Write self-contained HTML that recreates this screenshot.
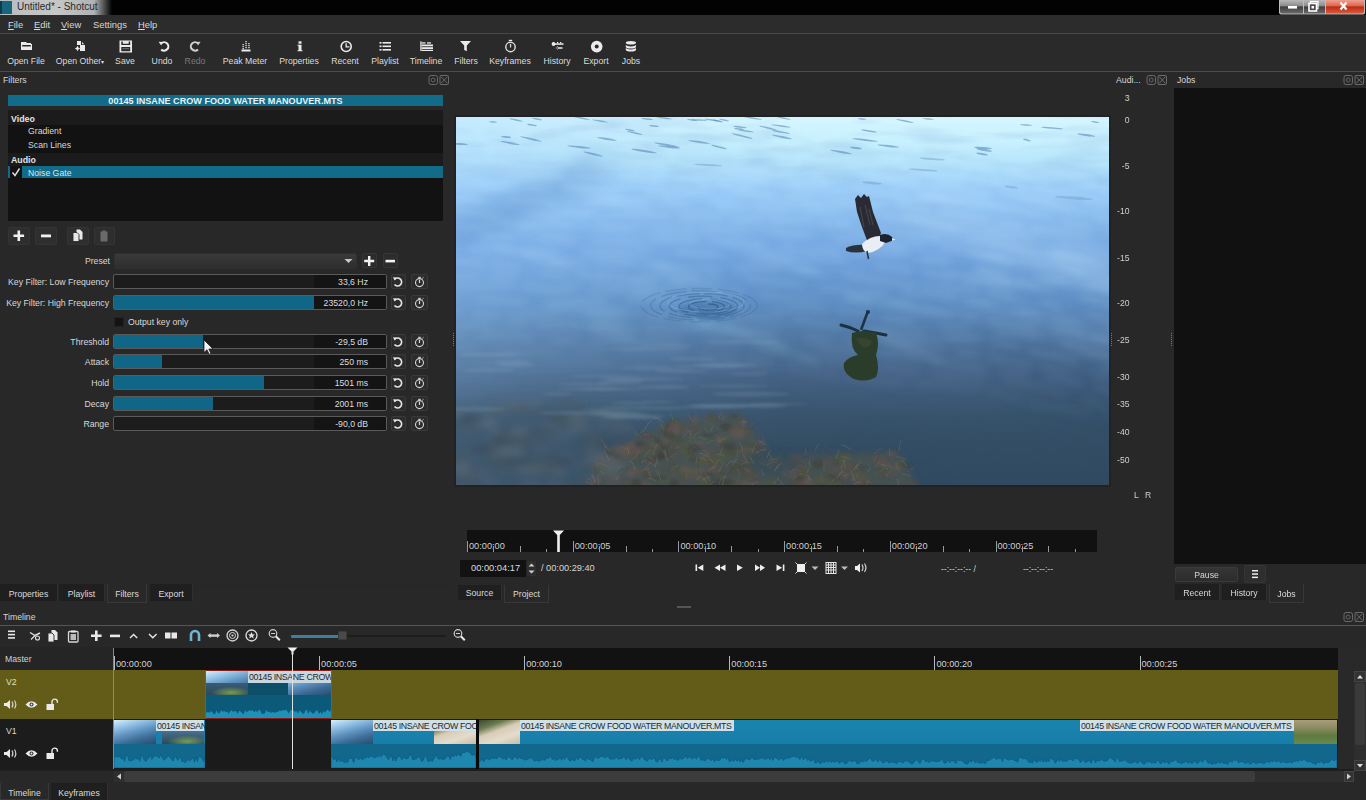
<!DOCTYPE html>
<html><head><meta charset="utf-8">
<style>
*{margin:0;padding:0;box-sizing:border-box}
html,body{width:1366px;height:800px;overflow:hidden;background:#282828;font-family:"Liberation Sans",sans-serif;color:#d8d8d8}
.a{position:absolute}
.t{position:absolute;white-space:nowrap;font-size:8.7px;line-height:10px}
.lbl{position:absolute;white-space:nowrap;font-size:8.7px;line-height:10px;color:#dcdcdc;text-align:center}
.r{text-align:right}
.sl{position:absolute;left:113px;width:274px;height:15px;border:1px solid #5a5a5a;border-radius:2px;background:#1c1c1c;overflow:hidden}
.sl .f{position:absolute;left:0;top:0;bottom:0;background:#0f6686}
.sl .v{position:absolute;left:200px;top:0;bottom:0;right:0;background:#141414}
.sl .n{position:absolute;right:18px;top:2px;font-size:8.7px;line-height:10px;color:#dedede;white-space:nowrap}
.btn{position:absolute;width:15px;height:15px;border:1px solid #3a3a3a;border-radius:2px;background:#2c2c2c}
.tab{position:absolute;height:17px;background:#1f1f1f;border-right:1px solid #303030}
.tab span{position:absolute;top:5px;left:0;right:0;text-align:center;font-size:8.7px;line-height:10px;color:#dadada;white-space:nowrap}
.tabsel{background:#282828;border:1px solid #383838;border-top:none}
</style></head><body>
<!-- title bar -->
<div class="a" style="left:0;top:0;width:1366px;height:15px;background:#020202"></div>
<div class="a" style="left:0;top:0;width:112px;height:15px;background:linear-gradient(90deg,#b9bcbd 0,#c6c8c8 50%,#b0b2b2 84%,rgba(0,0,0,0) 100%)"></div>
<div class="a" style="left:0;top:1px;width:12px;height:13px;background:#17667e;border-left:2px solid #0c3c4c"></div>
<div class="t" style="left:17px;top:2px;font-size:10px;color:#2a2a2a">Untitled* - Shotcut</div>
<div class="a" style="left:1150px;top:0;width:216px;height:15px;background:radial-gradient(ellipse 90px 20px at 100% 0,rgba(120,120,120,0.35),rgba(0,0,0,0))"></div>
<svg class="a" style="left:1278px;top:0" width="88" height="16">
<defs>
<linearGradient id="wg" x1="0" y1="0" x2="0" y2="1"><stop offset="0" stop-color="#b8b8b8"/><stop offset="0.45" stop-color="#8a8a8a"/><stop offset="0.5" stop-color="#3e3e3e"/><stop offset="1" stop-color="#6a6a6a"/></linearGradient>
<linearGradient id="rg" x1="0" y1="0" x2="0" y2="1"><stop offset="0" stop-color="#eea090"/><stop offset="0.45" stop-color="#d86650"/><stop offset="0.5" stop-color="#c02a10"/><stop offset="1" stop-color="#d85a40"/></linearGradient>
</defs>
<path d="M1 0h86v12.5q0 2-2 2h-82q-2 0-2-2z" fill="#bdbdbd"/>
<path d="M2 0h23v13.5h-21q-2 0-2-2z" fill="url(#wg)"/>
<rect x="26" y="0" width="21" height="13.5" fill="url(#wg)"/>
<path d="M48 0h38v11.5q0 2-2 2h-36z" fill="url(#rg)"/>
<rect x="10" y="6" width="9" height="2.6" fill="#fff"/>
<rect x="32.5" y="1.5" width="7.5" height="7" fill="none" stroke="#fff" stroke-width="1.2"/>
<rect x="31" y="3.5" width="7.5" height="7.5" fill="#4a4a4a" stroke="#fff" stroke-width="1.6"/>
<rect x="33.5" y="6" width="2.5" height="2.5" fill="#fff"/>
<path d="M62.5 2.5l6 7M68.5 2.5l-6 7" stroke="#fff" stroke-width="2.2"/>
</svg>
<!-- menu -->
<div class="a" style="left:0;top:15px;width:1366px;height:18px;background:#2c2c2c"></div>
<div class="t" style="left:8px;top:20px;font-size:9.4px"><span style="text-decoration:underline;text-underline-offset:1px">F</span>ile</div>
<div class="t" style="left:34px;top:20px;font-size:9.4px"><span style="text-decoration:underline;text-underline-offset:1px">E</span>dit</div>
<div class="t" style="left:61px;top:20px;font-size:9.4px"><span style="text-decoration:underline;text-underline-offset:1px">V</span>iew</div>
<div class="t" style="left:93px;top:20px;font-size:9.4px">Settings</div>
<div class="t" style="left:138px;top:20px;font-size:9.4px"><span style="text-decoration:underline;text-underline-offset:1px">H</span>elp</div>

<div class="a" style="left:0;top:33px;width:1366px;height:38px;background:#2a2a2a;border-top:1px solid #484848"></div>
<div class="a" style="left:0;top:71px;width:1366px;height:1px;background:#4c4c4c"></div>
<svg class="a" style="left:0;top:0" width="700" height="72" viewBox="0 0 700 72">
<g fill="#ebebeb" stroke="none">
<!-- open file -->
<path d="M21 42h5l1 1h4v1h-10z"/>
<path d="M21 44h11v6h-11z M22.2 45v1.6h8.6v-1.6z" fill-rule="evenodd"/>
<!-- open other -->
<rect x="77" y="41" width="4" height="4"/>
<path d="M82 42l2.2 2.2h-2.2z"/>
<path d="M80 45h5v6h-5z"/>
<path d="M77.5 45.8l0.9 1.8 1.8 0.9-1.8 0.9-0.9 1.8-0.9-1.8-1.8-0.9 1.8-0.9z"/>
<!-- save -->
<path d="M119.5 40.5h12.5v12h-12.5z M121.3 41.5v3.6h8.9v-3.6h-1.5v2.3h-5.9v-2.3z M121.3 47v4.3h8.9v-4.3z" fill-rule="evenodd"/>
<rect x="122.5" y="48.2" width="6.5" height="1" fill="#777"/>
<!-- undo -->
<path d="M161.2 43.4 A4.2 4.2 0 1 1 161.2 49.4" fill="none" stroke="#ebebeb" stroke-width="2.1"/>
<path d="M158.6 41.8l4.2 0.2-1.6 3.6z"/>
<!-- redo -->
<path d="M198 43.4 A4.2 4.2 0 1 0 198 49.4" fill="none" stroke="#d0d0d0" stroke-width="2.1"/>
<path d="M200.6 41.8l-4.2 0.2 1.6 3.6z" fill="#d0d0d0"/>
<!-- peak meter -->
<rect x="241.5" y="49.5" width="9" height="2"/>
<rect x="242.5" y="44" width="1.3" height="1.2"/><rect x="242.5" y="46" width="1.3" height="1.2"/><rect x="242.5" y="48" width="1.3" height="1.2"/>
<rect x="245.4" y="41" width="1.3" height="1.2"/><rect x="245.4" y="43" width="1.3" height="1.2"/><rect x="245.4" y="45" width="1.3" height="1.2"/><rect x="245.4" y="47" width="1.3" height="1.2"/>
<rect x="248.3" y="43" width="1.3" height="1.2"/><rect x="248.3" y="45" width="1.3" height="1.2"/><rect x="248.3" y="47" width="1.3" height="1.2"/>
<!-- info -->
<rect x="298.5" y="41.3" width="3" height="2.4"/>
<path d="M297.5 44.8h4v5.4h1v1h-5v-1h1v-4.4h-1z"/>
<!-- recent clock -->
<circle cx="346.2" cy="46.5" r="5" fill="none" stroke="#ebebeb" stroke-width="1.6"/>
<path d="M345.5 43.3h1.3v3h2.6v1.2h-3.9z"/>
<!-- playlist -->
<rect x="379.5" y="42" width="2" height="1.6"/><rect x="382.5" y="42" width="8.5" height="1.6"/>
<rect x="379.5" y="45.5" width="2" height="1.6"/><rect x="382.5" y="45.5" width="8.5" height="1.6"/>
<rect x="379.5" y="49" width="2" height="1.6"/><rect x="382.5" y="49" width="8.5" height="1.6"/>
<!-- timeline -->
<rect x="420.3" y="41.3" width="1.2" height="9.7"/>
<rect x="421.5" y="42.3" width="4" height="1.3"/><rect x="427" y="42.3" width="4" height="1.3"/>
<rect x="421.5" y="44.5" width="11.5" height="1.8"/>
<rect x="421.5" y="47.2" width="11.5" height="1.8"/>
<rect x="421.5" y="49.8" width="11.5" height="1.2"/>
<!-- filters funnel -->
<path d="M460 41h11l-4.2 4.6v5.6l-2.6-1.2v-4.4z"/>
<!-- keyframes stopwatch -->
<rect x="508.8" y="39.8" width="3.4" height="1.3"/>
<circle cx="510.5" cy="47" r="4.7" fill="none" stroke="#d8d8d8" stroke-width="1.5"/>
<rect x="509.9" y="44" width="1.3" height="3.5" fill="#d8d8d8"/>
<!-- history -->
<circle cx="553.5" cy="44" r="1.9"/>
<rect x="555" y="43.3" width="8.5" height="1.5"/>
<rect x="557" y="42" width="1.3" height="1.3"/><rect x="560" y="42" width="1.3" height="1.3"/>
<path d="M556.5 47.3h6v1.4h-6z M558 46l-2.5 1.9 2.5 1.9z"/>
<!-- export -->
<circle cx="596.7" cy="46.6" r="5.8"/>
<circle cx="596.7" cy="46.6" r="2" fill="#2a2a2a"/>
<!-- jobs -->
<ellipse cx="630.9" cy="42.8" rx="5.1" ry="1.8"/>
<path d="M625.8 44.6a5.1 1.8 0 0 0 10.2 0v2.1a5.1 1.8 0 0 1 -10.2 0z"/>
<path d="M625.8 47.6a5.1 1.8 0 0 0 10.2 0v2.1a5.1 1.8 0 0 1 -10.2 0z"/>
</g>
</svg>
<div class="lbl" style="left:6px;top:56px;width:40px">Open File</div>
<div class="lbl" style="left:55px;top:56px;width:50px">Open Other<span style="font-size:6px">▾</span></div>
<div class="lbl" style="left:110px;top:56px;width:30px">Save</div>
<div class="lbl" style="left:147px;top:56px;width:30px">Undo</div>
<div class="lbl" style="left:180px;top:56px;width:30px;color:#7a7a7a">Redo</div>
<div class="lbl" style="left:220px;top:56px;width:50px">Peak Meter</div>
<div class="lbl" style="left:274px;top:56px;width:50px">Properties</div>
<div class="lbl" style="left:325px;top:56px;width:40px">Recent</div>
<div class="lbl" style="left:365px;top:56px;width:40px">Playlist</div>
<div class="lbl" style="left:406px;top:56px;width:40px">Timeline</div>
<div class="lbl" style="left:446px;top:56px;width:40px">Filters</div>
<div class="lbl" style="left:485px;top:56px;width:50px">Keyframes</div>
<div class="lbl" style="left:537px;top:56px;width:40px">History</div>
<div class="lbl" style="left:576px;top:56px;width:40px">Export</div>
<div class="lbl" style="left:611px;top:56px;width:40px">Jobs</div>


<!-- FILTERS DOCK -->
<div class="t" style="left:3px;top:75px;color:#d6d6d6">Filters</div>
<svg class="a" style="left:428px;top:74px" width="24" height="12">
<rect x="1" y="1.5" width="8.5" height="9" rx="2" fill="none" stroke="#6a6a6a" stroke-width="1"/>
<circle cx="5.2" cy="6" r="2" fill="none" stroke="#6a6a6a" stroke-width="0.9"/>
<rect x="12" y="1.5" width="8.5" height="9" rx="1" fill="none" stroke="#6a6a6a" stroke-width="1"/>
<path d="M13 2.5l6.5 7M19.5 2.5l-6.5 7" stroke="#6a6a6a" stroke-width="1"/>
</svg>
<div class="a" style="left:8px;top:95px;width:435px;height:11px;background:#136b8a"></div>
<div class="t" style="left:8px;top:96px;width:435px;text-align:center;font-weight:bold;font-size:9.1px;color:#e8f4f8">00145 INSANE CROW FOOD WATER MANOUVER.MTS</div>
<div class="a" style="left:8px;top:110px;width:435px;height:111px;background:#121212"></div>
<div class="a" style="left:8px;top:110px;width:435px;height:15px;background:#1b1b1b"></div>
<div class="a" style="left:8px;top:153px;width:435px;height:13px;background:#1b1b1b"></div>
<div class="a" style="left:22px;top:166px;width:421px;height:12px;background:#136b8a"></div>
<div class="a" style="left:8px;top:166px;width:2px;height:12px;background:#136b8a"></div>
<div class="t" style="left:11px;top:114px;font-weight:bold;font-size:8.8px;color:#e2e2e2">Video</div>
<div class="t" style="left:28px;top:126px;color:#d8d8d8">Gradient</div>
<div class="t" style="left:28px;top:140px;color:#d8d8d8">Scan Lines</div>
<div class="t" style="left:11px;top:155px;font-weight:bold;font-size:8.8px;color:#e2e2e2">Audio</div>
<div class="t" style="left:28px;top:168px;color:#cfe8f0">Noise Gate</div>
<svg class="a" style="left:11px;top:166px" width="11" height="12"><path d="M1.5 6.5l2.5 3 4.5-7" fill="none" stroke="#e0e0e0" stroke-width="1.4"/></svg>
<!-- list buttons -->
<div class="a" style="left:8px;top:227px;width:22px;height:18px;border:1px solid #343434;border-radius:2px;background:#2e2e2e"></div>
<div class="a" style="left:35px;top:227px;width:22px;height:18px;border:1px solid #343434;border-radius:2px;background:#2e2e2e"></div>
<div class="a" style="left:67px;top:227px;width:22px;height:18px;border:1px solid #343434;border-radius:2px;background:#2e2e2e"></div>
<div class="a" style="left:94px;top:227px;width:21px;height:18px;border:1px solid #343434;border-radius:2px;background:#2e2e2e"></div>
<svg class="a" style="left:0;top:220px" width="130" height="30">
<path d="M17.5 10.5h2.6v4h4v2.6h-4v4h-2.6v-4h-4v-2.6h4z" fill="#f0f0f0"/>
<rect x="41" y="14.5" width="10" height="2.8" fill="#f0f0f0"/>
<path d="M76.5 9.5h3.5l2.5 2.5v7.5h-6z" fill="#e8e8e8"/>
<path d="M73 12.5h4l2 2v7h-6z" fill="#e8e8e8" stroke="#2e2e2e" stroke-width="0.9"/>
<path d="M100.5 11.5h2v-1h3v1h2v10h-7z" fill="#6a6a6a"/>
</svg>
<!-- preset -->
<div class="t r" style="left:40px;top:256px;width:70px">Preset</div>
<div class="a" style="left:114px;top:253px;width:243px;height:16px;border:1px solid #303030;border-radius:2px;background:linear-gradient(#3a3a3a,#2e2e2e)"></div>
<svg class="a" style="left:344px;top:258px" width="10" height="6"><path d="M0.5 1h8l-4 4z" fill="#c8c8c8"/></svg>
<div class="a" style="left:362px;top:253px;width:15px;height:15px;border:1px solid #363636;border-radius:2px;background:#2c2c2c"></div>
<div class="a" style="left:383px;top:253px;width:15px;height:15px;border:1px solid #363636;border-radius:2px;background:#2c2c2c"></div>
<svg class="a" style="left:360px;top:251px" width="40" height="20">
<path d="M8 5h2.4v3.8h3.8v2.4h-3.8v3.8h-2.4v-3.8h-3.8v-2.4h3.8z" fill="#f2f2f2"/>
<rect x="25.5" y="8.8" width="9.5" height="2.6" fill="#f2f2f2"/>
</svg>
<div class="t r" style="left:0;top:277px;width:109px">Key Filter: Low Frequency</div>
<div class="sl" style="top:274px"><div class="v"></div><div class="f" style="width:0px"></div><div class="n">33,6 Hz</div></div>
<div class="btn" style="left:391px;top:274px"></div><div class="btn" style="left:411px;top:274px;width:17px"></div>
<svg class="a" style="left:390px;top:274px" width="40" height="16"><path d="M4.5 5.5A4 4 0 1 1 4.5 10.5" fill="none" stroke="#e6e6e6" stroke-width="1.6"/><path d="M3 3.2l3.6 0.4-2 3z" fill="#e6e6e6"/><circle cx="29.5" cy="8.6" r="4" fill="none" stroke="#d6d6d6" stroke-width="1.1"/><rect x="28.9" y="5.8" width="1.2" height="3.2" fill="#d6d6d6"/><rect x="28.2" y="2.8" width="2.6" height="1.1" fill="#d6d6d6"/><path d="M32.3 4.3l1.2-1" stroke="#d6d6d6" stroke-width="0.9"/></svg>
<div class="t r" style="left:0;top:298px;width:109px">Key Filter: High Frequency</div>
<div class="sl" style="top:295px"><div class="v"></div><div class="f" style="width:200px"></div><div class="n">23520,0 Hz</div></div>
<div class="btn" style="left:391px;top:295px"></div><div class="btn" style="left:411px;top:295px;width:17px"></div>
<svg class="a" style="left:390px;top:295px" width="40" height="16"><path d="M4.5 5.5A4 4 0 1 1 4.5 10.5" fill="none" stroke="#e6e6e6" stroke-width="1.6"/><path d="M3 3.2l3.6 0.4-2 3z" fill="#e6e6e6"/><circle cx="29.5" cy="8.6" r="4" fill="none" stroke="#d6d6d6" stroke-width="1.1"/><rect x="28.9" y="5.8" width="1.2" height="3.2" fill="#d6d6d6"/><rect x="28.2" y="2.8" width="2.6" height="1.1" fill="#d6d6d6"/><path d="M32.3 4.3l1.2-1" stroke="#d6d6d6" stroke-width="0.9"/></svg>
<div class="t r" style="left:0;top:337px;width:109px">Threshold</div>
<div class="sl" style="top:334px"><div class="v"></div><div class="f" style="width:89px"></div><div class="n">-29,5 dB</div></div>
<div class="btn" style="left:391px;top:334px"></div><div class="btn" style="left:411px;top:334px;width:17px"></div>
<svg class="a" style="left:390px;top:334px" width="40" height="16"><path d="M4.5 5.5A4 4 0 1 1 4.5 10.5" fill="none" stroke="#e6e6e6" stroke-width="1.6"/><path d="M3 3.2l3.6 0.4-2 3z" fill="#e6e6e6"/><circle cx="29.5" cy="8.6" r="4" fill="none" stroke="#d6d6d6" stroke-width="1.1"/><rect x="28.9" y="5.8" width="1.2" height="3.2" fill="#d6d6d6"/><rect x="28.2" y="2.8" width="2.6" height="1.1" fill="#d6d6d6"/><path d="M32.3 4.3l1.2-1" stroke="#d6d6d6" stroke-width="0.9"/></svg>
<div class="t r" style="left:0;top:357px;width:109px">Attack</div>
<div class="sl" style="top:354px"><div class="v"></div><div class="f" style="width:48px"></div><div class="n">250 ms</div></div>
<div class="btn" style="left:391px;top:354px"></div><div class="btn" style="left:411px;top:354px;width:17px"></div>
<svg class="a" style="left:390px;top:354px" width="40" height="16"><path d="M4.5 5.5A4 4 0 1 1 4.5 10.5" fill="none" stroke="#e6e6e6" stroke-width="1.6"/><path d="M3 3.2l3.6 0.4-2 3z" fill="#e6e6e6"/><circle cx="29.5" cy="8.6" r="4" fill="none" stroke="#d6d6d6" stroke-width="1.1"/><rect x="28.9" y="5.8" width="1.2" height="3.2" fill="#d6d6d6"/><rect x="28.2" y="2.8" width="2.6" height="1.1" fill="#d6d6d6"/><path d="M32.3 4.3l1.2-1" stroke="#d6d6d6" stroke-width="0.9"/></svg>
<div class="t r" style="left:0;top:378px;width:109px">Hold</div>
<div class="sl" style="top:375px"><div class="v"></div><div class="f" style="width:150px"></div><div class="n">1501 ms</div></div>
<div class="btn" style="left:391px;top:375px"></div><div class="btn" style="left:411px;top:375px;width:17px"></div>
<svg class="a" style="left:390px;top:375px" width="40" height="16"><path d="M4.5 5.5A4 4 0 1 1 4.5 10.5" fill="none" stroke="#e6e6e6" stroke-width="1.6"/><path d="M3 3.2l3.6 0.4-2 3z" fill="#e6e6e6"/><circle cx="29.5" cy="8.6" r="4" fill="none" stroke="#d6d6d6" stroke-width="1.1"/><rect x="28.9" y="5.8" width="1.2" height="3.2" fill="#d6d6d6"/><rect x="28.2" y="2.8" width="2.6" height="1.1" fill="#d6d6d6"/><path d="M32.3 4.3l1.2-1" stroke="#d6d6d6" stroke-width="0.9"/></svg>
<div class="t r" style="left:0;top:399px;width:109px">Decay</div>
<div class="sl" style="top:396px"><div class="v"></div><div class="f" style="width:99px"></div><div class="n">2001 ms</div></div>
<div class="btn" style="left:391px;top:396px"></div><div class="btn" style="left:411px;top:396px;width:17px"></div>
<svg class="a" style="left:390px;top:396px" width="40" height="16"><path d="M4.5 5.5A4 4 0 1 1 4.5 10.5" fill="none" stroke="#e6e6e6" stroke-width="1.6"/><path d="M3 3.2l3.6 0.4-2 3z" fill="#e6e6e6"/><circle cx="29.5" cy="8.6" r="4" fill="none" stroke="#d6d6d6" stroke-width="1.1"/><rect x="28.9" y="5.8" width="1.2" height="3.2" fill="#d6d6d6"/><rect x="28.2" y="2.8" width="2.6" height="1.1" fill="#d6d6d6"/><path d="M32.3 4.3l1.2-1" stroke="#d6d6d6" stroke-width="0.9"/></svg>
<div class="t r" style="left:0;top:419px;width:109px">Range</div>
<div class="sl" style="top:416px"><div class="v"></div><div class="f" style="width:0px"></div><div class="n">-90,0 dB</div></div>
<div class="btn" style="left:391px;top:416px"></div><div class="btn" style="left:411px;top:416px;width:17px"></div>
<svg class="a" style="left:390px;top:416px" width="40" height="16"><path d="M4.5 5.5A4 4 0 1 1 4.5 10.5" fill="none" stroke="#e6e6e6" stroke-width="1.6"/><path d="M3 3.2l3.6 0.4-2 3z" fill="#e6e6e6"/><circle cx="29.5" cy="8.6" r="4" fill="none" stroke="#d6d6d6" stroke-width="1.1"/><rect x="28.9" y="5.8" width="1.2" height="3.2" fill="#d6d6d6"/><rect x="28.2" y="2.8" width="2.6" height="1.1" fill="#d6d6d6"/><path d="M32.3 4.3l1.2-1" stroke="#d6d6d6" stroke-width="0.9"/></svg>
<div class="a" style="left:114px;top:317px;width:10px;height:10px;background:#141414;border:1px solid #222"></div>
<div class="t" style="left:128px;top:317px">Output key only</div>
<svg class="a" style="left:203px;top:339px" width="12" height="18"><path d="M1 1v12.5l3-2.8 2.2 4.6 1.8-0.8-2.2-4.5h4.2z" fill="#f4f4f4" stroke="#222" stroke-width="0.8"/></svg>
<div class="a" style="left:0;top:584px;width:450px;height:1px;background:#262626"></div>
<div class="tab" style="left:0;top:584px;width:58px"><span>Properties</span></div>
<div class="tab" style="left:59px;top:584px;width:46px"><span>Playlist</span></div>
<div class="tab tabsel" style="left:107px;top:584px;width:40px;height:19px"><span style="top:5px">Filters</span></div>
<div class="tab" style="left:150px;top:584px;width:43px"><span>Export</span></div>
<!-- PLAYER -->
<div class="a" style="left:454px;top:115px;width:657px;height:372px;background:#222222"></div>
<div id="video" class="a" style="left:456px;top:117px;width:653px;height:368px;overflow:hidden"><svg width="653" height="368" viewBox="0 0 653 368">
<defs>
<linearGradient id="gv" x1="0" y1="0" x2="0" y2="1">
<stop offset="0" stop-color="#d6f6ff"/>
<stop offset="0.06" stop-color="#caf2fe"/>
<stop offset="0.12" stop-color="#b8e6fc"/>
<stop offset="0.2" stop-color="#9ccefa"/>
<stop offset="0.36" stop-color="#76a8e2"/>
<stop offset="0.5" stop-color="#5e8ec4"/>
<stop offset="0.71" stop-color="#4c6a8e"/>
<stop offset="0.82" stop-color="#405c74"/>
<stop offset="1" stop-color="#385060"/>
</linearGradient>
<linearGradient id="gh" x1="0" y1="0.6" x2="1" y2="0.35">
<stop offset="0" stop-color="#1a3a60" stop-opacity="0.35"/>
<stop offset="0.45" stop-color="#1a3a60" stop-opacity="0"/>
<stop offset="0.7" stop-color="#c0e4ff" stop-opacity="0.05"/>
<stop offset="1" stop-color="#c0e4ff" stop-opacity="0.3"/>
</linearGradient>
<filter id="b12" x="-30%" y="-30%" width="160%" height="160%"><feGaussianBlur stdDeviation="12"/></filter>
<filter id="b20" x="-30%" y="-30%" width="160%" height="160%"><feGaussianBlur stdDeviation="20"/></filter>
<filter id="b6" x="-20%" y="-20%" width="140%" height="140%"><feGaussianBlur stdDeviation="5"/></filter>
<filter id="b2" x="-20%" y="-50%" width="140%" height="200%"><feGaussianBlur stdDeviation="1.5"/></filter>
<filter id="b4" x="-20%" y="-80%" width="140%" height="260%"><feGaussianBlur stdDeviation="3.5"/></filter>
<filter id="b1" x="-20%" y="-50%" width="140%" height="200%"><feGaussianBlur stdDeviation="0.7"/></filter>
<filter id="tex" x="0" y="0" width="100%" height="100%">
<feTurbulence type="fractalNoise" baseFrequency="0.012 0.07" numOctaves="3" seed="4" result="n"/>
<feColorMatrix in="n" type="matrix" values="0 0 0 0 0.25  0 0 0 0 0.45  0 0 0 0 0.75  0 0 0 2.5 -1.15" result="d"/>
<feComposite in="d" in2="SourceGraphic" operator="in"/>
</filter>
<filter id="tex3" x="0" y="0" width="100%" height="100%">
<feTurbulence type="fractalNoise" baseFrequency="0.014 0.08" numOctaves="3" seed="11" result="n"/>
<feColorMatrix in="n" type="matrix" values="0 0 0 0 0.85  0 0 0 0 0.95  0 0 0 0 1  0 0 0 2.5 -1.2" result="d"/>
<feComposite in="d" in2="SourceGraphic" operator="in"/>
</filter>
<filter id="tex2" x="0" y="0" width="100%" height="100%">
<feTurbulence type="fractalNoise" baseFrequency="0.12" numOctaves="2" seed="9" result="n"/>
<feColorMatrix in="n" type="matrix" values="0 0 0 0 0.5  0 0 0 0 0.42  0 0 0 0 0.38  0 0 0 2.2 -0.9" result="d"/>
<feComposite in="d" in2="SourceGraphic" operator="in" result="c"/>
<feGaussianBlur in="c" stdDeviation="1.5"/>
</filter>
<linearGradient id="mkg" x1="0" y1="0" x2="0" y2="1"><stop offset="0" stop-color="#fff"/><stop offset="0.3" stop-color="#fff" stop-opacity="0.8"/><stop offset="0.6" stop-color="#fff" stop-opacity="0.25"/><stop offset="0.8" stop-color="#fff" stop-opacity="0"/></linearGradient>
<mask id="mk" maskUnits="userSpaceOnUse" x="0" y="0" width="653" height="368"><rect width="653" height="368" fill="url(#mkg)"/></mask>
<linearGradient id="gh2" x1="0" y1="0" x2="1" y2="0">
<stop offset="0" stop-color="#a0d0ff" stop-opacity="0.3"/>
<stop offset="0.5" stop-color="#90c4f4" stop-opacity="0"/>
<stop offset="1" stop-color="#203850" stop-opacity="0.0"/>
</linearGradient>
<linearGradient id="gb" x1="0" y1="0" x2="0" y2="1">
<stop offset="0" stop-color="#1a3048" stop-opacity="0"/>
<stop offset="0.5" stop-color="#1a3048" stop-opacity="0"/>
<stop offset="0.8" stop-color="#1a3048" stop-opacity="0.22"/>
<stop offset="1" stop-color="#1a3048" stop-opacity="0.3"/>
</linearGradient>
</defs>
<rect width="653" height="368" fill="url(#gv)"/>
<rect width="653" height="368" fill="url(#gh2)"/>
<path d="M-10 105 L60 75 L140 40 L160 52 L70 98 L-10 135z" fill="#4a7cbc" opacity="0.4" filter="url(#b12)"/>
<path d="M430 80 L700 150 L700 190 L470 115z" fill="#b8dcf6" opacity="0.3" filter="url(#b12)"/>
<path d="M480 170 L700 230 L700 250 L520 195z" fill="#9cc8ec" opacity="0.25" filter="url(#b12)"/>
<path d="M520 215 L700 265 L700 330 L540 250z" fill="#2a4a70" opacity="0.25" filter="url(#b20)"/>
<rect width="653" height="368" fill="url(#gb)"/>
<g mask="url(#mk)"><rect width="653" height="368" fill="#000" filter="url(#tex)" opacity="0.3"/></g>
<ellipse cx="70" cy="345" rx="160" ry="55" fill="#34485a" opacity="0.55" filter="url(#b20)"/>
<ellipse cx="560" cy="360" rx="160" ry="40" fill="#30506a" opacity="0.45" filter="url(#b20)"/>
<polygon points="130,372 144,338 184,318 224,303 284,296 298,313 314,338 354,338 444,336 462,372" fill="#4c5250" opacity="0.8" filter="url(#b4)"/>
<g filter="url(#b2)"><ellipse cx="238" cy="303" rx="4" ry="4" fill="#625652" opacity="0.6"/><ellipse cx="162" cy="340" rx="5" ry="2" fill="#3a403c" opacity="0.6"/><ellipse cx="270" cy="310" rx="6" ry="4" fill="#3a403c" opacity="0.6"/><ellipse cx="340" cy="371" rx="7" ry="2" fill="#3a403c" opacity="0.6"/><ellipse cx="204" cy="337" rx="5" ry="2" fill="#5a504c" opacity="0.6"/><ellipse cx="325" cy="344" rx="4" ry="4" fill="#444c40" opacity="0.6"/><ellipse cx="319" cy="343" rx="7" ry="3" fill="#505640" opacity="0.6"/><ellipse cx="235" cy="340" rx="6" ry="3" fill="#505640" opacity="0.6"/><ellipse cx="190" cy="356" rx="7" ry="4" fill="#524c4a" opacity="0.6"/><ellipse cx="423" cy="352" rx="7" ry="2" fill="#444c40" opacity="0.6"/><ellipse cx="245" cy="369" rx="4" ry="4" fill="#505640" opacity="0.6"/><ellipse cx="386" cy="339" rx="6" ry="3" fill="#444c40" opacity="0.6"/><ellipse cx="296" cy="358" rx="8" ry="5" fill="#524c4a" opacity="0.6"/><ellipse cx="289" cy="346" rx="8" ry="3" fill="#524c4a" opacity="0.6"/><ellipse cx="324" cy="348" rx="5" ry="3" fill="#505640" opacity="0.6"/><ellipse cx="285" cy="304" rx="6" ry="3" fill="#524c4a" opacity="0.6"/><ellipse cx="226" cy="353" rx="6" ry="5" fill="#505640" opacity="0.6"/><ellipse cx="314" cy="365" rx="8" ry="3" fill="#505640" opacity="0.6"/><ellipse cx="269" cy="320" rx="9" ry="2" fill="#505640" opacity="0.6"/><ellipse cx="208" cy="331" rx="5" ry="3" fill="#3a403c" opacity="0.6"/><ellipse cx="179" cy="335" rx="7" ry="5" fill="#3a403c" opacity="0.6"/><ellipse cx="337" cy="347" rx="6" ry="5" fill="#524c4a" opacity="0.6"/><ellipse cx="449" cy="348" rx="6" ry="3" fill="#3a403c" opacity="0.6"/><ellipse cx="165" cy="344" rx="5" ry="5" fill="#524c4a" opacity="0.6"/><ellipse cx="278" cy="299" rx="4" ry="2" fill="#3a403c" opacity="0.6"/><ellipse cx="423" cy="342" rx="7" ry="5" fill="#5a504c" opacity="0.6"/><ellipse cx="169" cy="331" rx="6" ry="3" fill="#505640" opacity="0.6"/><ellipse cx="178" cy="354" rx="5" ry="4" fill="#625652" opacity="0.6"/><ellipse cx="179" cy="336" rx="8" ry="3" fill="#524c4a" opacity="0.6"/><ellipse cx="205" cy="336" rx="6" ry="3" fill="#3a403c" opacity="0.6"/><ellipse cx="402" cy="374" rx="8" ry="4" fill="#5a504c" opacity="0.6"/><ellipse cx="224" cy="312" rx="7" ry="3" fill="#625652" opacity="0.6"/><ellipse cx="401" cy="351" rx="9" ry="3" fill="#444c40" opacity="0.6"/><ellipse cx="339" cy="367" rx="6" ry="4" fill="#524c4a" opacity="0.6"/><ellipse cx="351" cy="367" rx="8" ry="3" fill="#625652" opacity="0.6"/><ellipse cx="190" cy="357" rx="4" ry="5" fill="#444c40" opacity="0.6"/><ellipse cx="183" cy="374" rx="5" ry="5" fill="#524c4a" opacity="0.6"/><ellipse cx="407" cy="373" rx="9" ry="2" fill="#625652" opacity="0.6"/><ellipse cx="398" cy="352" rx="7" ry="5" fill="#524c4a" opacity="0.6"/><ellipse cx="275" cy="364" rx="4" ry="3" fill="#5a504c" opacity="0.6"/><ellipse cx="298" cy="355" rx="5" ry="3" fill="#444c40" opacity="0.6"/><ellipse cx="174" cy="367" rx="8" ry="4" fill="#444c40" opacity="0.6"/><ellipse cx="407" cy="365" rx="7" ry="4" fill="#5a504c" opacity="0.6"/><ellipse cx="289" cy="352" rx="4" ry="4" fill="#3a403c" opacity="0.6"/><ellipse cx="308" cy="331" rx="8" ry="2" fill="#524c4a" opacity="0.6"/><ellipse cx="139" cy="366" rx="6" ry="4" fill="#524c4a" opacity="0.6"/><ellipse cx="299" cy="334" rx="5" ry="4" fill="#625652" opacity="0.6"/><ellipse cx="213" cy="334" rx="9" ry="5" fill="#444c40" opacity="0.6"/><ellipse cx="198" cy="328" rx="5" ry="3" fill="#505640" opacity="0.6"/><ellipse cx="154" cy="347" rx="8" ry="2" fill="#524c4a" opacity="0.6"/><ellipse cx="370" cy="346" rx="5" ry="2" fill="#5a504c" opacity="0.6"/><ellipse cx="287" cy="353" rx="6" ry="3" fill="#524c4a" opacity="0.6"/><ellipse cx="184" cy="327" rx="6" ry="3" fill="#3a403c" opacity="0.6"/><ellipse cx="253" cy="319" rx="6" ry="2" fill="#505640" opacity="0.6"/><ellipse cx="241" cy="343" rx="9" ry="2" fill="#3a403c" opacity="0.6"/><ellipse cx="221" cy="367" rx="5" ry="2" fill="#5a504c" opacity="0.6"/><ellipse cx="271" cy="367" rx="6" ry="4" fill="#444c40" opacity="0.6"/><ellipse cx="302" cy="332" rx="4" ry="2" fill="#444c40" opacity="0.6"/><ellipse cx="154" cy="370" rx="4" ry="3" fill="#625652" opacity="0.6"/><ellipse cx="134" cy="375" rx="9" ry="3" fill="#505640" opacity="0.6"/><ellipse cx="173" cy="335" rx="9" ry="5" fill="#5a504c" opacity="0.6"/><ellipse cx="218" cy="305" rx="7" ry="4" fill="#444c40" opacity="0.6"/><ellipse cx="199" cy="328" rx="5" ry="3" fill="#625652" opacity="0.6"/><ellipse cx="289" cy="369" rx="7" ry="4" fill="#524c4a" opacity="0.6"/><ellipse cx="428" cy="372" rx="7" ry="5" fill="#444c40" opacity="0.6"/><ellipse cx="245" cy="361" rx="8" ry="2" fill="#625652" opacity="0.6"/><ellipse cx="461" cy="373" rx="4" ry="4" fill="#5a504c" opacity="0.6"/><ellipse cx="149" cy="347" rx="8" ry="4" fill="#505640" opacity="0.6"/><ellipse cx="224" cy="311" rx="4" ry="3" fill="#444c40" opacity="0.6"/><ellipse cx="252" cy="318" rx="6" ry="2" fill="#3a403c" opacity="0.6"/><ellipse cx="191" cy="319" rx="6" ry="4" fill="#524c4a" opacity="0.6"/><ellipse cx="197" cy="333" rx="4" ry="4" fill="#524c4a" opacity="0.6"/><ellipse cx="178" cy="340" rx="4" ry="3" fill="#505640" opacity="0.6"/><ellipse cx="208" cy="340" rx="8" ry="2" fill="#3a403c" opacity="0.6"/><ellipse cx="429" cy="357" rx="6" ry="3" fill="#3a403c" opacity="0.6"/><ellipse cx="373" cy="345" rx="8" ry="4" fill="#524c4a" opacity="0.6"/><ellipse cx="302" cy="326" rx="8" ry="2" fill="#625652" opacity="0.6"/><ellipse cx="305" cy="333" rx="8" ry="4" fill="#524c4a" opacity="0.6"/><ellipse cx="429" cy="348" rx="7" ry="2" fill="#625652" opacity="0.6"/><ellipse cx="144" cy="344" rx="6" ry="3" fill="#524c4a" opacity="0.6"/><ellipse cx="218" cy="329" rx="8" ry="4" fill="#524c4a" opacity="0.6"/><ellipse cx="309" cy="346" rx="8" ry="3" fill="#524c4a" opacity="0.6"/><ellipse cx="401" cy="362" rx="8" ry="3" fill="#5a504c" opacity="0.6"/><ellipse cx="378" cy="373" rx="8" ry="2" fill="#505640" opacity="0.6"/><ellipse cx="146" cy="344" rx="4" ry="2" fill="#5a504c" opacity="0.6"/><ellipse cx="215" cy="353" rx="7" ry="2" fill="#444c40" opacity="0.6"/><ellipse cx="292" cy="331" rx="4" ry="3" fill="#625652" opacity="0.6"/><ellipse cx="294" cy="350" rx="6" ry="3" fill="#444c40" opacity="0.6"/><ellipse cx="170" cy="366" rx="6" ry="2" fill="#5a504c" opacity="0.6"/><ellipse cx="288" cy="315" rx="8" ry="5" fill="#524c4a" opacity="0.6"/><ellipse cx="281" cy="313" rx="9" ry="5" fill="#5a504c" opacity="0.6"/><ellipse cx="250" cy="341" rx="7" ry="5" fill="#625652" opacity="0.6"/><ellipse cx="295" cy="328" rx="8" ry="3" fill="#444c40" opacity="0.6"/><ellipse cx="256" cy="300" rx="4" ry="4" fill="#444c40" opacity="0.6"/><ellipse cx="440" cy="351" rx="5" ry="3" fill="#625652" opacity="0.6"/><ellipse cx="262" cy="375" rx="4" ry="5" fill="#3a403c" opacity="0.6"/><ellipse cx="383" cy="363" rx="5" ry="5" fill="#444c40" opacity="0.6"/><ellipse cx="226" cy="370" rx="9" ry="3" fill="#5a504c" opacity="0.6"/><ellipse cx="236" cy="356" rx="8" ry="4" fill="#505640" opacity="0.6"/><ellipse cx="341" cy="368" rx="7" ry="4" fill="#3a403c" opacity="0.6"/><ellipse cx="147" cy="352" rx="7" ry="2" fill="#505640" opacity="0.6"/><ellipse cx="435" cy="337" rx="6" ry="3" fill="#5a504c" opacity="0.6"/><ellipse cx="230" cy="353" rx="5" ry="4" fill="#625652" opacity="0.6"/><ellipse cx="231" cy="337" rx="5" ry="4" fill="#505640" opacity="0.6"/><ellipse cx="155" cy="333" rx="7" ry="3" fill="#505640" opacity="0.6"/><ellipse cx="241" cy="355" rx="5" ry="3" fill="#505640" opacity="0.6"/><ellipse cx="217" cy="338" rx="8" ry="3" fill="#524c4a" opacity="0.6"/><ellipse cx="269" cy="335" rx="5" ry="4" fill="#505640" opacity="0.6"/><ellipse cx="297" cy="339" rx="5" ry="4" fill="#444c40" opacity="0.6"/><ellipse cx="341" cy="363" rx="4" ry="5" fill="#5a504c" opacity="0.6"/><ellipse cx="259" cy="345" rx="9" ry="5" fill="#505640" opacity="0.6"/><ellipse cx="141" cy="350" rx="9" ry="3" fill="#505640" opacity="0.6"/><ellipse cx="155" cy="369" rx="8" ry="5" fill="#3a403c" opacity="0.6"/><ellipse cx="182" cy="334" rx="5" ry="4" fill="#625652" opacity="0.6"/><ellipse cx="365" cy="362" rx="4" ry="4" fill="#505640" opacity="0.6"/><ellipse cx="370" cy="372" rx="5" ry="4" fill="#625652" opacity="0.6"/><ellipse cx="154" cy="335" rx="5" ry="3" fill="#3a403c" opacity="0.6"/><ellipse cx="310" cy="375" rx="9" ry="4" fill="#444c40" opacity="0.6"/><ellipse cx="209" cy="311" rx="8" ry="3" fill="#505640" opacity="0.6"/><ellipse cx="216" cy="347" rx="5" ry="2" fill="#444c40" opacity="0.6"/><ellipse cx="243" cy="326" rx="6" ry="2" fill="#625652" opacity="0.6"/><ellipse cx="228" cy="362" rx="5" ry="5" fill="#524c4a" opacity="0.6"/><ellipse cx="234" cy="360" rx="6" ry="3" fill="#5a504c" opacity="0.6"/><ellipse cx="339" cy="342" rx="6" ry="5" fill="#5a504c" opacity="0.6"/><ellipse cx="149" cy="341" rx="4" ry="2" fill="#505640" opacity="0.6"/><ellipse cx="281" cy="351" rx="8" ry="5" fill="#444c40" opacity="0.6"/><ellipse cx="192" cy="370" rx="6" ry="3" fill="#625652" opacity="0.6"/><ellipse cx="373" cy="361" rx="6" ry="2" fill="#444c40" opacity="0.6"/><ellipse cx="271" cy="365" rx="9" ry="3" fill="#3a403c" opacity="0.6"/><ellipse cx="249" cy="360" rx="4" ry="4" fill="#505640" opacity="0.6"/><ellipse cx="196" cy="336" rx="5" ry="3" fill="#505640" opacity="0.6"/><ellipse cx="268" cy="359" rx="4" ry="2" fill="#505640" opacity="0.6"/><ellipse cx="151" cy="368" rx="5" ry="2" fill="#444c40" opacity="0.6"/><ellipse cx="242" cy="371" rx="5" ry="4" fill="#524c4a" opacity="0.6"/><ellipse cx="236" cy="313" rx="8" ry="4" fill="#524c4a" opacity="0.6"/><ellipse cx="400" cy="370" rx="4" ry="3" fill="#524c4a" opacity="0.6"/><ellipse cx="289" cy="371" rx="8" ry="5" fill="#505640" opacity="0.6"/><ellipse cx="209" cy="363" rx="6" ry="4" fill="#505640" opacity="0.6"/><ellipse cx="458" cy="365" rx="5" ry="2" fill="#524c4a" opacity="0.6"/><ellipse cx="162" cy="332" rx="9" ry="3" fill="#625652" opacity="0.6"/><ellipse cx="175" cy="329" rx="5" ry="4" fill="#625652" opacity="0.6"/><ellipse cx="389" cy="355" rx="5" ry="4" fill="#444c40" opacity="0.6"/><ellipse cx="255" cy="353" rx="6" ry="3" fill="#5a504c" opacity="0.6"/><ellipse cx="209" cy="314" rx="5" ry="2" fill="#3a403c" opacity="0.6"/><ellipse cx="214" cy="311" rx="5" ry="4" fill="#3a403c" opacity="0.6"/><ellipse cx="349" cy="374" rx="4" ry="5" fill="#524c4a" opacity="0.6"/><ellipse cx="207" cy="328" rx="4" ry="3" fill="#444c40" opacity="0.6"/><ellipse cx="217" cy="356" rx="5" ry="4" fill="#524c4a" opacity="0.6"/><ellipse cx="254" cy="302" rx="9" ry="2" fill="#5a504c" opacity="0.6"/><ellipse cx="375" cy="368" rx="8" ry="3" fill="#524c4a" opacity="0.6"/><ellipse cx="255" cy="343" rx="5" ry="4" fill="#524c4a" opacity="0.6"/><ellipse cx="314" cy="344" rx="7" ry="3" fill="#524c4a" opacity="0.6"/><ellipse cx="221" cy="374" rx="6" ry="5" fill="#625652" opacity="0.6"/><ellipse cx="235" cy="338" rx="6" ry="2" fill="#444c40" opacity="0.6"/><ellipse cx="387" cy="358" rx="5" ry="4" fill="#625652" opacity="0.6"/><ellipse cx="315" cy="344" rx="4" ry="4" fill="#505640" opacity="0.6"/><ellipse cx="254" cy="333" rx="6" ry="2" fill="#5a504c" opacity="0.6"/><ellipse cx="259" cy="354" rx="6" ry="5" fill="#5a504c" opacity="0.6"/><ellipse cx="145" cy="368" rx="4" ry="5" fill="#444c40" opacity="0.6"/><ellipse cx="260" cy="367" rx="7" ry="5" fill="#3a403c" opacity="0.6"/><ellipse cx="345" cy="363" rx="6" ry="5" fill="#3a403c" opacity="0.6"/><ellipse cx="203" cy="324" rx="5" ry="3" fill="#3a403c" opacity="0.6"/><ellipse cx="180" cy="373" rx="4" ry="4" fill="#5a504c" opacity="0.6"/><ellipse cx="271" cy="340" rx="6" ry="3" fill="#505640" opacity="0.6"/><ellipse cx="131" cy="374" rx="5" ry="4" fill="#505640" opacity="0.6"/><ellipse cx="190" cy="330" rx="4" ry="3" fill="#524c4a" opacity="0.6"/><ellipse cx="252" cy="358" rx="7" ry="2" fill="#3a403c" opacity="0.6"/><ellipse cx="376" cy="356" rx="4" ry="4" fill="#3a403c" opacity="0.6"/><ellipse cx="430" cy="345" rx="4" ry="2" fill="#5a504c" opacity="0.6"/><ellipse cx="336" cy="349" rx="5" ry="5" fill="#524c4a" opacity="0.6"/><ellipse cx="295" cy="371" rx="7" ry="4" fill="#5a504c" opacity="0.6"/><ellipse cx="204" cy="361" rx="8" ry="2" fill="#3a403c" opacity="0.6"/><ellipse cx="298" cy="368" rx="7" ry="4" fill="#5a504c" opacity="0.6"/><ellipse cx="210" cy="322" rx="5" ry="2" fill="#5a504c" opacity="0.6"/><ellipse cx="444" cy="348" rx="5" ry="4" fill="#505640" opacity="0.6"/><ellipse cx="169" cy="335" rx="8" ry="5" fill="#625652" opacity="0.6"/><ellipse cx="282" cy="334" rx="8" ry="2" fill="#625652" opacity="0.6"/><ellipse cx="262" cy="358" rx="6" ry="3" fill="#444c40" opacity="0.6"/><ellipse cx="336" cy="371" rx="8" ry="3" fill="#444c40" opacity="0.6"/><ellipse cx="344" cy="374" rx="9" ry="5" fill="#3a403c" opacity="0.6"/><ellipse cx="376" cy="354" rx="5" ry="4" fill="#5a504c" opacity="0.6"/><ellipse cx="275" cy="334" rx="5" ry="3" fill="#524c4a" opacity="0.6"/><ellipse cx="205" cy="340" rx="5" ry="3" fill="#3a403c" opacity="0.6"/><ellipse cx="402" cy="372" rx="7" ry="4" fill="#524c4a" opacity="0.6"/><ellipse cx="247" cy="345" rx="7" ry="4" fill="#505640" opacity="0.6"/><ellipse cx="183" cy="367" rx="4" ry="4" fill="#524c4a" opacity="0.6"/><ellipse cx="197" cy="342" rx="7" ry="3" fill="#3a403c" opacity="0.6"/><ellipse cx="151" cy="343" rx="8" ry="4" fill="#625652" opacity="0.6"/><ellipse cx="242" cy="354" rx="9" ry="3" fill="#625652" opacity="0.6"/><ellipse cx="148" cy="344" rx="6" ry="4" fill="#625652" opacity="0.6"/><ellipse cx="345" cy="372" rx="4" ry="4" fill="#5a504c" opacity="0.6"/><ellipse cx="187" cy="367" rx="5" ry="2" fill="#625652" opacity="0.6"/><ellipse cx="260" cy="341" rx="9" ry="4" fill="#505640" opacity="0.6"/><ellipse cx="362" cy="347" rx="6" ry="5" fill="#3a403c" opacity="0.6"/><ellipse cx="364" cy="363" rx="9" ry="3" fill="#505640" opacity="0.6"/><ellipse cx="426" cy="357" rx="7" ry="2" fill="#505640" opacity="0.6"/><ellipse cx="144" cy="349" rx="4" ry="2" fill="#625652" opacity="0.6"/><ellipse cx="146" cy="363" rx="5" ry="5" fill="#444c40" opacity="0.6"/><ellipse cx="309" cy="346" rx="9" ry="2" fill="#625652" opacity="0.6"/><ellipse cx="142" cy="362" rx="4" ry="4" fill="#625652" opacity="0.6"/><ellipse cx="174" cy="357" rx="5" ry="3" fill="#625652" opacity="0.6"/><ellipse cx="216" cy="314" rx="8" ry="5" fill="#625652" opacity="0.6"/><ellipse cx="388" cy="341" rx="8" ry="4" fill="#505640" opacity="0.6"/><ellipse cx="276" cy="356" rx="6" ry="2" fill="#444c40" opacity="0.6"/><ellipse cx="320" cy="351" rx="7" ry="3" fill="#524c4a" opacity="0.6"/><ellipse cx="276" cy="335" rx="8" ry="5" fill="#444c40" opacity="0.6"/><ellipse cx="295" cy="358" rx="9" ry="4" fill="#5a504c" opacity="0.6"/><ellipse cx="403" cy="370" rx="6" ry="2" fill="#5a504c" opacity="0.6"/><ellipse cx="394" cy="349" rx="7" ry="3" fill="#524c4a" opacity="0.6"/><ellipse cx="264" cy="324" rx="4" ry="5" fill="#625652" opacity="0.6"/><ellipse cx="218" cy="367" rx="5" ry="5" fill="#3a403c" opacity="0.6"/><ellipse cx="341" cy="370" rx="7" ry="4" fill="#5a504c" opacity="0.6"/><ellipse cx="382" cy="345" rx="7" ry="4" fill="#444c40" opacity="0.6"/><ellipse cx="285" cy="349" rx="7" ry="2" fill="#444c40" opacity="0.6"/><ellipse cx="285" cy="365" rx="7" ry="3" fill="#5a504c" opacity="0.6"/><ellipse cx="383" cy="360" rx="5" ry="2" fill="#3a403c" opacity="0.6"/><ellipse cx="213" cy="318" rx="6" ry="3" fill="#3a403c" opacity="0.6"/><ellipse cx="450" cy="375" rx="9" ry="2" fill="#5a504c" opacity="0.6"/><ellipse cx="259" cy="374" rx="8" ry="3" fill="#444c40" opacity="0.6"/><ellipse cx="196" cy="344" rx="5" ry="5" fill="#524c4a" opacity="0.6"/><ellipse cx="205" cy="373" rx="6" ry="2" fill="#444c40" opacity="0.6"/><ellipse cx="378" cy="367" rx="8" ry="4" fill="#505640" opacity="0.6"/><ellipse cx="347" cy="362" rx="8" ry="5" fill="#625652" opacity="0.6"/><ellipse cx="389" cy="350" rx="7" ry="4" fill="#5a504c" opacity="0.6"/><ellipse cx="282" cy="317" rx="8" ry="5" fill="#625652" opacity="0.6"/><ellipse cx="211" cy="324" rx="7" ry="3" fill="#625652" opacity="0.6"/><ellipse cx="272" cy="329" rx="8" ry="4" fill="#3a403c" opacity="0.6"/><ellipse cx="351" cy="364" rx="6" ry="2" fill="#625652" opacity="0.6"/><ellipse cx="409" cy="367" rx="4" ry="4" fill="#524c4a" opacity="0.6"/><ellipse cx="184" cy="356" rx="7" ry="2" fill="#5a504c" opacity="0.6"/><ellipse cx="344" cy="360" rx="6" ry="4" fill="#3a403c" opacity="0.6"/><ellipse cx="283" cy="374" rx="6" ry="4" fill="#5a504c" opacity="0.6"/><ellipse cx="171" cy="374" rx="7" ry="3" fill="#444c40" opacity="0.6"/><ellipse cx="155" cy="368" rx="7" ry="3" fill="#625652" opacity="0.6"/><ellipse cx="219" cy="309" rx="6" ry="5" fill="#625652" opacity="0.6"/><ellipse cx="455" cy="375" rx="6" ry="2" fill="#505640" opacity="0.6"/><ellipse cx="345" cy="351" rx="6" ry="4" fill="#5a504c" opacity="0.6"/><ellipse cx="404" cy="359" rx="9" ry="4" fill="#505640" opacity="0.6"/><ellipse cx="348" cy="356" rx="6" ry="5" fill="#505640" opacity="0.6"/><ellipse cx="220" cy="322" rx="9" ry="4" fill="#444c40" opacity="0.6"/><ellipse cx="291" cy="358" rx="6" ry="4" fill="#444c40" opacity="0.6"/><ellipse cx="237" cy="331" rx="7" ry="4" fill="#3a403c" opacity="0.6"/><ellipse cx="251" cy="369" rx="4" ry="4" fill="#505640" opacity="0.6"/><ellipse cx="433" cy="357" rx="7" ry="3" fill="#5a504c" opacity="0.6"/><ellipse cx="325" cy="346" rx="9" ry="4" fill="#5a504c" opacity="0.6"/><ellipse cx="181" cy="367" rx="5" ry="5" fill="#3a403c" opacity="0.6"/><ellipse cx="334" cy="356" rx="9" ry="4" fill="#625652" opacity="0.6"/><ellipse cx="156" cy="361" rx="8" ry="4" fill="#625652" opacity="0.6"/><ellipse cx="219" cy="310" rx="6" ry="4" fill="#5a504c" opacity="0.6"/><ellipse cx="292" cy="367" rx="6" ry="3" fill="#625652" opacity="0.6"/><ellipse cx="311" cy="363" rx="5" ry="3" fill="#524c4a" opacity="0.6"/><ellipse cx="229" cy="330" rx="6" ry="5" fill="#505640" opacity="0.6"/><ellipse cx="155" cy="344" rx="7" ry="2" fill="#625652" opacity="0.6"/><ellipse cx="145" cy="353" rx="8" ry="2" fill="#444c40" opacity="0.6"/><ellipse cx="292" cy="354" rx="4" ry="4" fill="#5a504c" opacity="0.6"/><ellipse cx="289" cy="335" rx="5" ry="3" fill="#5a504c" opacity="0.6"/></g>
<ellipse cx="318" cy="345" rx="25" ry="14" fill="#2c4a60" opacity="0.5" filter="url(#b6)"/>
<ellipse cx="50" cy="345" rx="90" ry="35" fill="#46627a" opacity="0.3" filter="url(#b12)"/>
<g filter="url(#b4)"><ellipse cx="42" cy="316" rx="10" ry="4" fill="#627280" opacity="0.4"/><ellipse cx="39" cy="329" rx="13" ry="4" fill="#4a5a68" opacity="0.4"/><ellipse cx="50" cy="313" rx="7" ry="5" fill="#3e4e5c" opacity="0.4"/><ellipse cx="6" cy="372" rx="13" ry="5" fill="#627280" opacity="0.4"/><ellipse cx="88" cy="289" rx="7" ry="2" fill="#3e4e5c" opacity="0.4"/><ellipse cx="138" cy="326" rx="7" ry="4" fill="#4c5a5a" opacity="0.4"/><ellipse cx="88" cy="318" rx="12" ry="4" fill="#4a5a68" opacity="0.4"/><ellipse cx="97" cy="344" rx="6" ry="4" fill="#4a5a68" opacity="0.4"/><ellipse cx="103" cy="300" rx="8" ry="2" fill="#4c5a5a" opacity="0.4"/><ellipse cx="129" cy="365" rx="6" ry="5" fill="#4c5a5a" opacity="0.4"/><ellipse cx="15" cy="312" rx="9" ry="3" fill="#4c5a5a" opacity="0.4"/><ellipse cx="66" cy="313" rx="12" ry="4" fill="#627280" opacity="0.4"/><ellipse cx="154" cy="328" rx="6" ry="2" fill="#364450" opacity="0.4"/><ellipse cx="136" cy="335" rx="10" ry="2" fill="#627280" opacity="0.4"/><ellipse cx="60" cy="337" rx="16" ry="3" fill="#4c5a5a" opacity="0.4"/><ellipse cx="64" cy="294" rx="11" ry="5" fill="#4c5a5a" opacity="0.4"/><ellipse cx="103" cy="322" rx="13" ry="2" fill="#5a6a78" opacity="0.4"/><ellipse cx="164" cy="293" rx="7" ry="2" fill="#5a6a78" opacity="0.4"/><ellipse cx="119" cy="306" rx="13" ry="5" fill="#4c5a5a" opacity="0.4"/><ellipse cx="56" cy="350" rx="15" ry="4" fill="#4c5a5a" opacity="0.4"/><ellipse cx="5" cy="340" rx="11" ry="4" fill="#4c5a5a" opacity="0.4"/><ellipse cx="150" cy="364" rx="13" ry="2" fill="#5a6a78" opacity="0.4"/><ellipse cx="-7" cy="342" rx="7" ry="3" fill="#364450" opacity="0.4"/><ellipse cx="121" cy="299" rx="12" ry="3" fill="#627280" opacity="0.4"/><ellipse cx="161" cy="348" rx="13" ry="2" fill="#627280" opacity="0.4"/><ellipse cx="134" cy="317" rx="8" ry="4" fill="#4c5a5a" opacity="0.4"/><ellipse cx="76" cy="353" rx="15" ry="4" fill="#627280" opacity="0.4"/><ellipse cx="92" cy="310" rx="12" ry="4" fill="#5a6a78" opacity="0.4"/><ellipse cx="134" cy="337" rx="13" ry="2" fill="#364450" opacity="0.4"/><ellipse cx="17" cy="357" rx="10" ry="5" fill="#364450" opacity="0.4"/><ellipse cx="58" cy="345" rx="14" ry="3" fill="#364450" opacity="0.4"/><ellipse cx="71" cy="345" rx="9" ry="3" fill="#3e4e5c" opacity="0.4"/><ellipse cx="96" cy="356" rx="9" ry="2" fill="#5a6a78" opacity="0.4"/><ellipse cx="150" cy="371" rx="9" ry="5" fill="#4a5a68" opacity="0.4"/><ellipse cx="135" cy="345" rx="9" ry="2" fill="#627280" opacity="0.4"/><ellipse cx="90" cy="354" rx="14" ry="4" fill="#4a5a68" opacity="0.4"/><ellipse cx="167" cy="312" rx="13" ry="3" fill="#5a6a78" opacity="0.4"/><ellipse cx="27" cy="307" rx="14" ry="3" fill="#5a6a78" opacity="0.4"/><ellipse cx="6" cy="355" rx="8" ry="4" fill="#5a6a78" opacity="0.4"/><ellipse cx="151" cy="362" rx="9" ry="4" fill="#364450" opacity="0.4"/><ellipse cx="26" cy="304" rx="8" ry="4" fill="#5a6a78" opacity="0.4"/><ellipse cx="55" cy="334" rx="14" ry="5" fill="#627280" opacity="0.4"/><ellipse cx="34" cy="365" rx="10" ry="2" fill="#627280" opacity="0.4"/><ellipse cx="104" cy="353" rx="9" ry="2" fill="#4a5a68" opacity="0.4"/><ellipse cx="40" cy="338" rx="6" ry="5" fill="#5a6a78" opacity="0.4"/><ellipse cx="146" cy="327" rx="8" ry="5" fill="#364450" opacity="0.4"/><ellipse cx="40" cy="293" rx="14" ry="4" fill="#627280" opacity="0.4"/><ellipse cx="163" cy="307" rx="9" ry="5" fill="#5a6a78" opacity="0.4"/><ellipse cx="58" cy="287" rx="12" ry="5" fill="#5a6a78" opacity="0.4"/><ellipse cx="72" cy="367" rx="15" ry="4" fill="#5a6a78" opacity="0.4"/><ellipse cx="156" cy="346" rx="9" ry="4" fill="#5a6a78" opacity="0.4"/><ellipse cx="105" cy="368" rx="11" ry="3" fill="#4c5a5a" opacity="0.4"/><ellipse cx="143" cy="317" rx="16" ry="3" fill="#4a5a68" opacity="0.4"/><ellipse cx="-3" cy="307" rx="7" ry="4" fill="#3e4e5c" opacity="0.4"/><ellipse cx="-5" cy="365" rx="14" ry="4" fill="#3e4e5c" opacity="0.4"/><ellipse cx="106" cy="371" rx="7" ry="3" fill="#5a6a78" opacity="0.4"/><ellipse cx="-9" cy="302" rx="9" ry="4" fill="#4c5a5a" opacity="0.4"/><ellipse cx="126" cy="294" rx="10" ry="3" fill="#3e4e5c" opacity="0.4"/><ellipse cx="57" cy="318" rx="8" ry="2" fill="#627280" opacity="0.4"/><ellipse cx="112" cy="286" rx="15" ry="4" fill="#4c5a5a" opacity="0.4"/><ellipse cx="18" cy="357" rx="15" ry="5" fill="#5a6a78" opacity="0.4"/><ellipse cx="150" cy="297" rx="16" ry="5" fill="#627280" opacity="0.4"/><ellipse cx="59" cy="287" rx="11" ry="3" fill="#5a6a78" opacity="0.4"/><ellipse cx="138" cy="327" rx="10" ry="3" fill="#4c5a5a" opacity="0.4"/><ellipse cx="122" cy="301" rx="12" ry="2" fill="#627280" opacity="0.4"/><ellipse cx="147" cy="308" rx="8" ry="2" fill="#627280" opacity="0.4"/><ellipse cx="93" cy="311" rx="9" ry="2" fill="#4a5a68" opacity="0.4"/><ellipse cx="72" cy="327" rx="16" ry="2" fill="#4a5a68" opacity="0.4"/><ellipse cx="151" cy="343" rx="12" ry="5" fill="#4a5a68" opacity="0.4"/><ellipse cx="11" cy="351" rx="10" ry="3" fill="#3e4e5c" opacity="0.4"/><ellipse cx="33" cy="306" rx="9" ry="5" fill="#627280" opacity="0.4"/><ellipse cx="0" cy="348" rx="7" ry="4" fill="#3e4e5c" opacity="0.4"/><ellipse cx="70" cy="329" rx="7" ry="2" fill="#364450" opacity="0.4"/><ellipse cx="140" cy="331" rx="10" ry="2" fill="#4a5a68" opacity="0.4"/><ellipse cx="64" cy="309" rx="7" ry="3" fill="#4a5a68" opacity="0.4"/><ellipse cx="129" cy="347" rx="12" ry="4" fill="#4a5a68" opacity="0.4"/><ellipse cx="150" cy="349" rx="8" ry="2" fill="#3e4e5c" opacity="0.4"/><ellipse cx="111" cy="340" rx="12" ry="3" fill="#4a5a68" opacity="0.4"/><ellipse cx="2" cy="349" rx="14" ry="5" fill="#627280" opacity="0.4"/><ellipse cx="83" cy="315" rx="14" ry="5" fill="#3e4e5c" opacity="0.4"/><ellipse cx="79" cy="286" rx="7" ry="4" fill="#627280" opacity="0.4"/><ellipse cx="35" cy="334" rx="6" ry="4" fill="#3e4e5c" opacity="0.4"/><ellipse cx="93" cy="360" rx="11" ry="3" fill="#3e4e5c" opacity="0.4"/><ellipse cx="83" cy="296" rx="8" ry="4" fill="#4c5a5a" opacity="0.4"/><ellipse cx="154" cy="353" rx="12" ry="5" fill="#627280" opacity="0.4"/><ellipse cx="42" cy="294" rx="11" ry="4" fill="#4c5a5a" opacity="0.4"/><ellipse cx="85" cy="332" rx="8" ry="2" fill="#5a6a78" opacity="0.4"/><ellipse cx="101" cy="300" rx="9" ry="4" fill="#3e4e5c" opacity="0.4"/><ellipse cx="-5" cy="293" rx="13" ry="3" fill="#4c5a5a" opacity="0.4"/><ellipse cx="141" cy="340" rx="11" ry="4" fill="#627280" opacity="0.4"/><ellipse cx="9" cy="361" rx="8" ry="3" fill="#4c5a5a" opacity="0.4"/><ellipse cx="74" cy="336" rx="7" ry="2" fill="#3e4e5c" opacity="0.4"/><ellipse cx="149" cy="332" rx="15" ry="2" fill="#4a5a68" opacity="0.4"/><ellipse cx="93" cy="350" rx="15" ry="2" fill="#4a5a68" opacity="0.4"/><ellipse cx="104" cy="345" rx="14" ry="4" fill="#364450" opacity="0.4"/><ellipse cx="61" cy="367" rx="9" ry="3" fill="#3e4e5c" opacity="0.4"/><ellipse cx="50" cy="323" rx="14" ry="5" fill="#364450" opacity="0.4"/><ellipse cx="137" cy="359" rx="9" ry="2" fill="#5a6a78" opacity="0.4"/><ellipse cx="112" cy="316" rx="13" ry="2" fill="#627280" opacity="0.4"/><ellipse cx="10" cy="301" rx="10" ry="4" fill="#3e4e5c" opacity="0.4"/><ellipse cx="-6" cy="297" rx="14" ry="5" fill="#627280" opacity="0.4"/><ellipse cx="104" cy="355" rx="6" ry="4" fill="#5a6a78" opacity="0.4"/><ellipse cx="38" cy="344" rx="12" ry="4" fill="#3e4e5c" opacity="0.4"/><ellipse cx="-4" cy="294" rx="11" ry="3" fill="#5a6a78" opacity="0.4"/><ellipse cx="161" cy="310" rx="9" ry="3" fill="#3e4e5c" opacity="0.4"/><ellipse cx="1" cy="368" rx="15" ry="2" fill="#364450" opacity="0.4"/><ellipse cx="96" cy="366" rx="7" ry="2" fill="#627280" opacity="0.4"/><ellipse cx="43" cy="320" rx="9" ry="4" fill="#3e4e5c" opacity="0.4"/><ellipse cx="123" cy="310" rx="12" ry="4" fill="#627280" opacity="0.4"/><ellipse cx="107" cy="303" rx="10" ry="5" fill="#4c5a5a" opacity="0.4"/><ellipse cx="45" cy="327" rx="6" ry="3" fill="#3e4e5c" opacity="0.4"/><ellipse cx="24" cy="332" rx="10" ry="5" fill="#364450" opacity="0.4"/><ellipse cx="19" cy="368" rx="12" ry="3" fill="#3e4e5c" opacity="0.4"/><ellipse cx="41" cy="371" rx="7" ry="2" fill="#3e4e5c" opacity="0.4"/><ellipse cx="89" cy="338" rx="10" ry="2" fill="#3e4e5c" opacity="0.4"/><ellipse cx="60" cy="323" rx="14" ry="4" fill="#4c5a5a" opacity="0.4"/><ellipse cx="168" cy="344" rx="10" ry="4" fill="#4a5a68" opacity="0.4"/><ellipse cx="15" cy="303" rx="14" ry="4" fill="#364450" opacity="0.4"/><ellipse cx="83" cy="349" rx="15" ry="5" fill="#4c5a5a" opacity="0.4"/><ellipse cx="38" cy="340" rx="15" ry="2" fill="#4c5a5a" opacity="0.4"/></g>
<g filter="url(#b2)"><ellipse cx="287" cy="225" rx="38" ry="1.7" fill="#90a8c0" opacity="0.2"/><ellipse cx="164" cy="297" rx="32" ry="1.5" fill="#90a8c0" opacity="0.2"/><ellipse cx="259" cy="290" rx="33" ry="1.5" fill="#90a8c0" opacity="0.2"/><ellipse cx="149" cy="259" rx="37" ry="1.4" fill="#90a8c0" opacity="0.2"/><ellipse cx="129" cy="267" rx="27" ry="1.4" fill="#90a8c0" opacity="0.2"/><ellipse cx="260" cy="289" rx="30" ry="1.5" fill="#90a8c0" opacity="0.2"/><ellipse cx="61" cy="248" rx="19" ry="1.7" fill="#90a8c0" opacity="0.2"/><ellipse cx="192" cy="232" rx="43" ry="1.4" fill="#90a8c0" opacity="0.2"/><ellipse cx="278" cy="288" rx="44" ry="1.2" fill="#90a8c0" opacity="0.2"/><ellipse cx="141" cy="293" rx="15" ry="1.1" fill="#90a8c0" opacity="0.2"/><ellipse cx="186" cy="262" rx="43" ry="1.9" fill="#90a8c0" opacity="0.2"/><ellipse cx="178" cy="300" rx="31" ry="1.6" fill="#90a8c0" opacity="0.2"/><ellipse cx="226" cy="254" rx="26" ry="1.7" fill="#90a8c0" opacity="0.2"/><ellipse cx="116" cy="296" rx="35" ry="1.6" fill="#90a8c0" opacity="0.2"/><ellipse cx="33" cy="253" rx="27" ry="1.7" fill="#90a8c0" opacity="0.2"/><ellipse cx="189" cy="291" rx="44" ry="1.6" fill="#90a8c0" opacity="0.2"/><ellipse cx="145" cy="272" rx="45" ry="1.4" fill="#90a8c0" opacity="0.2"/><ellipse cx="175" cy="286" rx="20" ry="1.4" fill="#90a8c0" opacity="0.2"/><ellipse cx="323" cy="287" rx="30" ry="1.1" fill="#90a8c0" opacity="0.2"/><ellipse cx="295" cy="277" rx="40" ry="2.2" fill="#90a8c0" opacity="0.2"/><ellipse cx="293" cy="257" rx="20" ry="1.3" fill="#90a8c0" opacity="0.2"/><ellipse cx="169" cy="263" rx="21" ry="1.2" fill="#90a8c0" opacity="0.2"/><ellipse cx="208" cy="270" rx="26" ry="2.2" fill="#90a8c0" opacity="0.2"/><ellipse cx="210" cy="228" rx="27" ry="1.9" fill="#90a8c0" opacity="0.2"/><ellipse cx="101" cy="277" rx="15" ry="1.4" fill="#90a8c0" opacity="0.2"/><ellipse cx="278" cy="269" rx="35" ry="1.2" fill="#90a8c0" opacity="0.2"/><ellipse cx="164" cy="266" rx="23" ry="1.8" fill="#90a8c0" opacity="0.2"/><ellipse cx="175" cy="300" rx="32" ry="1.5" fill="#90a8c0" opacity="0.2"/><ellipse cx="40" cy="237" rx="38" ry="1.1" fill="#90a8c0" opacity="0.2"/><ellipse cx="33" cy="238" rx="31" ry="2.0" fill="#90a8c0" opacity="0.2"/><ellipse cx="202" cy="285" rx="17" ry="1.0" fill="#90a8c0" opacity="0.2"/><ellipse cx="254" cy="249" rx="36" ry="1.4" fill="#90a8c0" opacity="0.2"/><ellipse cx="56" cy="245" rx="18" ry="2.1" fill="#90a8c0" opacity="0.2"/><ellipse cx="192" cy="251" rx="28" ry="1.5" fill="#90a8c0" opacity="0.2"/><ellipse cx="18" cy="292" rx="32" ry="2.2" fill="#90a8c0" opacity="0.2"/><ellipse cx="145" cy="272" rx="22" ry="1.1" fill="#90a8c0" opacity="0.2"/><ellipse cx="307" cy="289" rx="24" ry="2.1" fill="#90a8c0" opacity="0.2"/><ellipse cx="269" cy="248" rx="33" ry="2.2" fill="#90a8c0" opacity="0.2"/><ellipse cx="164" cy="296" rx="22" ry="1.5" fill="#90a8c0" opacity="0.2"/><ellipse cx="237" cy="242" rx="24" ry="2.1" fill="#90a8c0" opacity="0.2"/></g>
<g opacity="0.33" filter="url(#b1)"><path d="M293 355 q-2.7 -4.0 -5.4 -3.9" stroke="#8a7a68" stroke-width="1" fill="none"/><path d="M259 301 q-1.8 -7.3 -3.5 -10.6" stroke="#8a7a68" stroke-width="1" fill="none"/><path d="M173 337 q-1.1 -5.7 -2.3 -7.4" stroke="#9a8478" stroke-width="1" fill="none"/><path d="M434 339 q-0.5 -5.8 -0.9 -7.7" stroke="#8a7a68" stroke-width="1" fill="none"/><path d="M186 349 q-1.8 -4.2 -3.5 -4.4" stroke="#3a4440" stroke-width="1" fill="none"/><path d="M255 315 q1.3 -5.7 2.6 -7.4" stroke="#7a8458" stroke-width="1" fill="none"/><path d="M232 333 q2.7 -3.8 5.3 -3.6" stroke="#3a4440" stroke-width="1" fill="none"/><path d="M443 370 q-0.9 -6.5 -1.8 -9.0" stroke="#8a7a68" stroke-width="1" fill="none"/><path d="M310 328 q-3.8 -4.0 -7.6 -4.1" stroke="#9a8478" stroke-width="1" fill="none"/><path d="M414 352 q-5.0 -3.1 -10.1 -2.3" stroke="#3a4440" stroke-width="1" fill="none"/><path d="M237 327 q-2.3 -3.7 -4.5 -3.3" stroke="#7a8458" stroke-width="1" fill="none"/><path d="M240 346 q0.4 -4.9 0.8 -5.7" stroke="#8a7a68" stroke-width="1" fill="none"/><path d="M398 353 q1.7 -4.7 3.5 -5.3" stroke="#9a8478" stroke-width="1" fill="none"/><path d="M209 309 q-3.0 -6.0 -6.0 -8.0" stroke="#5a6a48" stroke-width="1" fill="none"/><path d="M340 344 q5.1 -4.0 10.3 -4.1" stroke="#3a4440" stroke-width="1" fill="none"/><path d="M145 348 q-2.1 -6.4 -4.2 -8.7" stroke="#5a6a48" stroke-width="1" fill="none"/><path d="M143 349 q4.0 -2.8 8.1 -1.6" stroke="#5a6a48" stroke-width="1" fill="none"/><path d="M250 344 q-2.8 -3.4 -5.6 -2.8" stroke="#7a8458" stroke-width="1" fill="none"/><path d="M200 321 q-3.7 -3.0 -7.4 -1.9" stroke="#4a4038" stroke-width="1" fill="none"/><path d="M341 366 q-3.2 -5.1 -6.4 -6.3" stroke="#6a5a58" stroke-width="1" fill="none"/><path d="M277 348 q-3.7 -2.5 -7.4 -1.1" stroke="#4a4038" stroke-width="1" fill="none"/><path d="M430 361 q2.3 -5.9 4.5 -7.9" stroke="#7a8458" stroke-width="1" fill="none"/><path d="M239 354 q3.4 -3.6 6.7 -3.2" stroke="#5a6a48" stroke-width="1" fill="none"/><path d="M379 358 q-3.2 -3.3 -6.4 -2.7" stroke="#5a6a48" stroke-width="1" fill="none"/><path d="M280 324 q2.0 -5.7 4.1 -7.5" stroke="#6a5a58" stroke-width="1" fill="none"/><path d="M301 347 q1.4 -4.9 2.8 -5.8" stroke="#3a4440" stroke-width="1" fill="none"/><path d="M295 313 q4.5 -5.7 9.0 -7.4" stroke="#4a4038" stroke-width="1" fill="none"/><path d="M192 311 q-3.6 -5.8 -7.3 -7.5" stroke="#4a4038" stroke-width="1" fill="none"/><path d="M217 304 q-1.0 -5.6 -2.0 -7.2" stroke="#7a8458" stroke-width="1" fill="none"/><path d="M359 334 q2.2 -5.6 4.4 -7.2" stroke="#8a7670" stroke-width="1" fill="none"/><path d="M304 331 q-2.5 -7.2 -5.0 -10.4" stroke="#4a4038" stroke-width="1" fill="none"/><path d="M179 350 q-3.1 -5.3 -6.2 -6.6" stroke="#9a8478" stroke-width="1" fill="none"/><path d="M314 353 q1.3 -4.8 2.6 -5.6" stroke="#6a5a58" stroke-width="1" fill="none"/><path d="M202 348 q-0.2 -4.5 -0.3 -5.1" stroke="#8a7670" stroke-width="1" fill="none"/><path d="M199 349 q-3.6 -3.8 -7.3 -3.6" stroke="#8a7a68" stroke-width="1" fill="none"/><path d="M281 340 q0.5 -5.5 0.9 -7.0" stroke="#8a7670" stroke-width="1" fill="none"/><path d="M139 369 q-4.8 -3.9 -9.5 -3.8" stroke="#8a7a68" stroke-width="1" fill="none"/><path d="M171 334 q-3.1 -4.5 -6.3 -5.0" stroke="#8a7a68" stroke-width="1" fill="none"/><path d="M138 364 q1.5 -6.5 3.1 -9.0" stroke="#4a4038" stroke-width="1" fill="none"/><path d="M264 310 q3.6 -3.1 7.2 -2.3" stroke="#3a4440" stroke-width="1" fill="none"/><path d="M168 350 q1.1 -5.4 2.1 -6.9" stroke="#5a6a48" stroke-width="1" fill="none"/><path d="M195 358 q-1.4 -5.3 -2.8 -6.7" stroke="#8a7a68" stroke-width="1" fill="none"/><path d="M398 364 q-1.8 -7.7 -3.5 -11.5" stroke="#8a7670" stroke-width="1" fill="none"/><path d="M444 335 q-3.5 -4.3 -7.1 -4.7" stroke="#4a4038" stroke-width="1" fill="none"/><path d="M332 344 q-2.1 -4.1 -4.3 -4.2" stroke="#3a4440" stroke-width="1" fill="none"/><path d="M280 368 q-2.7 -2.7 -5.4 -1.4" stroke="#6a5a58" stroke-width="1" fill="none"/><path d="M292 315 q-3.7 -2.9 -7.4 -1.7" stroke="#5a6a48" stroke-width="1" fill="none"/><path d="M153 350 q-5.3 -3.8 -10.7 -3.5" stroke="#8a7670" stroke-width="1" fill="none"/><path d="M353 358 q-4.7 -5.2 -9.3 -6.4" stroke="#4a4038" stroke-width="1" fill="none"/><path d="M136 356 q0.8 -6.8 1.5 -9.6" stroke="#6a5a58" stroke-width="1" fill="none"/><path d="M286 368 q4.8 -5.1 9.5 -6.2" stroke="#5a6a48" stroke-width="1" fill="none"/><path d="M450 343 q-5.1 -3.6 -10.2 -3.3" stroke="#8a7a68" stroke-width="1" fill="none"/><path d="M322 367 q1.6 -5.9 3.1 -7.8" stroke="#4a4038" stroke-width="1" fill="none"/><path d="M418 337 q3.8 -4.8 7.7 -5.5" stroke="#7a8458" stroke-width="1" fill="none"/><path d="M163 346 q0.7 -5.7 1.5 -7.5" stroke="#5a6a48" stroke-width="1" fill="none"/><path d="M253 317 q-2.6 -5.1 -5.2 -6.2" stroke="#7a8458" stroke-width="1" fill="none"/><path d="M194 362 q-4.0 -3.9 -7.9 -3.9" stroke="#4a4038" stroke-width="1" fill="none"/><path d="M354 350 q-0.5 -5.3 -1.0 -6.5" stroke="#9a8478" stroke-width="1" fill="none"/><path d="M376 364 q3.7 -4.6 7.3 -5.2" stroke="#9a8478" stroke-width="1" fill="none"/><path d="M300 336 q5.1 -3.8 10.2 -3.7" stroke="#9a8478" stroke-width="1" fill="none"/><path d="M285 348 q4.2 -3.3 8.4 -2.5" stroke="#7a8458" stroke-width="1" fill="none"/><path d="M319 354 q2.0 -4.2 4.0 -4.4" stroke="#8a7670" stroke-width="1" fill="none"/><path d="M267 303 q1.4 -4.3 2.7 -4.5" stroke="#7a8458" stroke-width="1" fill="none"/><path d="M285 308 q2.7 -3.3 5.3 -2.6" stroke="#9a8478" stroke-width="1" fill="none"/><path d="M338 361 q4.1 -3.9 8.1 -3.7" stroke="#8a7a68" stroke-width="1" fill="none"/><path d="M190 352 q2.4 -4.8 4.8 -5.6" stroke="#8a7670" stroke-width="1" fill="none"/><path d="M257 352 q3.2 -6.8 6.5 -9.7" stroke="#8a7670" stroke-width="1" fill="none"/><path d="M251 323 q-4.5 -3.1 -9.0 -2.2" stroke="#7a8458" stroke-width="1" fill="none"/><path d="M218 314 q3.2 -4.5 6.5 -4.9" stroke="#6a5a58" stroke-width="1" fill="none"/><path d="M171 356 q0.4 -5.1 0.8 -6.2" stroke="#4a4038" stroke-width="1" fill="none"/><path d="M421 347 q1.2 -7.3 2.3 -10.6" stroke="#4a4038" stroke-width="1" fill="none"/><path d="M311 348 q5.0 -3.8 10.0 -3.6" stroke="#8a7670" stroke-width="1" fill="none"/><path d="M143 370 q-0.3 -6.2 -0.6 -8.4" stroke="#8a7670" stroke-width="1" fill="none"/><path d="M195 357 q-1.6 -6.6 -3.2 -9.2" stroke="#6a5a58" stroke-width="1" fill="none"/><path d="M451 349 q-2.9 -4.9 -5.8 -5.7" stroke="#9a8478" stroke-width="1" fill="none"/><path d="M253 337 q-3.1 -3.7 -6.3 -3.5" stroke="#8a7670" stroke-width="1" fill="none"/><path d="M204 357 q-2.4 -6.4 -4.8 -8.8" stroke="#6a5a58" stroke-width="1" fill="none"/><path d="M262 325 q0.5 -4.5 1.0 -4.9" stroke="#8a7a68" stroke-width="1" fill="none"/><path d="M209 317 q1.5 -7.4 3.0 -10.7" stroke="#3a4440" stroke-width="1" fill="none"/><path d="M261 304 q-2.5 -7.4 -5.0 -10.9" stroke="#3a4440" stroke-width="1" fill="none"/><path d="M318 354 q3.7 -6.1 7.5 -8.2" stroke="#9a8478" stroke-width="1" fill="none"/><path d="M254 320 q4.5 -4.8 9.0 -5.6" stroke="#3a4440" stroke-width="1" fill="none"/><path d="M385 352 q1.5 -6.0 2.9 -8.0" stroke="#8a7a68" stroke-width="1" fill="none"/><path d="M420 350 q1.9 -5.1 3.8 -6.3" stroke="#8a7a68" stroke-width="1" fill="none"/><path d="M424 355 q3.7 -4.0 7.5 -4.1" stroke="#7a8458" stroke-width="1" fill="none"/><path d="M202 362 q-1.4 -6.6 -2.8 -9.3" stroke="#5a6a48" stroke-width="1" fill="none"/><path d="M234 322 q0.6 -7.0 1.2 -10.0" stroke="#8a7a68" stroke-width="1" fill="none"/><path d="M437 341 q-1.5 -5.2 -3.0 -6.5" stroke="#6a5a58" stroke-width="1" fill="none"/><path d="M252 354 q3.4 -4.2 6.7 -4.3" stroke="#9a8478" stroke-width="1" fill="none"/><path d="M192 363 q2.8 -5.4 5.6 -6.8" stroke="#4a4038" stroke-width="1" fill="none"/><path d="M151 331 q-3.3 -6.5 -6.7 -9.0" stroke="#9a8478" stroke-width="1" fill="none"/><path d="M199 351 q1.5 -7.7 2.9 -11.4" stroke="#9a8478" stroke-width="1" fill="none"/><path d="M159 357 q2.5 -5.8 5.0 -7.5" stroke="#8a7670" stroke-width="1" fill="none"/><path d="M197 338 q2.0 -7.2 3.9 -10.4" stroke="#8a7670" stroke-width="1" fill="none"/><path d="M204 323 q1.9 -6.7 3.9 -9.5" stroke="#5a6a48" stroke-width="1" fill="none"/><path d="M334 356 q2.6 -3.7 5.2 -3.4" stroke="#8a7670" stroke-width="1" fill="none"/><path d="M164 343 q5.1 -3.2 10.1 -2.4" stroke="#5a6a48" stroke-width="1" fill="none"/><path d="M219 332 q2.3 -3.0 4.7 -2.0" stroke="#8a7a68" stroke-width="1" fill="none"/><path d="M153 343 q-2.4 -6.4 -4.9 -8.8" stroke="#9a8478" stroke-width="1" fill="none"/><path d="M308 359 q-1.5 -5.4 -3.0 -6.9" stroke="#8a7a68" stroke-width="1" fill="none"/><path d="M311 341 q1.8 -6.1 3.6 -8.1" stroke="#8a7a68" stroke-width="1" fill="none"/><path d="M210 343 q-0.5 -7.3 -1.0 -10.6" stroke="#8a7670" stroke-width="1" fill="none"/><path d="M388 368 q-2.5 -5.3 -4.9 -6.5" stroke="#4a4038" stroke-width="1" fill="none"/><path d="M291 346 q-2.1 -6.8 -4.2 -9.5" stroke="#7a8458" stroke-width="1" fill="none"/><path d="M266 369 q1.8 -7.5 3.6 -11.0" stroke="#9a8478" stroke-width="1" fill="none"/><path d="M155 335 q-3.5 -4.7 -7.1 -5.4" stroke="#8a7a68" stroke-width="1" fill="none"/><path d="M376 363 q4.6 -5.2 9.1 -6.3" stroke="#3a4440" stroke-width="1" fill="none"/><path d="M308 325 q-1.0 -6.9 -1.9 -9.8" stroke="#6a5a58" stroke-width="1" fill="none"/><path d="M205 364 q-1.9 -7.3 -3.8 -10.7" stroke="#7a8458" stroke-width="1" fill="none"/><path d="M241 363 q1.7 -4.3 3.4 -4.7" stroke="#9a8478" stroke-width="1" fill="none"/><path d="M399 364 q-2.1 -6.4 -4.2 -8.8" stroke="#7a8458" stroke-width="1" fill="none"/><path d="M436 366 q-3.4 -5.3 -6.7 -6.5" stroke="#4a4038" stroke-width="1" fill="none"/><path d="M142 350 q-1.4 -5.0 -2.8 -6.1" stroke="#8a7a68" stroke-width="1" fill="none"/><path d="M383 345 q3.5 -2.8 6.9 -1.5" stroke="#7a8458" stroke-width="1" fill="none"/><path d="M291 365 q4.9 -3.7 9.8 -3.3" stroke="#3a4440" stroke-width="1" fill="none"/><path d="M243 334 q-4.7 -5.1 -9.3 -6.3" stroke="#6a5a58" stroke-width="1" fill="none"/><path d="M391 360 q-4.9 -3.4 -9.8 -2.7" stroke="#6a5a58" stroke-width="1" fill="none"/><path d="M195 360 q-3.4 -7.0 -6.7 -9.9" stroke="#8a7670" stroke-width="1" fill="none"/><path d="M234 335 q2.3 -4.9 4.7 -5.8" stroke="#6a5a58" stroke-width="1" fill="none"/><path d="M246 364 q4.3 -4.5 8.6 -5.1" stroke="#8a7670" stroke-width="1" fill="none"/><path d="M179 342 q2.3 -5.9 4.5 -7.8" stroke="#8a7670" stroke-width="1" fill="none"/><path d="M151 363 q-2.5 -3.2 -4.9 -2.4" stroke="#6a5a58" stroke-width="1" fill="none"/><path d="M312 344 q4.3 -3.0 8.6 -1.9" stroke="#8a7a68" stroke-width="1" fill="none"/><path d="M410 367 q2.7 -2.8 5.3 -1.5" stroke="#7a8458" stroke-width="1" fill="none"/><path d="M193 319 q-2.6 -2.7 -5.3 -1.4" stroke="#8a7670" stroke-width="1" fill="none"/><path d="M268 339 q-3.7 -2.6 -7.4 -1.3" stroke="#8a7670" stroke-width="1" fill="none"/><path d="M349 338 q2.1 -5.9 4.3 -7.7" stroke="#4a4038" stroke-width="1" fill="none"/><path d="M266 322 q3.8 -3.1 7.6 -2.2" stroke="#5a6a48" stroke-width="1" fill="none"/><path d="M384 362 q4.7 -4.5 9.4 -5.0" stroke="#8a7670" stroke-width="1" fill="none"/><path d="M213 335 q2.9 -7.2 5.9 -10.4" stroke="#5a6a48" stroke-width="1" fill="none"/><path d="M318 348 q1.7 -5.7 3.5 -7.3" stroke="#6a5a58" stroke-width="1" fill="none"/><path d="M379 360 q1.0 -6.2 1.9 -8.3" stroke="#5a6a48" stroke-width="1" fill="none"/><path d="M212 344 q-1.8 -6.8 -3.7 -9.5" stroke="#9a8478" stroke-width="1" fill="none"/><path d="M264 337 q2.1 -6.1 4.2 -8.3" stroke="#8a7a68" stroke-width="1" fill="none"/><path d="M159 356 q4.4 -3.9 8.8 -3.9" stroke="#4a4038" stroke-width="1" fill="none"/><path d="M221 359 q-2.4 -6.9 -4.8 -9.9" stroke="#6a5a58" stroke-width="1" fill="none"/><path d="M322 370 q1.7 -4.1 3.5 -4.2" stroke="#8a7a68" stroke-width="1" fill="none"/><path d="M306 337 q-3.7 -5.9 -7.4 -7.7" stroke="#3a4440" stroke-width="1" fill="none"/><path d="M185 346 q2.9 -3.1 5.9 -2.1" stroke="#8a7670" stroke-width="1" fill="none"/><path d="M240 325 q-1.3 -7.4 -2.5 -10.8" stroke="#5a6a48" stroke-width="1" fill="none"/><path d="M185 318 q-1.2 -4.6 -2.4 -5.2" stroke="#4a4038" stroke-width="1" fill="none"/><path d="M283 306 q3.8 -2.8 7.6 -1.6" stroke="#9a8478" stroke-width="1" fill="none"/><path d="M282 333 q3.4 -6.1 6.8 -8.1" stroke="#3a4440" stroke-width="1" fill="none"/><path d="M295 346 q0.2 -6.7 0.3 -9.4" stroke="#5a6a48" stroke-width="1" fill="none"/><path d="M218 339 q-1.6 -3.9 -3.2 -3.8" stroke="#3a4440" stroke-width="1" fill="none"/><path d="M235 338 q-3.7 -6.3 -7.5 -8.6" stroke="#4a4038" stroke-width="1" fill="none"/><path d="M343 360 q-0.8 -5.1 -1.6 -6.2" stroke="#4a4038" stroke-width="1" fill="none"/><path d="M255 350 q-1.0 -5.4 -2.0 -6.8" stroke="#4a4038" stroke-width="1" fill="none"/><path d="M250 327 q4.1 -3.8 8.3 -3.6" stroke="#7a8458" stroke-width="1" fill="none"/><path d="M455 360 q-4.3 -3.4 -8.6 -2.8" stroke="#7a8458" stroke-width="1" fill="none"/><path d="M243 305 q-1.8 -6.8 -3.7 -9.6" stroke="#5a6a48" stroke-width="1" fill="none"/><path d="M297 363 q-5.0 -3.1 -10.1 -2.2" stroke="#6a5a58" stroke-width="1" fill="none"/><path d="M441 349 q3.9 -2.9 7.9 -1.7" stroke="#3a4440" stroke-width="1" fill="none"/><path d="M296 336 q2.3 -6.9 4.7 -9.7" stroke="#7a8458" stroke-width="1" fill="none"/><path d="M266 303 q0.6 -6.8 1.2 -9.7" stroke="#5a6a48" stroke-width="1" fill="none"/><path d="M207 305 q-4.9 -4.2 -9.8 -4.4" stroke="#9a8478" stroke-width="1" fill="none"/><path d="M284 358 q-1.5 -4.8 -3.0 -5.6" stroke="#8a7670" stroke-width="1" fill="none"/><path d="M315 352 q-4.7 -4.8 -9.4 -5.6" stroke="#5a6a48" stroke-width="1" fill="none"/><path d="M402 361 q-1.4 -4.7 -2.8 -5.3" stroke="#8a7670" stroke-width="1" fill="none"/><path d="M196 338 q-4.0 -3.6 -8.0 -3.2" stroke="#5a6a48" stroke-width="1" fill="none"/><path d="M218 360 q0.0 -6.4 0.0 -8.9" stroke="#5a6a48" stroke-width="1" fill="none"/><path d="M216 327 q0.3 -6.0 0.7 -8.0" stroke="#4a4038" stroke-width="1" fill="none"/><path d="M287 334 q-1.8 -6.2 -3.6 -8.4" stroke="#8a7a68" stroke-width="1" fill="none"/><path d="M200 364 q-4.3 -3.2 -8.5 -2.5" stroke="#8a7a68" stroke-width="1" fill="none"/><path d="M446 358 q-1.9 -3.8 -3.8 -3.6" stroke="#6a5a58" stroke-width="1" fill="none"/><path d="M230 350 q1.2 -7.2 2.4 -10.3" stroke="#6a5a58" stroke-width="1" fill="none"/><path d="M268 351 q-2.4 -4.1 -4.9 -4.2" stroke="#3a4440" stroke-width="1" fill="none"/><path d="M277 345 q2.2 -3.5 4.5 -2.9" stroke="#9a8478" stroke-width="1" fill="none"/><path d="M401 335 q1.4 -4.1 2.8 -4.2" stroke="#3a4440" stroke-width="1" fill="none"/><path d="M298 347 q-2.8 -6.0 -5.5 -8.0" stroke="#7a8458" stroke-width="1" fill="none"/><path d="M389 350 q-0.5 -6.3 -1.1 -8.5" stroke="#7a8458" stroke-width="1" fill="none"/><path d="M391 367 q1.6 -5.6 3.2 -7.2" stroke="#4a4038" stroke-width="1" fill="none"/><path d="M274 361 q-5.0 -4.8 -10.0 -5.6" stroke="#3a4440" stroke-width="1" fill="none"/><path d="M211 341 q0.5 -5.6 1.0 -7.2" stroke="#3a4440" stroke-width="1" fill="none"/><path d="M236 318 q-3.3 -5.0 -6.5 -6.0" stroke="#7a8458" stroke-width="1" fill="none"/><path d="M263 302 q1.4 -5.6 2.7 -7.2" stroke="#7a8458" stroke-width="1" fill="none"/><path d="M349 349 q-2.7 -3.7 -5.4 -3.4" stroke="#3a4440" stroke-width="1" fill="none"/><path d="M276 348 q2.3 -3.8 4.5 -3.6" stroke="#9a8478" stroke-width="1" fill="none"/><path d="M350 337 q-0.2 -4.8 -0.3 -5.5" stroke="#8a7670" stroke-width="1" fill="none"/><path d="M380 335 q-5.3 -4.3 -10.6 -4.5" stroke="#6a5a58" stroke-width="1" fill="none"/><path d="M227 321 q2.9 -5.5 5.8 -7.0" stroke="#7a8458" stroke-width="1" fill="none"/><path d="M181 319 q4.5 -5.3 9.1 -6.7" stroke="#7a8458" stroke-width="1" fill="none"/><path d="M185 321 q-1.3 -4.8 -2.7 -5.6" stroke="#6a5a58" stroke-width="1" fill="none"/><path d="M216 352 q2.2 -4.2 4.4 -4.5" stroke="#4a4038" stroke-width="1" fill="none"/><path d="M400 351 q2.5 -5.2 5.0 -6.5" stroke="#9a8478" stroke-width="1" fill="none"/><path d="M393 342 q-4.0 -3.0 -8.0 -1.9" stroke="#9a8478" stroke-width="1" fill="none"/><path d="M270 349 q3.1 -4.4 6.3 -4.8" stroke="#9a8478" stroke-width="1" fill="none"/><path d="M258 346 q-2.5 -3.8 -5.0 -3.6" stroke="#9a8478" stroke-width="1" fill="none"/><path d="M243 359 q-0.5 -7.5 -0.9 -11.1" stroke="#3a4440" stroke-width="1" fill="none"/><path d="M220 307 q-2.8 -3.8 -5.6 -3.6" stroke="#4a4038" stroke-width="1" fill="none"/><path d="M288 311 q-0.0 -6.4 -0.1 -8.7" stroke="#8a7a68" stroke-width="1" fill="none"/><path d="M317 369 q3.2 -6.7 6.5 -9.3" stroke="#7a8458" stroke-width="1" fill="none"/><path d="M443 334 q0.9 -7.2 1.8 -10.4" stroke="#7a8458" stroke-width="1" fill="none"/><path d="M410 370 q1.2 -5.8 2.5 -7.6" stroke="#9a8478" stroke-width="1" fill="none"/><path d="M230 362 q0.5 -4.7 1.1 -5.5" stroke="#7a8458" stroke-width="1" fill="none"/><path d="M215 354 q3.3 -4.8 6.5 -5.6" stroke="#7a8458" stroke-width="1" fill="none"/><path d="M234 306 q1.2 -7.0 2.3 -10.0" stroke="#3a4440" stroke-width="1" fill="none"/><path d="M139 366 q-1.1 -5.8 -2.2 -7.6" stroke="#9a8478" stroke-width="1" fill="none"/><path d="M396 354 q2.9 -3.3 5.9 -2.6" stroke="#8a7a68" stroke-width="1" fill="none"/><path d="M136 362 q0.1 -4.6 0.2 -5.3" stroke="#8a7a68" stroke-width="1" fill="none"/><path d="M432 353 q-3.6 -5.0 -7.2 -6.1" stroke="#8a7670" stroke-width="1" fill="none"/><path d="M412 355 q1.5 -4.4 3.1 -4.7" stroke="#8a7a68" stroke-width="1" fill="none"/><path d="M326 356 q2.8 -5.1 5.7 -6.3" stroke="#6a5a58" stroke-width="1" fill="none"/><path d="M179 358 q5.2 -4.6 10.3 -5.2" stroke="#6a5a58" stroke-width="1" fill="none"/><path d="M407 356 q-1.0 -6.5 -1.9 -8.9" stroke="#4a4038" stroke-width="1" fill="none"/><path d="M380 342 q1.6 -6.5 3.2 -9.0" stroke="#9a8478" stroke-width="1" fill="none"/><path d="M452 355 q2.7 -4.1 5.4 -4.1" stroke="#7a8458" stroke-width="1" fill="none"/><path d="M214 341 q3.8 -4.3 7.6 -4.6" stroke="#8a7670" stroke-width="1" fill="none"/><path d="M263 355 q2.5 -6.7 4.9 -9.3" stroke="#8a7a68" stroke-width="1" fill="none"/><path d="M163 346 q-2.5 -6.8 -5.0 -9.6" stroke="#5a6a48" stroke-width="1" fill="none"/><path d="M171 357 q1.0 -5.8 2.1 -7.7" stroke="#6a5a58" stroke-width="1" fill="none"/><path d="M183 338 q-0.9 -4.6 -1.8 -5.3" stroke="#6a5a58" stroke-width="1" fill="none"/><path d="M351 356 q1.4 -4.6 2.7 -5.2" stroke="#8a7670" stroke-width="1" fill="none"/><path d="M258 363 q-1.8 -5.4 -3.7 -6.8" stroke="#3a4440" stroke-width="1" fill="none"/><path d="M253 316 q1.5 -7.4 3.1 -10.8" stroke="#5a6a48" stroke-width="1" fill="none"/><path d="M236 322 q3.9 -5.9 7.9 -7.9" stroke="#7a8458" stroke-width="1" fill="none"/><path d="M415 368 q-3.8 -2.6 -7.6 -1.3" stroke="#3a4440" stroke-width="1" fill="none"/><path d="M320 346 q2.3 -6.5 4.5 -9.1" stroke="#5a6a48" stroke-width="1" fill="none"/><path d="M179 353 q-0.9 -5.3 -1.8 -6.5" stroke="#8a7a68" stroke-width="1" fill="none"/><path d="M280 367 q1.5 -5.4 3.1 -6.9" stroke="#5a6a48" stroke-width="1" fill="none"/><path d="M442 357 q1.1 -4.5 2.1 -5.0" stroke="#6a5a58" stroke-width="1" fill="none"/><path d="M254 368 q2.1 -3.7 4.3 -3.3" stroke="#9a8478" stroke-width="1" fill="none"/><path d="M381 362 q3.1 -6.0 6.3 -7.9" stroke="#8a7670" stroke-width="1" fill="none"/><path d="M137 366 q-2.7 -4.1 -5.4 -4.3" stroke="#8a7670" stroke-width="1" fill="none"/><path d="M328 369 q-3.2 -5.4 -6.4 -6.9" stroke="#8a7670" stroke-width="1" fill="none"/><path d="M273 368 q3.5 -5.2 7.0 -6.5" stroke="#5a6a48" stroke-width="1" fill="none"/><path d="M296 368 q3.3 -3.7 6.7 -3.4" stroke="#8a7a68" stroke-width="1" fill="none"/><path d="M188 340 q3.8 -5.8 7.7 -7.6" stroke="#8a7a68" stroke-width="1" fill="none"/><path d="M236 336 q4.4 -4.2 8.8 -4.3" stroke="#4a4038" stroke-width="1" fill="none"/><path d="M453 354 q1.8 -5.3 3.7 -6.6" stroke="#4a4038" stroke-width="1" fill="none"/><path d="M236 366 q-1.6 -4.8 -3.2 -5.5" stroke="#6a5a58" stroke-width="1" fill="none"/><path d="M267 348 q-1.9 -5.2 -3.8 -6.5" stroke="#6a5a58" stroke-width="1" fill="none"/><path d="M222 314 q-1.0 -7.6 -1.9 -11.2" stroke="#5a6a48" stroke-width="1" fill="none"/><path d="M343 355 q-3.0 -3.9 -6.1 -3.9" stroke="#6a5a58" stroke-width="1" fill="none"/><path d="M351 359 q-3.7 -3.4 -7.4 -2.7" stroke="#5a6a48" stroke-width="1" fill="none"/><path d="M254 364 q-2.5 -5.5 -5.1 -7.1" stroke="#9a8478" stroke-width="1" fill="none"/><path d="M220 354 q2.0 -3.7 4.1 -3.3" stroke="#4a4038" stroke-width="1" fill="none"/><path d="M251 366 q-2.3 -4.5 -4.7 -5.0" stroke="#9a8478" stroke-width="1" fill="none"/><path d="M332 358 q2.9 -6.6 5.8 -9.2" stroke="#4a4038" stroke-width="1" fill="none"/><path d="M189 312 q3.0 -6.0 6.1 -8.0" stroke="#9a8478" stroke-width="1" fill="none"/><path d="M442 352 q-1.2 -5.5 -2.4 -7.0" stroke="#8a7a68" stroke-width="1" fill="none"/><path d="M249 313 q0.3 -7.5 0.7 -11.1" stroke="#5a6a48" stroke-width="1" fill="none"/><path d="M354 363 q-1.4 -4.6 -2.7 -5.3" stroke="#9a8478" stroke-width="1" fill="none"/><path d="M212 330 q1.9 -4.7 3.7 -5.3" stroke="#3a4440" stroke-width="1" fill="none"/><path d="M184 347 q-0.1 -7.1 -0.3 -10.3" stroke="#4a4038" stroke-width="1" fill="none"/><path d="M429 352 q2.0 -7.0 4.1 -9.9" stroke="#4a4038" stroke-width="1" fill="none"/><path d="M178 349 q1.4 -6.8 2.8 -9.5" stroke="#4a4038" stroke-width="1" fill="none"/><path d="M368 354 q-0.0 -6.6 -0.0 -9.2" stroke="#7a8458" stroke-width="1" fill="none"/><path d="M253 340 q-5.2 -4.0 -10.5 -4.0" stroke="#8a7670" stroke-width="1" fill="none"/><path d="M180 319 q-0.5 -4.7 -1.0 -5.3" stroke="#8a7670" stroke-width="1" fill="none"/><path d="M148 358 q-2.1 -4.0 -4.1 -4.0" stroke="#8a7a68" stroke-width="1" fill="none"/><path d="M210 339 q-3.2 -6.3 -6.4 -8.6" stroke="#8a7670" stroke-width="1" fill="none"/><path d="M208 312 q-3.4 -6.2 -6.7 -8.3" stroke="#8a7a68" stroke-width="1" fill="none"/><path d="M156 344 q1.0 -6.9 2.1 -9.9" stroke="#5a6a48" stroke-width="1" fill="none"/><path d="M263 367 q1.7 -5.6 3.3 -7.1" stroke="#8a7670" stroke-width="1" fill="none"/><path d="M398 367 q3.5 -2.9 7.1 -1.7" stroke="#9a8478" stroke-width="1" fill="none"/><path d="M345 340 q3.8 -3.1 7.7 -2.3" stroke="#6a5a58" stroke-width="1" fill="none"/><path d="M197 343 q-2.4 -3.6 -4.8 -3.3" stroke="#7a8458" stroke-width="1" fill="none"/><path d="M160 363 q1.7 -3.9 3.5 -3.8" stroke="#7a8458" stroke-width="1" fill="none"/><path d="M382 359 q2.5 -4.5 4.9 -5.1" stroke="#8a7670" stroke-width="1" fill="none"/><path d="M436 351 q-4.8 -3.6 -9.5 -3.1" stroke="#7a8458" stroke-width="1" fill="none"/><path d="M272 358 q2.9 -5.7 5.8 -7.5" stroke="#4a4038" stroke-width="1" fill="none"/><path d="M317 344 q-2.3 -5.8 -4.6 -7.7" stroke="#8a7a68" stroke-width="1" fill="none"/><path d="M235 303 q-1.3 -4.8 -2.6 -5.6" stroke="#8a7670" stroke-width="1" fill="none"/><path d="M185 354 q4.0 -2.9 8.1 -1.9" stroke="#8a7a68" stroke-width="1" fill="none"/><path d="M395 333 q-4.7 -4.6 -9.4 -5.2" stroke="#9a8478" stroke-width="1" fill="none"/><path d="M262 325 q4.5 -3.8 8.9 -3.5" stroke="#7a8458" stroke-width="1" fill="none"/><path d="M367 366 q-1.2 -7.8 -2.4 -11.6" stroke="#5a6a48" stroke-width="1" fill="none"/></g>
<g filter="url(#b4)"><path d="M-30,11.0 L-12,13.9 L6,13.8 L24,14.8 L42,16.7 L60,16.4 L78,16.8 L96,15.5 L114,14.0 L132,11.8 L150,13.6 L168,15.0 L186,16.6 L204,17.6 L222,19.9 L240,20.4 L258,21.3 L276,20.1 L294,19.9 L312,18.3 L330,19.6 L348,22.8 L366,25.8 L384,28.1 L402,31.0 L420,33.8 L438,33.4 L456,35.2 L474,34.0 L492,35.4 L510,39.5 L528,41.8 L546,47.3 L564,52.0 L582,56.7 L600,59.7 L618,63.0 L636,65.4 L654,68.0 L672,71.1 L690,76.1" stroke="#3f78b8" stroke-width="2.5" fill="none" opacity="0.15" stroke-dasharray="48 10 29 18 62 10 55 23 54 30 51 7 46 22 24 11"/><path d="M-30,26.3 L-12,28.0 L6,28.0 L24,28.0 L42,26.7 L60,27.2 L78,25.1 L96,24.5 L114,24.3 L132,25.9 L150,28.5 L168,29.7 L186,30.4 L204,32.1 L222,30.5 L240,31.3 L258,30.7 L276,29.8 L294,31.6 L312,33.3 L330,35.9 L348,37.5 L366,41.0 L384,42.6 L402,42.9 L420,42.5 L438,42.2 L456,45.5 L474,47.0 L492,50.3 L510,53.3 L528,59.4 L546,61.6 L564,64.9 L582,67.2 L600,70.8 L618,71.0 L636,75.9 L654,79.5 L672,84.8 L690,90.9" stroke="#3f78b8" stroke-width="2.6" fill="none" opacity="0.14" stroke-dasharray="57 9 23 7 40 7 56 18 24 7 48 23 52 18 64 28"/><path d="M-30,42.2 L-12,40.4 L6,38.7 L24,37.5 L42,37.0 L60,36.6 L78,37.0 L96,38.9 L114,40.6 L132,41.3 L150,43.3 L168,43.2 L186,42.2 L204,41.4 L222,41.7 L240,41.7 L258,41.5 L276,42.6 L294,45.3 L312,47.9 L330,50.1 L348,50.7 L366,51.2 L384,50.5 L402,51.9 L420,52.8 L438,54.3 L456,58.3 L474,63.0 L492,66.6 L510,68.7 L528,70.5 L546,73.4 L564,74.1 L582,77.2 L600,79.8 L618,83.2 L636,87.5 L654,94.1 L672,99.9 L690,106.6" stroke="#3f78b8" stroke-width="2.7" fill="none" opacity="0.14" stroke-dasharray="59 8 60 21 25 12 59 7 55 17 33 18 51 25 65 21"/><path d="M-30,52.1 L-12,50.3 L6,48.9 L24,49.3 L42,49.3 L60,51.0 L78,53.9 L96,55.5 L114,54.2 L132,54.5 L150,54.6 L168,52.1 L186,51.8 L204,51.0 L222,53.7 L240,55.4 L258,56.4 L276,59.3 L294,60.0 L312,60.5 L330,61.9 L348,62.2 L366,61.6 L384,61.0 L402,63.7 L420,67.5 L438,71.2 L456,74.5 L474,75.5 L492,79.3 L510,79.5 L528,80.6 L546,82.0 L564,85.1 L582,88.4 L600,93.8 L618,99.1 L636,104.2 L654,108.9 L672,113.3 L690,117.1" stroke="#3f78b8" stroke-width="2.9" fill="none" opacity="0.13" stroke-dasharray="54 14 46 19 42 20 33 15 63 29 52 15 68 11 61 23"/><path d="M-30,60.6 L-12,61.3 L6,62.5 L24,64.2 L42,64.1 L60,67.5 L78,67.4 L96,66.6 L114,65.9 L132,63.4 L150,64.3 L168,64.3 L186,63.4 L204,65.5 L222,67.5 L240,69.4 L258,72.4 L276,72.5 L294,70.9 L312,69.9 L330,69.9 L348,70.6 L366,72.5 L384,75.8 L402,78.0 L420,81.8 L438,84.2 L456,87.1 L474,88.5 L492,88.1 L510,90.8 L528,91.2 L546,94.4 L564,98.1 L582,102.9 L600,110.1 L618,112.5 L636,118.1 L654,119.9 L672,123.3 L690,125.6" stroke="#3f78b8" stroke-width="3.0" fill="none" opacity="0.12" stroke-dasharray="50 30 60 24 62 16 35 5 36 7 44 7 28 25 43 17"/><path d="M-30,73.4 L-12,76.7 L6,77.6 L24,78.7 L42,80.1 L60,79.9 L78,77.5 L96,76.9 L114,75.5 L132,76.0 L150,76.7 L168,77.4 L186,78.7 L204,82.2 L222,81.5 L240,83.7 L258,81.3 L276,82.3 L294,82.2 L312,81.8 L330,82.2 L348,86.1 L366,87.5 L384,91.7 L402,94.4 L420,95.3 L438,95.3 L456,96.3 L474,96.3 L492,99.4 L510,102.4 L528,106.3 L546,109.1 L564,115.6 L582,119.1 L600,122.0 L618,125.0 L636,126.6 L654,130.6 L672,133.8 L690,138.2" stroke="#3f78b8" stroke-width="3.1" fill="none" opacity="0.12" stroke-dasharray="32 15 60 23 38 27 43 19 25 29 67 23 39 11 29 25"/><path d="M-30,90.5 L-12,91.6 L6,90.4 L24,91.9 L42,89.0 L60,88.0 L78,88.1 L96,88.2 L114,89.3 L132,90.7 L150,91.7 L168,94.2 L186,94.7 L204,94.7 L222,94.3 L240,93.3 L258,91.7 L276,92.1 L294,94.3 L312,96.8 L330,99.2 L348,100.7 L366,101.9 L384,103.0 L402,105.3 L420,105.6 L438,104.1 L456,106.5 L474,109.7 L492,113.0 L510,116.1 L528,122.1 L546,125.0 L564,127.0 L582,129.6 L600,131.4 L618,134.4 L636,138.4 L654,142.1 L672,147.0 L690,153.2" stroke="#3f78b8" stroke-width="3.2" fill="none" opacity="0.11" stroke-dasharray="62 23 38 28 50 30 65 7 42 5 68 11 30 19 66 21"/><path d="M-30,104.0 L-12,102.5 L6,101.2 L24,100.8 L42,98.5 L60,100.2 L78,101.1 L96,102.9 L114,102.9 L132,105.7 L150,105.7 L168,104.7 L186,105.2 L204,102.8 L222,102.1 L240,104.1 L258,105.7 L276,107.2 L294,108.2 L312,111.2 L330,113.0 L348,112.8 L366,114.4 L384,113.4 L402,114.0 L420,115.3 L438,116.5 L456,121.9 L474,125.7 L492,129.4 L510,131.7 L528,133.6 L546,135.1 L564,136.4 L582,138.5 L600,142.3 L618,146.1 L636,152.0 L654,158.4 L672,162.2 L690,169.0" stroke="#3f78b8" stroke-width="3.3" fill="none" opacity="0.11" stroke-dasharray="38 16 36 21 42 9 49 8 35 15 62 24 50 17 34 18"/><path d="M-30,114.8 L-12,111.4 L6,112.4 L24,110.7 L42,113.4 L60,114.5 L78,114.7 L96,118.0 L114,117.0 L132,117.0 L150,117.1 L168,114.6 L186,113.2 L204,113.8 L222,116.3 L240,116.9 L258,119.5 L276,121.2 L294,123.0 L312,122.6 L330,124.5 L348,124.0 L366,122.3 L384,123.6 L402,126.8 L420,130.8 L438,133.8 L456,135.6 L474,139.9 L492,139.8 L510,142.2 L528,144.0 L546,145.0 L564,148.2 L582,152.1 L600,155.6 L618,160.8 L636,166.4 L654,170.6 L672,174.8 L690,177.9" stroke="#3f78b8" stroke-width="3.5" fill="none" opacity="0.10" stroke-dasharray="36 22 28 17 25 10 38 29 30 8 63 13 40 16 44 6"/><path d="M-30,125.0 L-12,124.9 L6,126.2 L24,126.6 L42,129.0 L60,128.2 L78,129.4 L96,127.9 L114,127.6 L132,126.1 L150,125.9 L168,126.6 L186,126.1 L204,129.4 L222,130.4 L240,132.6 L258,134.8 L276,134.2 L294,133.4 L312,134.0 L330,133.8 L348,133.1 L366,136.0 L384,138.6 L402,141.0 L420,145.8 L438,146.7 L456,147.6 L474,149.0 L492,151.2 L510,151.2 L528,154.3 L546,157.8 L564,162.2 L582,167.7 L600,172.2 L618,176.3 L636,178.9 L654,182.7 L672,184.8 L690,189.1" stroke="#3f78b8" stroke-width="3.6" fill="none" opacity="0.09" stroke-dasharray="55 29 22 26 61 12 50 27 57 28 38 26 63 11 45 16"/><path d="M-30,136.4 L-12,138.7 L6,139.6 L24,142.7 L42,141.7 L60,140.4 L78,139.3 L96,138.6 L114,136.9 L132,138.6 L150,138.7 L168,140.8 L186,143.9 L204,144.2 L222,144.6 L240,145.5 L258,145.2 L276,143.9 L294,143.3 L312,145.2 L330,145.4 L348,149.8 L366,152.0 L384,153.4 L402,155.3 L420,156.4 L438,157.2 L456,158.7 L474,159.9 L492,161.7 L510,164.5 L528,168.1 L546,172.2 L564,177.5 L582,181.6 L600,184.7 L618,185.9 L636,188.1 L654,191.5 L672,195.0 L690,200.4" stroke="#3f78b8" stroke-width="3.7" fill="none" opacity="0.09" stroke-dasharray="49 22 33 29 24 12 65 22 46 14 56 18 29 19 69 28"/><path d="M-30,154.1 L-12,153.2 L6,152.8 L24,154.1 L42,151.0 L60,149.8 L78,150.4 L96,150.6 L114,150.7 L132,151.8 L150,155.2 L168,154.9 L186,157.0 L204,155.9 L222,155.6 L240,153.5 L258,153.9 L276,155.8 L294,155.6 L312,159.0 L330,162.6 L348,164.1 L366,165.4 L384,167.3 L402,166.9 L420,167.2 L438,168.2 L456,170.1 L474,171.8 L492,175.0 L510,179.1 L528,184.0 L546,187.8 L564,188.9 L582,191.4 L600,193.0 L618,195.6 L636,199.3 L654,204.6 L672,209.8 L690,216.5" stroke="#3f78b8" stroke-width="3.8" fill="none" opacity="0.08" stroke-dasharray="55 22 25 15 47 12 38 11 53 13 22 15 62 7 24 6"/><path d="M-30,167.1 L-12,165.8 L6,164.6 L24,162.6 L42,161.4 L60,161.4 L78,163.8 L96,164.1 L114,166.3 L132,167.9 L150,169.2 L168,167.7 L186,166.8 L204,164.6 L222,164.0 L240,165.6 L258,167.7 L276,168.6 L294,171.6 L312,173.1 L330,175.5 L348,175.5 L366,175.2 L384,175.5 L402,176.7 L420,178.8 L438,180.7 L456,184.2 L474,187.3 L492,192.0 L510,192.9 L528,195.4 L546,197.1 L564,199.6 L582,202.0 L600,205.6 L618,209.7 L636,214.4 L654,219.2 L672,225.4 L690,231.0" stroke="#3f78b8" stroke-width="3.9" fill="none" opacity="0.07" stroke-dasharray="61 30 42 23 33 14 21 19 37 15 42 20 64 27 35 25"/><path d="M-30,175.9 L-12,175.5 L6,173.1 L24,174.3 L42,175.0 L60,177.1 L78,180.0 L96,180.8 L114,178.7 L132,178.5 L150,177.6 L168,176.7 L186,176.9 L204,176.9 L222,178.3 L240,180.2 L258,183.3 L276,184.7 L294,185.6 L312,185.1 L330,185.2 L348,185.6 L366,185.5 L384,185.9 L402,189.9 L420,192.6 L438,196.4 L456,198.4 L474,201.7 L492,203.0 L510,205.3 L528,204.7 L546,208.5 L564,211.6 L582,215.1 L600,220.0 L618,225.7 L636,230.6 L654,233.6 L672,238.6 L690,241.5" stroke="#3f78b8" stroke-width="4.1" fill="none" opacity="0.07" stroke-dasharray="23 28 29 5 41 16 66 14 38 23 25 18 26 12 47 11"/><path d="M-30,187.0 L-12,187.8 L6,188.8 L24,190.0 L42,191.7 L60,191.5 L78,191.0 L96,191.8 L114,189.7 L132,188.7 L150,187.4 L168,187.7 L186,191.3 L204,191.2 L222,194.5 L240,195.8 L258,196.7 L276,196.1 L294,194.6 L312,195.8 L330,194.4 L348,197.7 L366,200.1 L384,200.8 L402,205.3 L420,207.1 L438,208.6 L456,211.6 L474,211.5 L492,211.9 L510,213.4 L528,216.4 L546,221.0 L564,225.5 L582,229.1 L600,234.2 L618,239.4 L636,240.4 L654,244.8 L672,246.2 L690,251.4" stroke="#3f78b8" stroke-width="4.2" fill="none" opacity="0.06" stroke-dasharray="54 13 57 7 30 29 50 29 48 5 23 12 35 29 53 17"/><path d="M-30,199.6 L-12,202.4 L6,202.5 L24,205.3 L42,203.8 L60,202.9 L78,202.4 L96,201.0 L114,199.9 L132,201.5 L150,201.2 L168,203.1 L186,206.7 L204,206.5 L222,207.6 L240,206.7 L258,205.6 L276,204.6 L294,206.2 L312,207.7 L330,208.2 L348,212.0 L366,213.8 L384,217.2 L402,218.3 L420,218.2 L438,220.8 L456,221.2 L474,221.5 L492,225.0 L510,227.9 L528,230.8 L546,236.0 L564,241.1 L582,244.7 L600,246.5 L618,248.8 L636,252.1 L654,253.5 L672,258.2 L690,263.1" stroke="#3f78b8" stroke-width="4.3" fill="none" opacity="0.06" stroke-dasharray="60 30 28 13 33 25 60 6 49 27 30 10 33 26 33 10"/><path d="M-30,215.5 L-12,216.9 L6,216.2 L24,214.4 L42,212.6 L60,211.5 L78,211.1 L96,211.6 L114,213.6 L132,216.6 L150,218.0 L168,217.7 L186,217.7 L204,218.4 L222,218.3 L240,215.9 L258,217.1 L276,218.5 L294,220.0 L312,222.3 L330,224.9 L348,227.1 L366,228.6 L384,227.2 L402,228.2 L420,228.6 L438,229.7 L456,231.1 L474,236.3 L492,238.8 L510,242.4 L528,246.6 L546,250.1 L564,251.4 L582,253.6 L600,255.8 L618,259.4 L636,262.7 L654,268.0 L672,272.9 L690,280.6" stroke="#3f78b8" stroke-width="4.4" fill="none" opacity="0.05" stroke-dasharray="28 15 50 14 50 9 27 12 62 8 21 7 51 22 59 28"/><path d="M-30,228.5 L-12,226.5 L6,225.6 L24,224.6 L42,225.4 L60,225.8 L78,227.0 L96,227.1 L114,229.6 L132,229.4 L150,231.0 L168,228.3 L186,227.8 L204,228.1 L222,227.2 L240,229.0 L258,231.4 L276,232.5 L294,234.2 L312,237.0 L330,237.0 L348,238.4 L366,236.8 L384,238.0 L402,238.6 L420,240.4 L438,244.5 L456,248.2 L474,250.5 L492,254.3 L510,255.6 L528,258.4 L546,259.6 L564,262.4 L582,263.2 L600,267.8 L618,271.9 L636,277.3 L654,282.9 L672,287.5 L690,293.0" stroke="#3f78b8" stroke-width="4.5" fill="none" opacity="0.04" stroke-dasharray="37 19 22 7 54 7 48 9 38 25 65 16 37 20 69 27"/><path d="M-30,237.1 L-12,236.3 L6,237.0 L24,236.1 L42,238.6 L60,240.3 L78,240.6 L96,241.7 L114,242.7 L132,242.2 L150,239.3 L168,238.5 L186,238.8 L204,239.9 L222,241.5 L240,243.7 L258,246.0 L276,248.2 L294,248.2 L312,246.9 L330,246.3 L348,247.8 L366,248.4 L384,250.2 L402,251.8 L420,255.1 L438,259.4 L456,261.0 L474,263.4 L492,265.6 L510,266.1 L528,266.5 L546,270.6 L564,273.8 L582,276.4 L600,282.3 L618,286.6 L636,291.2 L654,297.3 L672,300.4 L690,303.0" stroke="#3f78b8" stroke-width="4.7" fill="none" opacity="0.04" stroke-dasharray="24 11 27 6 41 13 52 15 23 27 20 6 59 16 31 30"/><path d="M-30,248.3 L-12,249.9 L6,250.1 L24,253.1 L42,254.4 L60,255.1 L78,253.5 L96,254.0 L114,250.9 L132,250.2 L150,251.2 L168,252.3 L186,253.8 L204,255.8 L222,258.2 L240,258.8 L258,258.7 L276,257.2 L294,258.2 L312,258.0 L330,256.8 L348,259.3 L366,262.9 L384,266.1 L402,267.1 L420,270.2 L438,272.7 L456,273.9 L474,273.0 L492,274.3 L510,276.6 L528,280.3 L546,282.5 L564,287.4 L582,293.8 L600,296.0 L618,301.5 L636,304.0 L654,306.9 L672,308.9 L690,312.2" stroke="#3f78b8" stroke-width="4.8" fill="none" opacity="0.03" stroke-dasharray="39 28 47 6 64 26 43 24 44 26 26 27 28 13 65 6"/><path d="M-30,4.9 L-12,7.9 L6,8.4 L24,9.1 L42,9.8 L60,11.3 L78,10.2 L96,7.8 L114,8.5 L132,8.2 L150,6.2 L168,8.8 L186,9.1 L204,11.9 L222,14.4 L240,15.5 L258,14.7 L276,15.1 L294,14.4 L312,14.8 L330,15.4 L348,14.4 L366,17.0 L384,20.1 L402,24.4 L420,25.4 L438,29.6 L456,31.5 L474,31.4 L492,32.7 L510,34.8 L528,36.3 L546,39.8 L564,43.4 L582,47.7 L600,52.9 L618,58.0 L636,60.6 L654,65.4 L672,69.1 L690,72.7" stroke="#c8ecff" stroke-width="2.6" fill="none" opacity="0.30" stroke-dasharray="56 17 64 20 26 17 39 22 60 27 20 19 57 11 57 21"/><path d="M-30,22.9 L-12,24.0 L6,21.9 L24,21.7 L42,20.6 L60,19.3 L78,18.9 L96,19.0 L114,19.2 L132,20.3 L150,21.8 L168,23.3 L186,25.9 L204,26.4 L222,24.7 L240,24.4 L258,25.2 L276,24.9 L294,24.9 L312,25.7 L330,29.4 L348,32.0 L366,32.9 L384,34.8 L402,36.1 L420,38.5 L438,38.8 L456,38.3 L474,41.6 L492,43.8 L510,45.3 L528,50.8 L546,54.3 L564,58.4 L582,61.8 L600,66.4 L618,69.1 L636,69.7 L654,73.5 L672,76.7 L690,81.5" stroke="#c8ecff" stroke-width="2.8" fill="none" opacity="0.29" stroke-dasharray="67 21 44 21 58 24 36 25 21 18 37 19 38 25 20 24"/><path d="M-30,34.3 L-12,34.2 L6,31.4 L24,30.8 L42,31.3 L60,30.6 L78,33.9 L96,35.3 L114,36.7 L132,36.7 L150,36.6 L168,35.7 L186,35.3 L204,35.3 L222,33.3 L240,34.0 L258,35.7 L276,37.7 L294,40.7 L312,43.5 L330,43.3 L348,44.3 L366,46.3 L384,46.1 L402,45.6 L420,46.4 L438,47.7 L456,51.6 L474,56.0 L492,57.9 L510,62.0 L528,64.8 L546,68.5 L564,69.3 L582,71.7 L600,73.9 L618,78.5 L636,82.6 L654,86.3 L672,92.5 L690,97.6" stroke="#c8ecff" stroke-width="2.9" fill="none" opacity="0.27" stroke-dasharray="38 23 39 9 53 27 65 9 58 28 22 21 64 24 63 11"/><path d="M-30,43.6 L-12,41.8 L6,43.8 L24,45.3 L42,46.6 L60,46.8 L78,48.2 L96,48.4 L114,49.0 L132,46.6 L150,44.8 L168,46.2 L186,45.9 L204,46.9 L222,48.8 L240,49.2 L258,52.2 L276,54.2 L294,54.3 L312,55.3 L330,53.7 L348,55.2 L366,55.4 L384,55.5 L402,57.8 L420,60.6 L438,63.6 L456,66.7 L474,69.7 L492,72.2 L510,74.0 L528,74.4 L546,76.8 L564,80.3 L582,83.4 L600,87.6 L618,91.5 L636,98.5 L654,102.0 L672,107.4 L690,111.2" stroke="#c8ecff" stroke-width="3.0" fill="none" opacity="0.26" stroke-dasharray="59 12 69 24 22 9 41 23 48 24 32 26 28 25 50 17"/><path d="M-30,55.6 L-12,58.7 L6,59.0 L24,60.2 L42,61.7 L60,59.9 L78,58.5 L96,58.3 L114,58.0 L132,57.8 L150,57.6 L168,58.8 L186,62.2 L204,63.9 L222,63.0 L240,65.6 L258,64.4 L276,63.5 L294,62.4 L312,64.0 L330,64.0 L348,66.7 L366,68.5 L384,71.7 L402,74.2 L420,78.0 L438,78.8 L456,80.4 L474,79.4 L492,81.4 L510,84.1 L528,86.1 L546,89.9 L564,93.9 L582,98.6 L600,102.9 L618,107.5 L636,110.6 L654,114.6 L672,116.6 L690,121.1" stroke="#c8ecff" stroke-width="3.2" fill="none" opacity="0.25" stroke-dasharray="55 22 59 15 26 21 35 19 30 11 50 24 38 26 52 9"/><path d="M-30,73.4 L-12,73.1 L6,73.0 L24,71.0 L42,69.6 L60,67.7 L78,69.7 L96,68.6 L114,71.4 L132,72.2 L150,74.5 L168,75.0 L186,75.4 L204,74.5 L222,73.1 L240,72.8 L258,72.0 L276,73.8 L294,74.6 L312,78.0 L330,79.9 L348,81.7 L366,83.6 L384,86.8 L402,87.5 L420,87.6 L438,86.4 L456,87.4 L474,90.5 L492,93.3 L510,98.1 L528,102.2 L546,106.3 L564,110.1 L582,112.0 L600,114.8 L618,116.6 L636,120.4 L654,122.7 L672,127.1 L690,132.7" stroke="#c8ecff" stroke-width="3.4" fill="none" opacity="0.23" stroke-dasharray="32 9 51 11 22 13 59 23 63 22 44 13 24 21 51 16"/><path d="M-30,83.9 L-12,81.7 L6,80.3 L24,81.4 L42,81.8 L60,83.4 L78,84.0 L96,86.4 L114,86.5 L132,87.4 L150,85.1 L168,85.3 L186,85.0 L204,84.2 L222,85.2 L240,85.5 L258,86.7 L276,89.9 L294,92.3 L312,93.6 L330,94.5 L348,93.3 L366,93.2 L384,93.9 L402,94.9 L420,97.6 L438,98.9 L456,101.7 L474,105.3 L492,111.2 L510,112.4 L528,115.0 L546,118.2 L564,120.1 L582,120.6 L600,124.1 L618,127.3 L636,131.8 L654,138.9 L672,142.4 L690,149.7" stroke="#c8ecff" stroke-width="3.5" fill="none" opacity="0.22" stroke-dasharray="58 24 48 28 61 21 23 27 29 9 35 18 36 16 35 11"/><path d="M-30,93.7 L-12,93.6 L6,94.6 L24,95.8 L42,97.6 L60,97.2 L78,97.6 L96,99.2 L114,96.1 L132,95.3 L150,95.1 L168,95.6 L186,95.0 L204,98.3 L222,99.8 L240,100.4 L258,102.5 L276,104.6 L294,104.1 L312,102.4 L330,103.3 L348,102.3 L366,104.2 L384,106.1 L402,110.6 L420,112.6 L438,116.8 L456,118.3 L474,120.9 L492,120.5 L510,123.7 L528,124.5 L546,126.1 L564,130.2 L582,134.4 L600,137.5 L618,142.3 L636,148.9 L654,154.0 L672,156.2 L690,160.8" stroke="#c8ecff" stroke-width="3.7" fill="none" opacity="0.20" stroke-dasharray="23 6 45 28 63 23 56 10 43 9 31 9 42 6 27 22"/><path d="M-30,107.9 L-12,109.4 L6,110.4 L24,110.0 L42,109.7 L60,108.6 L78,106.6 L96,105.8 L114,107.1 L132,106.9 L150,109.2 L168,111.3 L186,112.5 L204,113.3 L222,114.7 L240,113.8 L258,112.0 L276,113.2 L294,112.4 L312,113.2 L330,115.4 L348,117.7 L366,121.2 L384,123.1 L402,124.2 L420,126.9 L438,128.1 L456,127.0 L474,129.6 L492,130.9 L510,133.5 L528,136.3 L546,140.3 L564,145.4 L582,149.0 L600,154.4 L618,156.3 L636,160.1 L654,163.1 L672,165.3 L690,168.9" stroke="#c8ecff" stroke-width="3.8" fill="none" opacity="0.19" stroke-dasharray="65 29 51 25 42 12 46 5 47 25 36 28 26 11 50 19"/><path d="M-30,123.2 L-12,123.2 L6,120.3 L24,120.7 L42,119.5 L60,118.8 L78,119.4 L96,120.1 L114,122.2 L132,124.4 L150,125.2 L168,125.0 L186,125.5 L204,122.6 L222,122.8 L240,121.4 L258,123.2 L276,124.6 L294,126.3 L312,127.9 L330,130.0 L348,133.7 L366,134.3 L384,134.8 L402,135.5 L420,134.6 L438,136.8 L456,138.3 L474,142.2 L492,145.3 L510,149.9 L528,153.6 L546,155.9 L564,159.5 L582,160.6 L600,163.2 L618,166.3 L636,168.6 L654,173.1 L672,178.5 L690,185.4" stroke="#c8ecff" stroke-width="4.0" fill="none" opacity="0.18" stroke-dasharray="28 27 30 30 31 22 51 5 49 13 52 19 60 13 49 19"/><path d="M-30,130.8 L-12,129.9 L6,131.2 L24,131.9 L42,131.4 L60,133.9 L78,136.1 L96,135.2 L114,136.0 L132,136.8 L150,135.3 L168,135.1 L186,133.7 L204,134.1 L222,134.8 L240,137.0 L258,137.8 L276,139.7 L294,143.1 L312,142.3 L330,144.1 L348,142.5 L366,142.6 L384,142.6 L402,144.3 L420,148.6 L438,150.1 L456,155.2 L474,156.4 L492,160.2 L510,163.1 L528,165.7 L546,165.4 L564,167.7 L582,170.3 L600,173.3 L618,177.2 L636,183.2 L654,189.4 L672,194.5 L690,199.7" stroke="#c8ecff" stroke-width="4.1" fill="none" opacity="0.16" stroke-dasharray="30 11 46 8 36 27 66 27 43 28 48 7 45 29 36 14"/><path d="M-30,142.4 L-12,143.4 L6,144.7 L24,147.3 L42,148.7 L60,149.5 L78,148.3 L96,146.5 L114,146.8 L132,143.6 L150,144.9 L168,145.9 L186,146.7 L204,149.6 L222,151.6 L240,152.1 L258,152.6 L276,153.7 L294,151.2 L312,150.9 L330,151.0 L348,152.9 L366,155.0 L384,157.3 L402,160.4 L420,163.3 L438,165.3 L456,169.1 L474,169.1 L492,170.5 L510,170.8 L528,172.6 L546,175.3 L564,180.8 L582,183.7 L600,189.1 L618,194.6 L636,197.9 L654,202.7 L672,206.0 L690,210.0" stroke="#c8ecff" stroke-width="4.2" fill="none" opacity="0.15" stroke-dasharray="56 11 27 28 20 27 38 24 62 20 41 17 22 29 70 6"/><path d="M-30,158.4 L-12,159.6 L6,160.8 L24,159.7 L42,159.3 L60,157.0 L78,155.7 L96,157.4 L114,157.0 L132,158.1 L150,158.9 L168,161.8 L186,163.8 L204,162.5 L222,162.1 L240,162.4 L258,162.2 L276,160.4 L294,161.4 L312,164.8 L330,166.4 L348,169.3 L366,171.9 L384,172.3 L402,175.6 L420,175.1 L438,175.6 L456,178.1 L474,177.7 L492,179.7 L510,184.4 L528,187.4 L546,192.8 L564,195.5 L582,200.0 L600,202.6 L618,205.3 L636,208.8 L654,211.4 L672,214.5 L690,220.7" stroke="#c8ecff" stroke-width="4.4" fill="none" opacity="0.14" stroke-dasharray="53 12 26 25 25 11 28 27 24 13 50 26 57 19 67 16"/><path d="M-30,171.8 L-12,171.0 L6,170.3 L24,169.3 L42,167.6 L60,167.8 L78,169.2 L96,172.4 L114,172.0 L132,173.3 L150,174.2 L168,174.1 L186,174.5 L204,172.0 L222,171.1 L240,171.3 L258,173.7 L276,175.7 L294,177.2 L312,178.8 L330,182.1 L348,182.3 L366,182.3 L384,182.8 L402,182.8 L420,184.4 L438,185.4 L456,189.6 L474,192.3 L492,195.2 L510,199.4 L528,203.3 L546,207.2 L564,209.3 L582,211.3 L600,212.0 L618,214.4 L636,219.6 L654,224.4 L672,228.6 L690,235.1" stroke="#c8ecff" stroke-width="4.5" fill="none" opacity="0.12" stroke-dasharray="26 6 56 10 49 19 32 7 55 26 32 17 59 27 26 19"/><path d="M-30,180.7 L-12,181.3 L6,181.0 L24,182.0 L42,182.8 L60,185.5 L78,186.2 L96,186.8 L114,186.7 L132,184.6 L150,184.9 L168,183.3 L186,182.1 L204,184.2 L222,184.5 L240,186.7 L258,188.4 L276,192.1 L294,191.4 L312,191.1 L330,193.3 L348,191.2 L366,192.3 L384,193.1 L402,195.0 L420,197.7 L438,202.3 L456,204.3 L474,209.0 L492,211.0 L510,210.9 L528,213.0 L546,215.8 L564,216.6 L582,220.0 L600,223.3 L618,229.4 L636,235.4 L654,240.2 L672,244.0 L690,248.6" stroke="#c8ecff" stroke-width="4.7" fill="none" opacity="0.11" stroke-dasharray="29 25 45 23 59 21 63 12 47 23 57 8 34 13 30 29"/><path d="M-30,194.1 L-12,196.3 L6,196.6 L24,198.0 L42,198.0 L60,198.6 L78,197.6 L96,196.6 L114,193.9 L132,193.8 L150,196.0 L168,196.4 L186,197.3 L204,199.5 L222,200.3 L240,201.1 L258,201.9 L276,202.3 L294,201.0 L312,200.7 L330,201.8 L348,203.8 L366,206.6 L384,209.6 L402,212.3 L420,214.0 L438,215.3 L456,217.3 L474,219.2 L492,220.2 L510,220.0 L528,223.9 L546,226.6 L564,230.4 L582,237.0 L600,239.9 L618,246.0 L636,249.0 L654,251.2 L672,255.0 L690,259.1" stroke="#c8ecff" stroke-width="4.8" fill="none" opacity="0.10" stroke-dasharray="33 14 26 12 50 26 36 25 64 13 60 8 48 19 65 23"/><path d="M-30,208.8 L-12,211.4 L6,209.3 L24,208.3 L42,208.5 L60,206.4 L78,206.8 L96,207.5 L114,206.9 L132,210.0 L150,211.0 L168,212.3 L186,211.8 L204,212.1 L222,211.7 L240,210.8 L258,210.6 L276,211.6 L294,212.6 L312,214.0 L330,217.0 L348,220.0 L366,222.6 L384,223.9 L402,224.5 L420,224.8 L438,225.1 L456,226.7 L474,227.5 L492,231.8 L510,235.7 L528,239.7 L546,242.4 L564,245.7 L582,249.3 L600,253.6 L618,255.9 L636,258.7 L654,260.8 L672,264.1 L690,270.8" stroke="#c8ecff" stroke-width="5.0" fill="none" opacity="0.08" stroke-dasharray="65 16 20 11 44 9 30 25 64 16 52 28 27 15 20 12"/><path d="M-30,221.0 L-12,220.5 L6,217.8 L24,218.9 L42,218.3 L60,219.6 L78,221.9 L96,223.4 L114,223.5 L132,225.0 L150,223.0 L168,222.0 L186,222.1 L204,221.8 L222,222.3 L240,222.6 L258,224.5 L276,225.5 L294,228.2 L312,231.7 L330,231.6 L348,232.4 L366,231.8 L384,233.4 L402,233.1 L420,235.5 L438,236.8 L456,240.3 L474,243.1 L492,246.2 L510,249.5 L528,252.9 L546,255.3 L564,256.2 L582,259.7 L600,262.3 L618,265.4 L636,269.0 L654,275.1 L672,279.6 L690,286.5" stroke="#c8ecff" stroke-width="5.2" fill="none" opacity="0.07" stroke-dasharray="36 19 52 18 25 18 37 14 36 26 35 13 32 28 46 20"/><path d="M-30,229.6 L-12,230.7 L6,230.8 L24,232.1 L42,235.5 L60,235.8 L78,236.1 L96,236.6 L114,234.8 L132,232.7 L150,232.9 L168,233.7 L186,234.0 L204,235.9 L222,236.2 L240,237.7 L258,239.6 L276,242.2 L294,242.4 L312,240.4 L330,240.7 L348,240.8 L366,242.2 L384,244.5 L402,245.6 L420,250.8 L438,252.7 L456,255.1 L474,258.1 L492,259.4 L510,260.5 L528,262.5 L546,263.0 L564,266.7 L582,270.0 L600,274.4 L618,280.8 L636,284.7 L654,291.4 L672,295.4 L690,298.7" stroke="#c8ecff" stroke-width="5.3" fill="none" opacity="0.05" stroke-dasharray="51 20 64 17 27 15 65 17 37 9 24 30 59 22 37 16"/><path d="M-30,243.9 L-12,247.4 L6,248.6 L24,249.0 L42,247.7 L60,246.7 L78,245.2 L96,243.5 L114,243.8 L132,244.1 L150,246.9 L168,247.9 L186,249.2 L204,251.9 L222,251.5 L240,251.5 L258,250.0 L276,249.4 L294,250.5 L312,250.7 L330,252.0 L348,254.5 L366,256.1 L384,260.6 L402,262.4 L420,264.9 L438,266.2 L456,265.6 L474,267.2 L492,268.1 L510,270.8 L528,274.2 L546,276.7 L564,282.3 L582,287.9 L600,290.8 L618,294.7 L636,296.8 L654,300.9 L672,303.9 L690,306.3" stroke="#c8ecff" stroke-width="5.5" fill="none" opacity="0.04" stroke-dasharray="35 11 61 15 64 25 53 16 64 21 49 9 57 13 65 6"/></g>
<g filter="url(#b1)"><ellipse cx="596" cy="11" rx="11" ry="0.8" fill="#5a8ab8" opacity="0.6" transform="rotate(5 596 11)"/><ellipse cx="286" cy="19" rx="11" ry="0.9" fill="#5a8ab8" opacity="0.6" transform="rotate(14 286 19)"/><ellipse cx="639" cy="5" rx="4" ry="0.7" fill="#5a8ab8" opacity="0.6" transform="rotate(11 639 5)"/><ellipse cx="256" cy="3" rx="8" ry="0.7" fill="#5a8ab8" opacity="0.6" transform="rotate(8 256 3)"/><ellipse cx="526" cy="37" rx="6" ry="1.0" fill="#5a8ab8" opacity="0.6" transform="rotate(10 526 37)"/><ellipse cx="243" cy="3" rx="8" ry="0.7" fill="#5a8ab8" opacity="0.6" transform="rotate(3 243 3)"/><ellipse cx="570" cy="8" rx="6" ry="0.8" fill="#5a8ab8" opacity="0.6" transform="rotate(3 570 8)"/><ellipse cx="211" cy="28" rx="13" ry="0.9" fill="#5a8ab8" opacity="0.6" transform="rotate(10 211 28)"/><ellipse cx="527" cy="31" rx="9" ry="1.0" fill="#5a8ab8" opacity="0.6" transform="rotate(4 527 31)"/><ellipse cx="262" cy="4" rx="5" ry="0.7" fill="#5a8ab8" opacity="0.6" transform="rotate(13 262 4)"/><ellipse cx="4" cy="27" rx="8" ry="0.9" fill="#5a8ab8" opacity="0.6" transform="rotate(4 4 27)"/><ellipse cx="296" cy="1" rx="10" ry="0.7" fill="#5a8ab8" opacity="0.6" transform="rotate(10 296 1)"/><ellipse cx="76" cy="8" rx="5" ry="0.8" fill="#5a8ab8" opacity="0.6" transform="rotate(9 76 8)"/><ellipse cx="284" cy="10" rx="7" ry="0.8" fill="#5a8ab8" opacity="0.6" transform="rotate(7 284 10)"/><ellipse cx="555" cy="70" rx="7" ry="1.3" fill="#5a8ab8" opacity="0.35" transform="rotate(8 555 70)"/><ellipse cx="191" cy="2" rx="6" ry="0.7" fill="#5a8ab8" opacity="0.6" transform="rotate(8 191 2)"/><ellipse cx="123" cy="30" rx="12" ry="0.9" fill="#5a8ab8" opacity="0.6" transform="rotate(6 123 30)"/><ellipse cx="406" cy="2" rx="4" ry="0.7" fill="#5a8ab8" opacity="0.6" transform="rotate(4 406 2)"/><ellipse cx="290" cy="14" rx="8" ry="0.8" fill="#5a8ab8" opacity="0.6" transform="rotate(7 290 14)"/><ellipse cx="151" cy="22" rx="10" ry="0.9" fill="#5a8ab8" opacity="0.6" transform="rotate(9 151 22)"/><ellipse cx="125" cy="1" rx="9" ry="0.7" fill="#5a8ab8" opacity="0.6" transform="rotate(12 125 1)"/><ellipse cx="630" cy="18" rx="9" ry="0.9" fill="#5a8ab8" opacity="0.6" transform="rotate(9 630 18)"/><ellipse cx="472" cy="2" rx="6" ry="0.7" fill="#5a8ab8" opacity="0.6" transform="rotate(5 472 2)"/><ellipse cx="268" cy="3" rx="5" ry="0.7" fill="#5a8ab8" opacity="0.6" transform="rotate(12 268 3)"/><ellipse cx="188" cy="34" rx="13" ry="1.0" fill="#5a8ab8" opacity="0.6" transform="rotate(9 188 34)"/><ellipse cx="400" cy="31" rx="6" ry="1.0" fill="#5a8ab8" opacity="0.6" transform="rotate(6 400 31)"/><ellipse cx="327" cy="1" rx="8" ry="0.7" fill="#5a8ab8" opacity="0.6" transform="rotate(12 327 1)"/><ellipse cx="179" cy="16" rx="8" ry="0.8" fill="#5a8ab8" opacity="0.6" transform="rotate(13 179 16)"/><ellipse cx="571" cy="23" rx="4" ry="0.9" fill="#5a8ab8" opacity="0.6" transform="rotate(14 571 23)"/><ellipse cx="476" cy="42" rx="13" ry="1.1" fill="#5a8ab8" opacity="0.35" transform="rotate(4 476 42)"/><ellipse cx="416" cy="66" rx="10" ry="1.2" fill="#5a8ab8" opacity="0.35" transform="rotate(5 416 66)"/><ellipse cx="243" cy="25" rx="11" ry="0.9" fill="#5a8ab8" opacity="0.6" transform="rotate(8 243 25)"/><ellipse cx="283" cy="12" rx="5" ry="0.8" fill="#5a8ab8" opacity="0.6" transform="rotate(6 283 12)"/><ellipse cx="75" cy="22" rx="11" ry="0.9" fill="#5a8ab8" opacity="0.6" transform="rotate(13 75 22)"/><ellipse cx="432" cy="29" rx="11" ry="0.9" fill="#5a8ab8" opacity="0.6" transform="rotate(6 432 29)"/><ellipse cx="409" cy="23" rx="13" ry="0.9" fill="#5a8ab8" opacity="0.6" transform="rotate(7 409 23)"/><ellipse cx="252" cy="48" rx="14" ry="1.1" fill="#5a8ab8" opacity="0.35" transform="rotate(3 252 48)"/><ellipse cx="326" cy="20" rx="10" ry="0.9" fill="#5a8ab8" opacity="0.6" transform="rotate(12 326 20)"/><ellipse cx="37" cy="5" rx="4" ry="0.7" fill="#5a8ab8" opacity="0.6" transform="rotate(5 37 5)"/><ellipse cx="325" cy="9" rx="10" ry="0.8" fill="#5a8ab8" opacity="0.6" transform="rotate(8 325 9)"/><ellipse cx="50" cy="20" rx="5" ry="0.9" fill="#5a8ab8" opacity="0.6" transform="rotate(5 50 20)"/><ellipse cx="60" cy="3" rx="7" ry="0.7" fill="#5a8ab8" opacity="0.6" transform="rotate(11 60 3)"/><ellipse cx="236" cy="3" rx="5" ry="0.7" fill="#5a8ab8" opacity="0.6" transform="rotate(8 236 3)"/><ellipse cx="81" cy="2" rx="5" ry="0.7" fill="#5a8ab8" opacity="0.6" transform="rotate(12 81 2)"/><ellipse cx="263" cy="30" rx="8" ry="0.9" fill="#5a8ab8" opacity="0.6" transform="rotate(14 263 30)"/><ellipse cx="174" cy="13" rx="5" ry="0.8" fill="#5a8ab8" opacity="0.6" transform="rotate(11 174 13)"/><ellipse cx="618" cy="81" rx="19" ry="1.4" fill="#5a8ab8" opacity="0.35" transform="rotate(4 618 81)"/><ellipse cx="467" cy="53" rx="15" ry="1.1" fill="#5a8ab8" opacity="0.35" transform="rotate(4 467 53)"/><ellipse cx="198" cy="9" rx="5" ry="0.8" fill="#5a8ab8" opacity="0.6" transform="rotate(6 198 9)"/><ellipse cx="528" cy="33" rx="8" ry="1.0" fill="#5a8ab8" opacity="0.6" transform="rotate(10 528 33)"/><ellipse cx="208" cy="1" rx="8" ry="0.7" fill="#5a8ab8" opacity="0.6" transform="rotate(8 208 1)"/><ellipse cx="413" cy="14" rx="8" ry="0.8" fill="#5a8ab8" opacity="0.6" transform="rotate(9 413 14)"/><ellipse cx="144" cy="4" rx="8" ry="0.7" fill="#5a8ab8" opacity="0.6" transform="rotate(9 144 4)"/><ellipse cx="312" cy="11" rx="9" ry="0.8" fill="#5a8ab8" opacity="0.6" transform="rotate(13 312 11)"/><ellipse cx="54" cy="26" rx="10" ry="0.9" fill="#5a8ab8" opacity="0.6" transform="rotate(11 54 26)"/><ellipse cx="385" cy="35" rx="11" ry="1.0" fill="#5a8ab8" opacity="0.6" transform="rotate(10 385 35)"/><ellipse cx="325" cy="15" rx="9" ry="0.8" fill="#5a8ab8" opacity="0.6" transform="rotate(10 325 15)"/><ellipse cx="137" cy="37" rx="10" ry="1.0" fill="#5a8ab8" opacity="0.6" transform="rotate(13 137 37)"/><ellipse cx="213" cy="30" rx="11" ry="0.9" fill="#5a8ab8" opacity="0.6" transform="rotate(6 213 30)"/><ellipse cx="449" cy="4" rx="9" ry="0.7" fill="#5a8ab8" opacity="0.6" transform="rotate(12 449 4)"/></g>
<g filter="url(#b4)"><ellipse cx="552" cy="162" rx="35" ry="5.2" fill="#b8e0ff" opacity="0.13" transform="rotate(15 552 162)"/><ellipse cx="593" cy="76" rx="60" ry="3.8" fill="#b8e0ff" opacity="0.17" transform="rotate(13 593 76)"/><ellipse cx="194" cy="44" rx="57" ry="3.2" fill="#b8e0ff" opacity="0.14" transform="rotate(9 194 44)"/><ellipse cx="270" cy="69" rx="35" ry="3.6" fill="#b8e0ff" opacity="0.14" transform="rotate(12 270 69)"/><ellipse cx="629" cy="155" rx="36" ry="5.1" fill="#b8e0ff" opacity="0.14" transform="rotate(20 629 155)"/><ellipse cx="419" cy="121" rx="41" ry="4.5" fill="#b8e0ff" opacity="0.13" transform="rotate(23 419 121)"/><ellipse cx="443" cy="189" rx="57" ry="5.7" fill="#b8e0ff" opacity="0.11" transform="rotate(12 443 189)"/><ellipse cx="634" cy="168" rx="51" ry="5.3" fill="#b8e0ff" opacity="0.13" transform="rotate(9 634 168)"/><ellipse cx="509" cy="85" rx="53" ry="3.9" fill="#b8e0ff" opacity="0.16" transform="rotate(10 509 85)"/><ellipse cx="476" cy="107" rx="48" ry="4.3" fill="#b8e0ff" opacity="0.15" transform="rotate(11 476 107)"/><ellipse cx="623" cy="140" rx="30" ry="4.8" fill="#b8e0ff" opacity="0.15" transform="rotate(12 623 140)"/><ellipse cx="224" cy="164" rx="43" ry="5.2" fill="#b8e0ff" opacity="0.10" transform="rotate(14 224 164)"/><ellipse cx="604" cy="57" rx="42" ry="3.4" fill="#b8e0ff" opacity="0.18" transform="rotate(12 604 57)"/><ellipse cx="536" cy="141" rx="26" ry="4.8" fill="#b8e0ff" opacity="0.14" transform="rotate(13 536 141)"/><ellipse cx="171" cy="161" rx="31" ry="5.2" fill="#b8e0ff" opacity="0.10" transform="rotate(15 171 161)"/><ellipse cx="159" cy="218" rx="34" ry="6.1" fill="#b8e0ff" opacity="0.07" transform="rotate(19 159 218)"/><ellipse cx="162" cy="86" rx="34" ry="3.9" fill="#b8e0ff" opacity="0.12" transform="rotate(9 162 86)"/><ellipse cx="85" cy="142" rx="49" ry="4.9" fill="#b8e0ff" opacity="0.10" transform="rotate(15 85 142)"/><ellipse cx="244" cy="208" rx="27" ry="6.0" fill="#b8e0ff" opacity="0.08" transform="rotate(18 244 208)"/><ellipse cx="338" cy="85" rx="42" ry="3.9" fill="#b8e0ff" opacity="0.14" transform="rotate(6 338 85)"/><ellipse cx="56" cy="107" rx="37" ry="4.3" fill="#b8e0ff" opacity="0.11" transform="rotate(15 56 107)"/><ellipse cx="580" cy="140" rx="58" ry="4.8" fill="#b8e0ff" opacity="0.14" transform="rotate(18 580 140)"/><ellipse cx="97" cy="141" rx="38" ry="4.8" fill="#b8e0ff" opacity="0.10" transform="rotate(11 97 141)"/><ellipse cx="218" cy="154" rx="28" ry="5.1" fill="#b8e0ff" opacity="0.10" transform="rotate(15 218 154)"/><ellipse cx="135" cy="193" rx="52" ry="5.7" fill="#b8e0ff" opacity="0.08" transform="rotate(5 135 193)"/><ellipse cx="319" cy="136" rx="32" ry="4.8" fill="#b8e0ff" opacity="0.12" transform="rotate(15 319 136)"/><ellipse cx="450" cy="229" rx="41" ry="6.3" fill="#b8e0ff" opacity="0.09" transform="rotate(24 450 229)"/><ellipse cx="499" cy="84" rx="37" ry="3.9" fill="#b8e0ff" opacity="0.16" transform="rotate(8 499 84)"/><ellipse cx="365" cy="77" rx="47" ry="3.8" fill="#b8e0ff" opacity="0.15" transform="rotate(12 365 77)"/><ellipse cx="68" cy="55" rx="44" ry="3.4" fill="#b8e0ff" opacity="0.13" transform="rotate(11 68 55)"/><ellipse cx="526" cy="162" rx="41" ry="5.2" fill="#b8e0ff" opacity="0.13" transform="rotate(10 526 162)"/><ellipse cx="532" cy="107" rx="54" ry="4.3" fill="#b8e0ff" opacity="0.15" transform="rotate(9 532 107)"/><ellipse cx="133" cy="75" rx="37" ry="3.7" fill="#b8e0ff" opacity="0.13" transform="rotate(17 133 75)"/><ellipse cx="475" cy="77" rx="27" ry="3.8" fill="#b8e0ff" opacity="0.16" transform="rotate(18 475 77)"/><ellipse cx="552" cy="143" rx="27" ry="4.9" fill="#b8e0ff" opacity="0.14" transform="rotate(8 552 143)"/><ellipse cx="319" cy="143" rx="58" ry="4.9" fill="#b8e0ff" opacity="0.12" transform="rotate(18 319 143)"/><ellipse cx="598" cy="89" rx="39" ry="4.0" fill="#b8e0ff" opacity="0.16" transform="rotate(16 598 89)"/><ellipse cx="177" cy="143" rx="41" ry="4.9" fill="#b8e0ff" opacity="0.10" transform="rotate(9 177 143)"/><ellipse cx="159" cy="208" rx="26" ry="6.0" fill="#b8e0ff" opacity="0.08" transform="rotate(18 159 208)"/><ellipse cx="176" cy="172" rx="42" ry="5.4" fill="#b8e0ff" opacity="0.09" transform="rotate(12 176 172)"/><ellipse cx="284" cy="215" rx="49" ry="6.1" fill="#b8e0ff" opacity="0.08" transform="rotate(15 284 215)"/><ellipse cx="325" cy="232" rx="45" ry="6.4" fill="#b8e0ff" opacity="0.08" transform="rotate(22 325 232)"/><ellipse cx="265" cy="210" rx="30" ry="6.0" fill="#b8e0ff" opacity="0.08" transform="rotate(20 265 210)"/><ellipse cx="508" cy="74" rx="39" ry="3.7" fill="#b8e0ff" opacity="0.16" transform="rotate(23 508 74)"/><ellipse cx="608" cy="138" rx="35" ry="4.8" fill="#b8e0ff" opacity="0.14" transform="rotate(7 608 138)"/></g>
<g fill="none" stroke="#24507c" stroke-width="1.3" filter="url(#b1)"><ellipse cx="252.0" cy="190.0" rx="10.0" ry="3.0" stroke-dasharray="22 11" opacity="0.60"/><ellipse cx="250.5" cy="189.7" rx="18.0" ry="5.3" stroke-dasharray="27 5" opacity="0.53"/><ellipse cx="249.0" cy="189.4" rx="26.0" ry="7.6" stroke-dasharray="37 8" opacity="0.46"/><ellipse cx="247.5" cy="189.1" rx="34.0" ry="9.9" stroke-dasharray="24 8" opacity="0.38"/><ellipse cx="246.0" cy="188.8" rx="42.0" ry="12.2" stroke-dasharray="23 5" opacity="0.31"/><ellipse cx="244.5" cy="188.5" rx="50.0" ry="14.5" stroke-dasharray="25 6" opacity="0.24"/><ellipse cx="243.0" cy="188.2" rx="58.0" ry="16.8" stroke-dasharray="21 5" opacity="0.17"/></g>
<ellipse cx="252" cy="193" rx="30" ry="8" fill="#2a5888" opacity="0.3" filter="url(#b2)"/>
<g fill="none" stroke="#a8d0f0" stroke-width="0.8" opacity="0.35" filter="url(#b1)"><ellipse cx="254" cy="187" rx="20" ry="5"/><ellipse cx="250" cy="185" rx="38" ry="10"/></g>
<g filter="url(#b1)">
<path d="M399 82 L402 78 L405 81 L408 77 L411 80 L413 79 L417 95 L425 116 L422 123 L412 126 L406 110 L401 95z" fill="#2a2c34"/>
<path d="M404 90 l4 20 M409 88 l5 20 M413 92 l4 16" stroke="#55585e" stroke-width="0.9" opacity="0.7"/>
<path d="M390 131 Q398 127 410 128 L411 134 Q400 137 390 134z" fill="#2a303c"/>
<path d="M406 127 Q414 119 424 119 L430 124 Q424 134 412 136 Q406 134 406 127z" fill="#e8eef4"/>
<path d="M424 118 Q431 115 436 120 L438 123 L430 126 L424 124z" fill="#1c2430"/>
<path d="M436 121 l3.5 1.5 -3.5 1.5z" fill="#e0e8f0"/>
<path d="M411 134 l1.5 8" stroke="#2a3440" stroke-width="1.6"/>
</g>
<g filter="url(#b1)">
<path d="M412 194 L405 213" stroke="#1e3444" stroke-width="2.6"/>
<circle cx="412" cy="195" r="2" fill="#1e3444"/>
<path d="M385 208 Q394 210 402 214" stroke="#1e3040" stroke-width="3" stroke-linecap="round"/>
<path d="M408 214 Q420 216 430 218" stroke="#1e3040" stroke-width="3" stroke-linecap="round"/>
<path d="M396 216 Q408 212 420 216 Q424 226 420 238 Q424 252 420 260 Q410 266 398 262 Q386 256 388 246 Q392 240 402 238 Q394 232 396 216z" fill="#2c3c2a"/>
<path d="M400 222 Q408 218 416 224 Q414 232 406 230z" fill="#3a4a34" opacity="0.6"/>
</g>
</svg></div>
<!-- scrubber -->
<div class="a" style="left:467px;top:530px;width:630px;height:22px;background:#111111"></div>
<div class="a" style="left:467.0px;top:541px;width:1px;height:11px;background:#9a9a9a"></div>
<div class="t" style="left:469.0px;top:541px;font-size:9.2px;color:#d0d0d0">00:00:00</div>
<div class="a" style="left:493.4px;top:546px;width:1px;height:6px;background:#9a9a9a"></div>
<div class="a" style="left:519.9px;top:546px;width:1px;height:6px;background:#9a9a9a"></div>
<div class="a" style="left:546.3px;top:549px;width:1px;height:3px;background:#9a9a9a"></div>
<div class="a" style="left:572.7px;top:541px;width:1px;height:11px;background:#9a9a9a"></div>
<div class="t" style="left:574.7px;top:541px;font-size:9.2px;color:#d0d0d0">00:00:05</div>
<div class="a" style="left:599.1px;top:546px;width:1px;height:6px;background:#9a9a9a"></div>
<div class="a" style="left:625.6px;top:546px;width:1px;height:6px;background:#9a9a9a"></div>
<div class="a" style="left:652.0px;top:549px;width:1px;height:3px;background:#9a9a9a"></div>
<div class="a" style="left:678.4px;top:541px;width:1px;height:11px;background:#9a9a9a"></div>
<div class="t" style="left:680.4px;top:541px;font-size:9.2px;color:#d0d0d0">00:00:10</div>
<div class="a" style="left:704.8px;top:546px;width:1px;height:6px;background:#9a9a9a"></div>
<div class="a" style="left:731.2px;top:546px;width:1px;height:6px;background:#9a9a9a"></div>
<div class="a" style="left:757.7px;top:549px;width:1px;height:3px;background:#9a9a9a"></div>
<div class="a" style="left:784.1px;top:541px;width:1px;height:11px;background:#9a9a9a"></div>
<div class="t" style="left:786.1px;top:541px;font-size:9.2px;color:#d0d0d0">00:00:15</div>
<div class="a" style="left:810.5px;top:546px;width:1px;height:6px;background:#9a9a9a"></div>
<div class="a" style="left:837.0px;top:546px;width:1px;height:6px;background:#9a9a9a"></div>
<div class="a" style="left:863.4px;top:549px;width:1px;height:3px;background:#9a9a9a"></div>
<div class="a" style="left:889.8px;top:541px;width:1px;height:11px;background:#9a9a9a"></div>
<div class="t" style="left:891.8px;top:541px;font-size:9.2px;color:#d0d0d0">00:00:20</div>
<div class="a" style="left:916.2px;top:546px;width:1px;height:6px;background:#9a9a9a"></div>
<div class="a" style="left:942.6px;top:546px;width:1px;height:6px;background:#9a9a9a"></div>
<div class="a" style="left:969.1px;top:549px;width:1px;height:3px;background:#9a9a9a"></div>
<div class="a" style="left:995.5px;top:541px;width:1px;height:11px;background:#9a9a9a"></div>
<div class="t" style="left:997.5px;top:541px;font-size:9.2px;color:#d0d0d0">00:00:25</div>
<div class="a" style="left:1021.9px;top:546px;width:1px;height:6px;background:#9a9a9a"></div>
<div class="a" style="left:1048.3px;top:546px;width:1px;height:6px;background:#9a9a9a"></div>
<div class="a" style="left:1074.8px;top:549px;width:1px;height:3px;background:#9a9a9a"></div>
<svg class="a" style="left:552px;top:530px" width="13" height="23"><path d="M1 0.5h11l-4.2 4.5v17h-2.6v-17z" fill="#f0f0f0"/></svg>
<div class="a" style="left:460px;top:560px;width:66px;height:17px;background:#121212"></div>
<div class="t" style="left:471px;top:563px;font-size:9.3px;color:#dcdcdc">00:00:04:17</div>
<div class="a" style="left:526px;top:560px;width:11px;height:17px;background:#2e2e2e;border:1px solid #262626"></div>
<svg class="a" style="left:526px;top:560px" width="11" height="17"><path d="M2.5 6.5l3-3 3 3z M2.5 10.5l3 3 3-3z" fill="#cfcfcf"/></svg>
<div class="t" style="left:541px;top:563px;font-size:9.2px;color:#d6d6d6">/ 00:00:29:40</div>
<svg class="a" style="left:690px;top:558px" width="185" height="20" fill="#eeeeee">
<rect x="5.5" y="6.5" width="1.6" height="6.5"/><path d="M13.3 6.5v6.5l-5.6-3.25z"/>
<path d="M19.5 9.75l5.5-3.25v6.5z M25 9.75l5.5-3.25v6.5z" transform="translate(5,0)"/>
<path d="M47 6.5v6.5l5.8-3.25z"/>
<path d="M65 6.5v6.5l5-3.25z M70 6.5v6.5l5-3.25z"/>
<path d="M86.5 6.5v6.5l5.6-3.25z"/><rect x="92.8" y="6.5" width="1.6" height="6.5"/>
<rect x="107" y="6" width="8" height="8"/><path d="M105.5 4.5l2 2M116.5 4.5l-2 2M105.5 15.5l2-2M116.5 15.5l-2-2" stroke="#dddddd" stroke-width="1"/>
<path d="M121.5 8.5h7l-3.5 3.5z" fill="#bbbbbb"/>
<g fill="none" stroke="#e6e6e6" stroke-width="1"><rect x="136" y="4.5" width="10" height="11"/><path d="M138.5 4.5v11M141 4.5v11M143.5 4.5v11M136 7h10M136 9.5h10M136 12h10"/></g>
<path d="M151 8.5h7l-3.5 3.5z" fill="#bbbbbb"/>
<path d="M165 8h2l3-2.5v9l-3-2.5h-2z"/><path d="M172 6.5q2 3.25 0 6.5M174.5 5.5q2.8 4.25 0 8.5" fill="none" stroke="#cccccc" stroke-width="1.2"/>
</svg>
<div class="t" style="left:941px;top:564px;font-size:8.6px;color:#cfcfcf">--:--:--:-- /</div>
<div class="t" style="left:1023px;top:564px;font-size:8.6px;color:#cfcfcf">--:--:--:--</div>
<div class="tab" style="left:458px;top:585px;width:44px;height:15px"><span style="top:3px">Source</span></div>
<div class="tab tabsel" style="left:504px;top:585px;width:45px;height:18px"><span style="top:4px">Project</span></div>
<div class="a" style="left:677px;top:606px;width:14px;height:2px;background:#555"></div>
<div class="t" style="left:1116px;top:75px;color:#d6d6d6">Audi...</div>
<svg class="a" style="left:1146px;top:74px" width="24" height="12">
<rect x="1" y="1.5" width="8.5" height="9" rx="2" fill="none" stroke="#6a6a6a" stroke-width="1"/>
<circle cx="5.2" cy="6" r="2" fill="none" stroke="#6a6a6a" stroke-width="0.9"/>
<rect x="12" y="1.5" width="8.5" height="9" rx="1" fill="none" stroke="#6a6a6a" stroke-width="1"/>
<path d="M13 2.5l6.5 7M19.5 2.5l-6.5 7" stroke="#6a6a6a" stroke-width="1"/></svg>
<div class="t" style="left:1177px;top:75px;color:#d6d6d6">Jobs</div>
<svg class="a" style="left:1343px;top:74px" width="24" height="12">
<rect x="1" y="1.5" width="8.5" height="9" rx="2" fill="none" stroke="#6a6a6a" stroke-width="1"/>
<circle cx="5.2" cy="6" r="2" fill="none" stroke="#6a6a6a" stroke-width="0.9"/>
<rect x="12" y="1.5" width="8.5" height="9" rx="1" fill="none" stroke="#6a6a6a" stroke-width="1"/>
<path d="M13 2.5l6.5 7M19.5 2.5l-6.5 7" stroke="#6a6a6a" stroke-width="1"/></svg>
<div class="t r" style="left:1100px;top:93px;width:29.5px;font-size:8.6px;color:#d0d0d0">3</div>
<div class="t r" style="left:1100px;top:115px;width:29.5px;font-size:8.6px;color:#d0d0d0">0</div>
<div class="t r" style="left:1100px;top:161px;width:29.5px;font-size:8.6px;color:#d0d0d0">-5</div>
<div class="t r" style="left:1100px;top:206px;width:29.5px;font-size:8.6px;color:#d0d0d0">-10</div>
<div class="t r" style="left:1100px;top:253px;width:29.5px;font-size:8.6px;color:#d0d0d0">-15</div>
<div class="t r" style="left:1100px;top:298px;width:29.5px;font-size:8.6px;color:#d0d0d0">-20</div>
<div class="t r" style="left:1100px;top:335px;width:29.5px;font-size:8.6px;color:#d0d0d0">-25</div>
<div class="t r" style="left:1100px;top:372px;width:29.5px;font-size:8.6px;color:#d0d0d0">-30</div>
<div class="t r" style="left:1100px;top:399px;width:29.5px;font-size:8.6px;color:#d0d0d0">-35</div>
<div class="t r" style="left:1100px;top:427px;width:29.5px;font-size:8.6px;color:#d0d0d0">-40</div>
<div class="t r" style="left:1100px;top:455px;width:29.5px;font-size:8.6px;color:#d0d0d0">-50</div>
<div class="t" style="left:1134px;top:490px;font-size:8.6px;color:#d0d0d0">L</div>
<div class="t" style="left:1145px;top:490px;font-size:8.6px;color:#d0d0d0">R</div>
<div class="a" style="left:453px;top:333px;width:1px;height:13px;background:repeating-linear-gradient(#777 0 1px,transparent 1px 2px)"></div>
<div class="a" style="left:1111px;top:333px;width:1px;height:13px;background:repeating-linear-gradient(#777 0 1px,transparent 1px 2px)"></div>
<div class="a" style="left:1171px;top:333px;width:1px;height:13px;background:repeating-linear-gradient(#777 0 1px,transparent 1px 2px)"></div>
<div class="a" style="left:1174px;top:88px;width:192px;height:476px;background:#111111"></div>
<div class="a" style="left:1175px;top:567px;width:63px;height:15px;border:1px solid #3a3a3a;border-radius:2px;background:linear-gradient(#353535,#2c2c2c)"></div>
<div class="t" style="left:1175px;top:570px;width:63px;text-align:center;color:#d6d6d6">Pause</div>
<div class="a" style="left:1244px;top:565px;width:22px;height:18px;border:1px solid #353535;border-radius:2px;background:#2e2e2e"></div>
<svg class="a" style="left:1244px;top:565px" width="22" height="18"><rect x="8" y="5" width="6" height="1.5" fill="#eee"/><rect x="8" y="8.3" width="6" height="1.5" fill="#eee"/><rect x="8" y="11.6" width="6" height="1.5" fill="#eee"/></svg>
<div class="tab" style="left:1175px;top:584px;width:45px;height:16px"><span style="top:4px">Recent</span></div>
<div class="tab" style="left:1222px;top:584px;width:45px;height:16px"><span style="top:4px">History</span></div>
<div class="tab tabsel" style="left:1269px;top:584px;width:35px;height:19px"><span style="top:5px">Jobs</span></div>
<div class="t" style="left:3px;top:612px;color:#d6d6d6">Timeline</div>
<svg class="a" style="left:1343px;top:611px" width="24" height="12">
<rect x="1" y="1.5" width="8.5" height="9" rx="2" fill="none" stroke="#6a6a6a" stroke-width="1"/>
<circle cx="5.2" cy="6" r="2" fill="none" stroke="#6a6a6a" stroke-width="0.9"/>
<rect x="12" y="1.5" width="8.5" height="9" rx="1" fill="none" stroke="#6a6a6a" stroke-width="1"/>
<path d="M13 2.5l6.5 7M19.5 2.5l-6.5 7" stroke="#6a6a6a" stroke-width="1"/></svg>
<div class="a" style="left:0;top:625px;width:1366px;height:1px;background:#555"></div>
<svg class="a" style="left:0;top:626px" width="480" height="20">
<g fill="#e8e8e8">
<rect x="8" y="4.5" width="7" height="1.6"/><rect x="8" y="7.8" width="7" height="1.6"/><rect x="8" y="11.1" width="7" height="1.6"/>
<path d="M30 6.5l5 3 5-2.5" fill="none" stroke="#e0e0e0" stroke-width="1.4"/><circle cx="37.5" cy="12" r="2" fill="none" stroke="#e0e0e0" stroke-width="1.1"/><path d="M35 9.5l-4 4" stroke="#e0e0e0" stroke-width="1.2"/>
<path d="M51.5 4h3.5l2.5 2.5v7.5h-6z"/><path d="M48 7h4l2 2v7h-6z" stroke="#2a2a2a" stroke-width="0.9"/>
<rect x="68.5" y="5.5" width="9.5" height="10.5" rx="1" fill="none" stroke="#d8d8d8" stroke-width="1.3"/><rect x="71" y="4.5" width="4.5" height="2" /><rect x="70.5" y="8" width="5.5" height="6" fill="#bbb"/>
<path d="M95 4.5h2.6v4h4v2.6h-4v4h-2.6v-4h-4v-2.6h4z"/>
<rect x="110" y="8.6" width="10" height="2.6"/>
<path d="M130 12l3.6-3.6 3.6 3.6" fill="none" stroke="#e8e8e8" stroke-width="1.4"/>
<path d="M149 8l3.8 3.8 3.8-3.8" fill="none" stroke="#e8e8e8" stroke-width="1.4"/>
<rect x="165" y="6.5" width="5.5" height="6"/><rect x="171.5" y="6.5" width="5.5" height="6"/>
</g>
<path d="M191 15v-6a4 4 0 0 1 8 0v6" fill="none" stroke="#6fb7d2" stroke-width="2.6"/>
<g fill="#cfcfcf"><path d="M207.5 9.5l3-2.5v5z M220 9.5l-3-2.5v5z"/><rect x="210" y="8.4" width="7.5" height="2.4"/></g>
<circle cx="232.5" cy="9.5" r="5.5" fill="none" stroke="#d8d8d8" stroke-width="1.3"/><circle cx="232.5" cy="9.5" r="3" fill="none" stroke="#d8d8d8" stroke-width="1"/><circle cx="232.5" cy="9.5" r="1.1" fill="#d8d8d8"/>
<circle cx="251.5" cy="9.5" r="5.5" fill="none" stroke="#e0e0e0" stroke-width="1.3"/><path d="M251.5 6l1 2.2 2.4 0.2-1.8 1.6 0.6 2.4-2.2-1.3-2.2 1.3 0.6-2.4-1.8-1.6 2.4-0.2z" fill="#e0e0e0"/>
<circle cx="273" cy="7.5" r="3.8" fill="none" stroke="#cfcfcf" stroke-width="1.2"/><rect x="271" y="7" width="4" height="1" fill="#cfcfcf"/><path d="M275.8 10.3l4 4" stroke="#e8e8e8" stroke-width="2"/>
<circle cx="458" cy="7.5" r="3.8" fill="none" stroke="#cfcfcf" stroke-width="1.2"/><rect x="456" y="7" width="4" height="1" fill="#cfcfcf"/><path d="M460.8 10.3l4 4" stroke="#e8e8e8" stroke-width="2"/>
</svg>
<div class="a" style="left:291px;top:635px;width:155px;height:2px;background:#1c1c1c"></div>
<div class="a" style="left:291px;top:634.5px;width:49px;height:3px;background:#3d7f9c;border-radius:1px"></div>
<div class="a" style="left:338px;top:631px;width:9px;height:9px;background:#4a4a4a;border-radius:1px;border:1px solid #3a3a3a"></div>
<div class="a" style="left:0;top:647px;width:114px;height:23px;background:#252525"></div>
<div class="t" style="left:5px;top:654px;color:#d2d2d2">Master</div>
<div class="a" style="left:0;top:670px;width:1338px;height:49px;background:#625c18"></div>
<div class="a" style="left:0;top:719px;width:114px;height:50px;background:#1c1c1c"></div>
<div class="a" style="left:114px;top:719px;width:1224px;height:50px;background:#1b1b1b"></div>
<div class="t" style="left:6px;top:677px;color:#e4e0b0">V2</div>
<div class="t" style="left:6px;top:726px;color:#d8d8d8">V1</div>
<svg class="a" style="left:2px;top:698px" width="60" height="13" fill="#eaeaea">
<path d="M2 5h2.5l3.5-3v9l-3.5-3h-2.5z"/><path d="M10 3.5q1.8 3 0 6M12.5 2.5q2.6 4 0 8" fill="none" stroke="#cfcfcf" stroke-width="1.2"/>
<path d="M23.5 6.5q6-6.5 12 0q-6 6.5-12 0z"/><circle cx="29.5" cy="6.5" r="2" fill="#3a3a3a"/><circle cx="29.5" cy="6.5" r="0.9" fill="#eaeaea"/>
<rect x="44.5" y="6" width="7.5" height="6"/><path d="M50 6v-2.2a2.7 2.7 0 0 1 5.4 0v1" fill="none" stroke="#eaeaea" stroke-width="1.4"/>
</svg>
<svg class="a" style="left:2px;top:747px" width="60" height="13" fill="#eaeaea">
<path d="M2 5h2.5l3.5-3v9l-3.5-3h-2.5z"/><path d="M10 3.5q1.8 3 0 6M12.5 2.5q2.6 4 0 8" fill="none" stroke="#cfcfcf" stroke-width="1.2"/>
<path d="M23.5 6.5q6-6.5 12 0q-6 6.5-12 0z"/><circle cx="29.5" cy="6.5" r="2" fill="#3a3a3a"/><circle cx="29.5" cy="6.5" r="0.9" fill="#eaeaea"/>
<rect x="44.5" y="6" width="7.5" height="6"/><path d="M50 6v-2.2a2.7 2.7 0 0 1 5.4 0v1" fill="none" stroke="#eaeaea" stroke-width="1.4"/>
</svg>
<div class="a" style="left:114px;top:648px;width:1224px;height:22px;background:#121212"></div>
<div class="a" style="left:113px;top:648px;width:1px;height:121px;background:#8a8a80"></div>
<div class="a" style="left:114.0px;top:656px;width:1px;height:14px;background:#b8b8b8"></div>
<div class="t" style="left:116.0px;top:659px;font-size:9.2px;color:#d4d4d4">00:00:00</div>
<div class="a" style="left:319.1px;top:656px;width:1px;height:14px;background:#b8b8b8"></div>
<div class="t" style="left:321.1px;top:659px;font-size:9.2px;color:#d4d4d4">00:00:05</div>
<div class="a" style="left:524.2px;top:656px;width:1px;height:14px;background:#b8b8b8"></div>
<div class="t" style="left:526.2px;top:659px;font-size:9.2px;color:#d4d4d4">00:00:10</div>
<div class="a" style="left:729.3px;top:656px;width:1px;height:14px;background:#b8b8b8"></div>
<div class="t" style="left:731.3px;top:659px;font-size:9.2px;color:#d4d4d4">00:00:15</div>
<div class="a" style="left:934.4px;top:656px;width:1px;height:14px;background:#b8b8b8"></div>
<div class="t" style="left:936.4px;top:659px;font-size:9.2px;color:#d4d4d4">00:00:20</div>
<div class="a" style="left:1139.5px;top:656px;width:1px;height:14px;background:#b8b8b8"></div>
<div class="t" style="left:1141.5px;top:659px;font-size:9.2px;color:#d4d4d4">00:00:25</div>
<div class="a" style="left:1338px;top:648px;width:28px;height:122px;background:#292929"></div>
<div class="a" style="left:205px;top:670px;width:127px;height:49px;background:#8a1e14;border-left:1px solid #c83a20;border-right:1px solid #c83a20"></div>
<div class="a" style="left:206px;top:671px;width:125px;height:24px;background:#0d4f68"></div>
<div class="a" style="left:206px;top:671px;width:42px;height:24px;background:linear-gradient(165deg,#d8f0ff 0,#9cc8ea 22%,#5f93c0 50%,#3a6a94 75%,#2a4c6c 100%)"></div>
<div class="a" style="left:206px;top:683px;width:42px;height:12px;background:radial-gradient(ellipse 20px 6px at 60% 80%,#7a9a50,rgba(90,120,70,0) 100%),linear-gradient(180deg,#3a5a78,#2a4a5a)"></div>
<div class="a" style="left:288px;top:671px;width:43px;height:24px;background:linear-gradient(165deg,#d8f0ff 0,#9cc8ea 22%,#5f93c0 50%,#3a6a94 75%,#2a4c6c 100%)"></div>
<div class="a" style="left:248px;top:671px;width:83px;height:12px;background:#c9d6de"></div>
<div class="t" style="left:249px;top:672px;font-size:8.8px;letter-spacing:-0.36px;color:#1c2a30;width:82px;overflow:hidden">00145 INSANE CROW FOOD</div>
<svg class="a" style="left:206px;top:695px" width="125" height="23"><rect width="125" height="23" fill="#0b5a7a"/><polygon points="0,23 0.0,18.3 1.5,16.8 3.0,17.7 4.5,16.6 6.0,16.5 7.5,19.1 9.0,19.3 10.5,15.5 12.0,18.2 13.6,18.3 15.1,14.7 16.6,17.2 18.1,15.5 19.6,17.2 21.1,16.4 22.6,18.7 24.1,16.4 25.6,15.3 27.1,16.9 28.6,15.9 30.1,16.3 31.6,19.1 33.1,15.8 34.6,16.6 36.1,18.0 37.7,19.2 39.2,15.3 40.7,17.2 42.2,16.0 43.7,15.3 45.2,16.1 46.7,15.1 48.2,17.5 49.7,15.6 51.2,17.3 52.7,15.0 54.2,15.3 55.7,18.9 57.2,18.7 58.7,18.4 60.2,14.9 61.7,17.3 63.3,16.5 64.8,18.0 66.3,17.0 67.8,17.6 69.3,17.7 70.8,16.7 72.3,16.7 73.8,15.2 75.3,16.2 76.8,15.1 78.3,15.4 79.8,14.8 81.3,16.3 82.8,18.6 84.3,15.4 85.8,14.9 87.3,15.2 88.9,16.7 90.4,16.1 91.9,18.4 93.4,15.5 94.9,16.7 96.4,18.1 97.9,19.1 99.4,15.4 100.9,14.8 102.4,19.0 103.9,15.6 105.4,17.5 106.9,18.7 108.4,18.0 109.9,15.8 111.4,15.3 113.0,19.2 114.5,16.5 116.0,19.2 117.5,16.0 119.0,17.8 120.5,15.3 122.0,14.8 123.5,17.0 125.0,14.7 125,23" fill="#1f90b8"/></svg>
<div class="a" style="left:114px;top:720px;width:91px;height:48px;background:linear-gradient(#1a84b0,#1478a2)"></div>
<div class="a" style="left:114px;top:720px;width:42px;height:24px;background:linear-gradient(165deg,#d8f0ff 0,#9cc8ea 22%,#5f93c0 50%,#3a6a94 75%,#2a4c6c 100%)"></div>
<div class="a" style="left:162px;top:731px;width:42px;height:13px;background:radial-gradient(ellipse 20px 6px at 60% 80%,#7a9a50,rgba(90,120,70,0) 100%),linear-gradient(180deg,#4a7090,#2a4a5a)"></div>
<div class="a" style="left:156px;top:720px;width:48px;height:11px;background:#cfe0e8"></div>
<div class="t" style="left:157px;top:721px;font-size:8.8px;letter-spacing:-0.36px;color:#1c2a30;width:48px;overflow:hidden">00145 INSANE CROW FOOD WATER MANOUVER.MTS</div>
<svg class="a" style="left:114px;top:744px" width="91" height="24"><rect width="91" height="24" fill="#12688c"/><polygon points="0,24.0 0.0,13.4 1.5,13.0 3.0,12.2 4.5,13.4 6.1,11.3 7.6,15.4 9.1,13.1 10.6,17.5 12.1,10.6 13.7,12.4 15.2,17.0 16.7,16.7 18.2,16.2 19.7,15.9 21.2,13.7 22.8,14.9 24.3,14.7 25.8,17.3 27.3,11.6 28.8,12.6 30.3,16.1 31.9,17.6 33.4,14.9 34.9,14.2 36.4,10.2 37.9,15.4 39.4,12.8 41.0,12.1 42.5,11.7 44.0,13.3 45.5,13.8 47.0,10.1 48.5,14.2 50.0,16.3 51.6,14.9 53.1,13.0 54.6,11.9 56.1,13.3 57.6,15.6 59.1,17.2 60.7,12.8 62.2,12.7 63.7,16.5 65.2,14.1 66.7,12.8 68.2,18.1 69.8,17.0 71.3,19.1 72.8,16.0 74.3,15.9 75.8,16.8 77.3,15.6 78.9,13.0 80.4,18.2 81.9,13.1 83.4,17.6 84.9,12.3 86.5,13.0 88.0,14.3 89.5,17.6 91.0,13.3 91.0,24.0" fill="#1e87af" stroke="#0c5a84" stroke-width="0.8"/></svg>
<div class="a" style="left:331px;top:720px;width:145px;height:48px;background:linear-gradient(#1a84b0,#1478a2)"></div>
<div class="a" style="left:331px;top:720px;width:42px;height:24px;background:linear-gradient(165deg,#d8f0ff 0,#9cc8ea 22%,#5f93c0 50%,#3a6a94 75%,#2a4c6c 100%)"></div>
<div class="a" style="left:434px;top:720px;width:42px;height:24px;background:linear-gradient(160deg,#3a4a30 0,#6a7a50 25%,#d8ccb8 45%,#e4dccc 70%,#c8bca4 100%)"></div>
<div class="a" style="left:373px;top:720px;width:103px;height:11px;background:#cfe0e8"></div>
<div class="t" style="left:374px;top:721px;font-size:8.8px;letter-spacing:-0.36px;color:#1c2a30;width:103px;overflow:hidden">00145 INSANE CROW FOOD WATER MANOUVER.MTS</div>
<svg class="a" style="left:331px;top:744px" width="145" height="24"><rect width="145" height="24" fill="#12688c"/><polygon points="0,24.0 0.0,13.0 1.5,12.8 3.0,15.9 4.5,13.9 6.0,18.0 7.6,14.0 9.1,17.3 10.6,16.8 12.1,17.5 13.6,19.0 15.1,17.4 16.6,18.7 18.1,14.1 19.6,14.4 21.1,14.5 22.7,18.7 24.2,13.9 25.7,13.2 27.2,15.7 28.7,15.1 30.2,13.4 31.7,16.2 33.2,13.5 34.7,14.2 36.2,12.1 37.8,13.9 39.3,11.8 40.8,12.5 42.3,13.1 43.8,14.0 45.3,12.4 46.8,13.1 48.3,10.5 49.8,13.1 51.4,11.3 52.9,9.8 54.4,11.3 55.9,13.4 57.4,15.7 58.9,13.6 60.4,10.7 61.9,17.0 63.4,13.2 64.9,17.1 66.5,13.1 68.0,11.8 69.5,13.6 71.0,15.8 72.5,12.0 74.0,14.5 75.5,14.7 77.0,14.4 78.5,11.4 80.1,10.3 81.6,15.7 83.1,15.2 84.6,15.0 86.1,14.2 87.6,12.4 89.1,13.7 90.6,17.4 92.1,16.4 93.6,12.6 95.2,11.7 96.7,16.9 98.2,17.7 99.7,15.6 101.2,17.6 102.7,14.8 104.2,13.2 105.7,10.6 107.2,15.0 108.8,15.1 110.3,14.4 111.8,15.8 113.3,15.3 114.8,13.7 116.3,11.9 117.8,12.0 119.3,15.5 120.8,10.5 122.3,13.0 123.9,9.9 125.4,12.3 126.9,10.0 128.4,11.1 129.9,12.3 131.4,8.0 132.9,8.7 134.4,8.2 135.9,7.0 137.4,8.2 139.0,7.9 140.5,11.0 142.0,11.4 143.5,9.2 145.0,13.9 145.0,24.0" fill="#1e87af" stroke="#0c5a84" stroke-width="0.8"/></svg>
<div class="a" style="left:476px;top:719px;width:3px;height:50px;background:#0a0a0a"></div>
<div class="a" style="left:479px;top:720px;width:858px;height:48px;background:linear-gradient(#1a84b0,#1478a2)"></div>
<div class="a" style="left:479px;top:720px;width:41px;height:24px;background:linear-gradient(160deg,#3a4a30 0,#6a7a50 25%,#d8ccb8 45%,#e4dccc 70%,#c8bca4 100%)"></div>
<div class="a" style="left:520px;top:720px;width:214px;height:11px;background:#cfe0e8"></div>
<div class="t" style="left:521px;top:721px;font-size:8.8px;letter-spacing:-0.36px;color:#1c2a30">00145 INSANE CROW FOOD WATER MANOUVER.MTS</div>
<div class="a" style="left:1080px;top:720px;width:214px;height:11px;background:#cfe0e8"></div>
<div class="t" style="left:1081px;top:721px;font-size:8.8px;letter-spacing:-0.36px;color:#1c2a30">00145 INSANE CROW FOOD WATER MANOUVER.MTS</div>
<div class="a" style="left:1294px;top:720px;width:43px;height:24px;background:linear-gradient(180deg,#a89c7c 0,#8a8a60 35%,#5e7a40 65%,#6a8a4a 100%)"></div>
<svg class="a" style="left:479px;top:744px" width="858" height="24"><rect width="858" height="24" fill="#12688c"/><polygon points="0,24.0 0.0,17.9 1.5,16.9 3.0,14.3 4.5,17.9 6.0,15.2 7.5,14.8 9.0,14.9 10.5,16.1 12.0,14.5 13.5,13.9 15.0,14.6 16.5,13.9 18.0,15.0 19.5,12.0 21.0,12.8 22.5,13.7 24.0,15.2 25.5,13.8 27.0,16.0 28.5,13.7 30.0,12.5 31.5,13.9 33.0,15.8 34.5,14.2 36.0,11.8 37.5,14.3 39.0,15.1 40.5,12.4 42.0,15.1 43.5,14.3 45.0,15.8 46.5,16.0 48.0,15.5 49.5,14.8 51.0,13.7 52.5,13.8 54.0,15.5 55.5,17.3 57.0,16.2 58.5,16.5 60.0,17.6 61.5,15.9 63.0,16.2 64.5,15.2 66.0,16.4 67.5,13.3 69.0,14.9 70.5,12.4 72.0,12.5 73.5,15.9 75.0,13.6 76.5,16.9 78.0,14.8 79.5,15.7 81.0,13.3 82.5,16.3 84.0,12.7 85.5,15.6 87.0,12.6 88.5,13.0 90.0,16.3 91.5,17.2 93.0,14.9 94.5,16.4 96.0,16.7 97.5,12.5 99.0,15.9 100.5,12.7 102.0,13.6 103.5,15.3 105.0,15.4 106.5,17.2 108.0,13.0 109.5,15.4 111.0,15.2 112.5,16.8 114.0,17.5 115.5,13.2 117.0,12.6 118.5,14.5 120.0,13.8 121.5,12.4 123.0,12.3 124.5,12.5 126.0,14.2 127.5,12.0 129.0,12.5 130.5,14.2 132.0,15.8 133.5,14.2 135.0,15.5 136.5,14.1 138.0,13.0 139.5,15.6 141.0,14.2 142.5,15.0 144.0,13.1 145.5,12.6 147.0,16.0 148.5,12.7 150.0,14.6 151.5,16.3 153.0,17.0 154.5,13.7 156.0,15.5 157.5,14.4 159.0,13.2 160.5,15.7 162.0,12.6 163.5,12.6 165.0,15.2 166.5,15.7 168.0,17.5 169.5,15.1 171.0,14.2 172.5,15.9 174.0,14.4 175.5,14.0 177.0,17.6 178.5,17.9 180.0,15.2 181.5,14.7 183.0,18.2 184.5,13.3 186.0,14.2 187.5,16.3 189.0,16.5 190.5,13.3 192.0,15.1 193.5,12.7 195.0,15.7 196.5,14.0 198.0,16.3 199.5,16.0 201.0,13.5 202.5,15.5 204.0,14.6 205.5,13.6 207.0,11.7 208.5,15.0 210.0,12.6 211.5,13.4 213.0,15.2 214.5,13.6 216.0,13.2 217.5,15.2 219.0,12.0 220.5,12.0 222.0,16.6 223.5,15.3 225.0,16.6 226.5,16.6 228.0,14.5 229.5,14.7 231.0,15.6 232.5,16.7 234.0,14.0 235.5,18.0 237.0,15.2 238.5,16.6 240.0,16.5 241.5,15.5 243.0,12.4 244.5,14.7 246.0,12.6 247.5,15.3 249.0,13.6 250.5,18.0 252.0,16.0 253.5,16.5 255.0,17.1 256.5,14.9 258.0,17.3 259.5,15.1 261.0,18.0 262.5,15.5 264.0,18.6 265.5,16.1 267.0,13.7 268.5,15.3 270.0,15.4 271.5,15.3 273.0,12.3 274.5,15.2 276.0,15.4 277.5,15.4 279.0,15.1 280.5,14.8 282.0,14.1 283.5,13.7 285.0,15.3 286.5,15.0 288.0,14.7 289.5,13.5 291.0,15.8 292.5,12.4 294.0,16.4 295.5,12.2 297.0,14.2 298.5,14.2 300.0,16.3 301.5,14.4 303.0,14.3 304.5,16.5 306.0,14.2 307.5,14.8 309.0,13.6 310.5,14.3 312.0,13.0 313.5,12.4 315.0,12.0 316.5,13.1 318.0,12.8 319.5,14.1 321.0,15.5 322.5,11.5 324.0,15.5 325.5,14.8 327.0,12.7 328.5,16.5 330.0,15.5 331.5,17.2 333.0,16.7 334.5,14.5 336.0,18.9 337.5,19.0 339.0,17.1 340.5,19.2 342.0,19.5 343.5,17.3 345.0,18.3 346.5,18.1 348.0,16.6 349.5,18.4 351.0,15.5 352.5,18.9 354.0,16.3 355.5,18.4 357.0,17.8 358.5,16.0 360.0,19.2 361.5,18.6 363.0,17.2 364.5,17.7 366.0,20.1 367.5,19.6 369.0,17.8 370.5,15.4 372.0,17.9 373.5,17.3 375.0,17.0 376.5,16.4 378.0,19.6 379.5,20.0 381.0,18.3 382.5,17.0 384.0,17.7 385.5,16.7 387.0,17.5 388.5,16.4 390.0,14.9 391.5,14.0 393.0,16.8 394.5,17.5 396.0,15.7 397.5,16.0 399.0,18.1 400.5,15.5 402.0,16.4 403.5,18.5 405.0,18.8 406.5,17.6 408.0,16.0 409.5,19.1 411.0,18.5 412.5,17.6 414.0,18.9 415.5,17.5 417.0,19.9 418.5,18.9 420.0,17.1 421.5,17.8 423.0,18.3 424.5,18.9 426.0,15.8 427.5,17.7 429.0,16.3 430.5,18.7 432.0,19.7 433.5,20.1 435.0,17.8 436.5,16.7 438.0,15.5 439.5,17.9 441.0,19.6 442.5,16.6 444.0,15.3 445.5,15.9 447.0,18.0 448.5,16.8 450.0,18.7 451.5,16.8 453.0,17.1 454.5,16.9 456.0,17.3 457.5,17.7 459.0,17.3 460.5,17.4 462.0,15.6 463.5,15.6 465.0,18.8 466.5,19.3 468.0,17.1 469.5,16.3 471.0,18.7 472.5,16.3 474.0,16.7 475.5,18.2 477.0,19.4 478.5,15.4 480.0,16.6 481.5,16.3 483.0,16.3 484.5,18.2 486.0,19.4 487.5,19.8 489.0,20.0 490.5,15.7 492.0,18.3 493.5,16.0 495.0,16.9 496.5,19.1 498.0,17.5 499.5,18.5 501.0,19.3 502.5,18.9 504.0,18.4 505.5,19.6 507.0,18.8 508.5,15.9 510.0,16.8 511.5,15.3 513.0,14.6 514.5,13.5 516.0,13.6 517.5,15.7 519.0,13.4 520.5,15.1 522.0,13.5 523.5,17.7 525.0,13.4 526.5,14.4 528.0,15.3 529.5,16.3 531.0,15.2 532.5,15.4 534.0,14.8 535.5,16.8 537.0,16.4 538.5,18.4 540.0,13.6 541.5,13.7 543.0,14.2 544.5,14.9 546.0,14.1 547.5,15.2 549.0,17.1 550.5,18.8 552.0,17.8 553.5,19.2 555.0,15.1 556.5,17.4 558.0,18.7 559.5,15.5 561.0,17.7 562.5,14.7 564.0,18.3 565.5,15.4 567.0,18.1 568.5,16.8 570.0,17.7 571.5,13.2 573.0,15.4 574.5,14.8 576.0,19.1 577.5,17.8 579.0,14.5 580.5,17.6 582.0,13.5 583.5,17.6 585.0,17.0 586.5,17.1 588.0,17.5 589.5,14.7 591.0,15.5 592.5,15.2 594.0,16.9 595.5,14.5 597.0,15.0 598.5,14.1 600.0,16.3 601.5,18.5 603.0,17.2 604.5,15.3 606.0,18.4 607.5,18.1 609.0,17.1 610.5,16.0 612.0,19.2 613.5,15.9 615.0,15.3 616.5,18.8 618.0,16.5 619.5,16.7 621.0,16.9 622.5,15.3 624.0,16.5 625.5,17.4 627.0,16.9 628.5,16.4 630.0,14.0 631.5,13.5 633.0,15.3 634.5,15.4 636.0,17.9 637.5,14.6 639.0,13.7 640.5,17.6 642.0,16.8 643.5,17.2 645.0,15.9 646.5,16.2 648.0,17.7 649.5,18.6 651.0,18.9 652.5,19.4 654.0,18.2 655.5,18.1 657.0,17.0 658.5,19.7 660.0,17.6 661.5,16.6 663.0,18.9 664.5,19.8 666.0,19.8 667.5,16.5 669.0,18.6 670.5,15.9 672.0,19.0 673.5,18.8 675.0,18.2 676.5,19.4 678.0,15.9 679.5,16.7 681.0,19.4 682.5,19.3 684.0,16.2 685.5,19.2 687.0,17.1 688.5,18.8 690.0,20.2 691.5,17.5 693.0,17.4 694.5,17.3 696.0,15.7 697.5,16.2 699.0,18.7 700.5,18.3 702.0,19.9 703.5,18.7 705.0,18.8 706.5,16.9 708.0,18.4 709.5,19.2 711.0,17.6 712.5,19.6 714.0,19.0 715.5,16.1 717.0,18.8 718.5,19.5 720.0,17.8 721.5,15.7 723.0,18.3 724.5,16.9 726.0,15.3 727.5,16.1 729.0,19.4 730.5,18.7 732.0,19.9 733.5,20.3 735.0,18.8 736.5,20.0 738.0,19.1 739.5,16.9 741.0,19.6 742.5,17.5 744.0,19.0 745.5,19.2 747.0,19.0 748.5,20.6 750.0,17.9 751.5,17.0 753.0,18.5 754.5,15.4 756.0,16.9 757.5,15.4 759.0,18.1 760.5,18.6 762.0,17.3 763.5,18.1 765.0,17.8 766.5,19.8 768.0,18.5 769.5,17.8 771.0,20.4 772.5,18.9 774.0,18.1 775.5,17.9 777.0,20.0 778.5,18.7 780.0,19.0 781.5,18.5 783.0,18.5 784.5,19.7 786.0,19.2 787.5,17.6 789.0,17.5 790.5,18.7 792.0,16.2 793.5,18.2 795.0,16.5 796.5,17.0 798.0,18.1 799.5,16.6 801.0,18.0 802.5,18.9 804.0,17.3 805.5,18.3 807.0,18.5 808.5,18.7 810.0,18.3 811.5,17.7 813.0,19.3 814.5,17.4 816.0,17.5 817.5,16.4 819.0,17.9 820.5,15.6 822.0,16.7 823.5,16.5 825.0,15.1 826.5,16.6 828.0,16.9 829.5,18.4 831.0,16.9 832.5,18.6 834.0,19.2 835.5,19.5 837.0,20.5 838.5,17.6 840.0,18.7 841.5,18.2 843.0,16.8 844.5,20.0 846.0,18.3 847.5,18.3 849.0,18.6 850.5,17.9 852.0,16.2 853.5,15.3 855.0,17.0 856.5,15.8 858.0,14.4 858.0,24.0" fill="#1e87af" stroke="#0c5a84" stroke-width="0.8"/></svg>
<svg class="a" style="left:287px;top:647px" width="11" height="8"><path d="M0.5 0.5h10l-4 4v3h-2v-3z" fill="#f0f0f0"/></svg>
<div class="a" style="left:291.5px;top:650px;width:1.2px;height:120px;background:#e0e0e0"></div>
<div class="a" style="left:0;top:769px;width:1366px;height:2px;background:#1e1e1e"></div>
<div class="a" style="left:114px;top:771px;width:1240px;height:11px;background:#2e2e2e"></div>
<div class="a" style="left:124px;top:771px;width:1131px;height:11px;background:#3c3c3c;border-radius:2px"></div>
<svg class="a" style="left:114px;top:771px" width="10" height="11"><path d="M7 2.5v6l-4-3z" fill="#cfcfcf"/></svg>
<div class="a" style="left:1344px;top:771px;width:10px;height:11px;background:#333;border:1px solid #444"></div>
<svg class="a" style="left:1344px;top:771px" width="10" height="11"><path d="M3 2.5v6l4-3z" fill="#cfcfcf"/></svg>
<div class="a" style="left:1354px;top:671px;width:12px;height:100px;background:#2e2e2e"></div>
<div class="a" style="left:1354px;top:671px;width:12px;height:11px;background:#333;border:1px solid #444"></div>
<div class="a" style="left:1355px;top:683px;width:10px;height:62px;background:#3a3a3a;border-radius:2px"></div>
<div class="a" style="left:1354px;top:760px;width:12px;height:11px;background:#333;border:1px solid #444"></div>
<svg class="a" style="left:1354px;top:671px" width="12" height="100"><path d="M3 7.5h6l-3-3.5z M3 93h6l-3 3.5z" fill="#dcdcdc"/></svg>
<div class="a" style="left:0;top:782px;width:1366px;height:18px;background:#282828"></div>
<div class="tab tabsel" style="left:0;top:783px;width:49px;height:17px"><span style="top:5px">Timeline</span></div>
<div class="tab" style="left:51px;top:783px;width:57px;height:17px"><span style="top:5px">Keyframes</span></div>

</body></html>
